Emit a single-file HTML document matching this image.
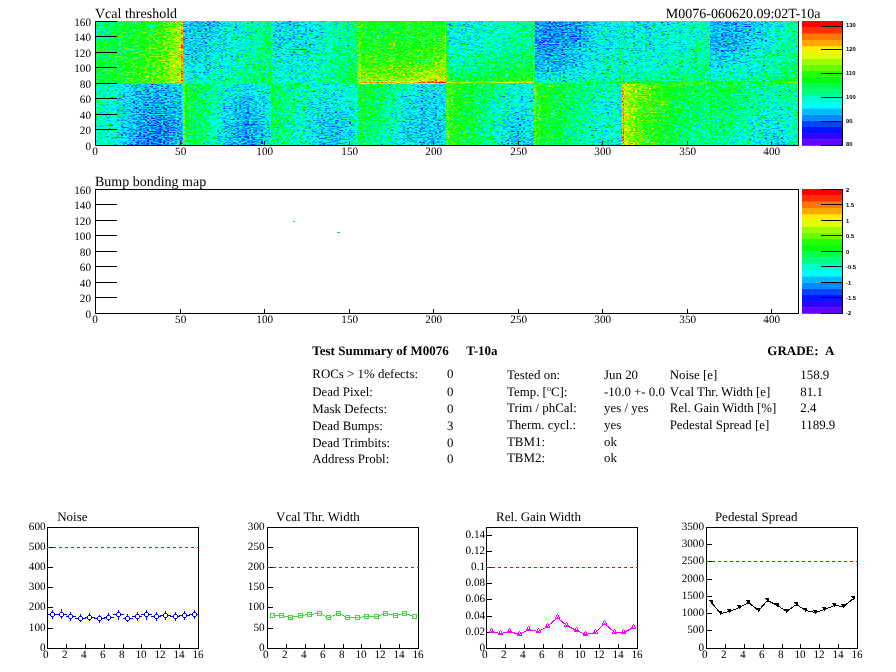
<!DOCTYPE html>
<html><head><meta charset="utf-8"><title>Test Summary of M0076 T-10a</title>
<style>html,body{margin:0;padding:0;background:#fff;}svg{display:block;}text{font-family:"Liberation Serif",serif;fill:#000;text-rendering:geometricPrecision;}.cb{font-family:"Liberation Sans",sans-serif;font-weight:bold;font-size:5.8px;}.ax{font-size:11.2px;}.tt{font-size:14px;}.st{font-size:13px;}.sm{font-size:12.9px;}.b{font-weight:bold;}</style></head><body>
<svg width="896" height="672" viewBox="0 0 896 672" style="opacity:0.9999">
<defs>
<filter id="pal" x="95" y="21" width="704" height="125" filterUnits="userSpaceOnUse" color-interpolation-filters="sRGB"><feTurbulence type="fractalNoise" baseFrequency="0.43 0.83" numOctaves="2" seed="7" result="t"/><feColorMatrix in="t" type="matrix" values="0.3333 0.3333 0.3334 0 0  0.3333 0.3333 0.3334 0 0  0.3333 0.3333 0.3334 0 0  0 0 0 0 1" result="n"/><feFlood flood-color="#fff" x="95" y="21" width="1" height="125" result="fl"/><feOffset in="fl" dx="0" dy="0" x="95" y="21" width="2" height="125" result="cell"/><feTile in="cell" result="mask"/><feComposite in="n" in2="mask" operator="in" result="ne"/><feOffset in="ne" dx="1" dy="0" result="no"/><feMerge result="nb"><feMergeNode in="ne"/><feMergeNode in="no"/></feMerge><feComposite in="SourceGraphic" in2="nb" operator="arithmetic" k1="0" k2="1" k3="1.000" k4="-0.500" result="s"/><feComponentTransfer in="s"><feFuncR type="discrete" tableValues="0.387 0.200 0.000 0.000 0.000 0.000 0.000 0.000 0.000 0.000 0.000 0.133 0.413 0.600 0.880 1.000 1.000 1.000 1.000 1.000"/><feFuncG type="discrete" tableValues="0.000 0.000 0.080 0.267 0.547 0.733 1.000 1.000 1.000 1.000 1.000 1.000 1.000 1.000 1.000 0.933 0.653 0.467 0.187 0.000"/><feFuncB type="discrete" tableValues="1.000 1.000 1.000 1.000 1.000 1.000 0.987 0.800 0.520 0.333 0.053 0.000 0.000 0.000 0.000 0.000 0.000 0.000 0.000 0.000"/></feComponentTransfer></filter>
</defs>
<g>
<rect x="95.0" y="129.7" width="22.3" height="15.8" fill="#00ffcc"/>
<rect x="95.0" y="114.2" width="22.3" height="15.8" fill="#00ffcc"/>
<rect x="95.0" y="98.7" width="22.3" height="15.8" fill="#00ffcc"/>
<rect x="95.0" y="83.2" width="22.3" height="15.8" fill="#00ffcc"/>
<rect x="117.0" y="129.7" width="22.3" height="15.8" fill="#00bbff"/>
<rect x="117.0" y="114.2" width="22.3" height="15.8" fill="#00bbff"/>
<rect x="117.0" y="98.7" width="22.3" height="15.8" fill="#00bbff"/>
<rect x="117.0" y="83.2" width="22.3" height="15.8" fill="#00fffc"/>
<rect x="138.9" y="129.7" width="22.3" height="15.8" fill="#008bff"/>
<rect x="138.9" y="114.2" width="22.3" height="15.8" fill="#008bff"/>
<rect x="138.9" y="98.7" width="22.3" height="15.8" fill="#008bff"/>
<rect x="138.9" y="83.2" width="22.3" height="15.8" fill="#00bbff"/>
<rect x="160.9" y="129.7" width="22.3" height="15.8" fill="#008bff"/>
<rect x="160.9" y="114.2" width="22.3" height="15.8" fill="#008bff"/>
<rect x="160.9" y="98.7" width="22.3" height="15.8" fill="#00bbff"/>
<rect x="160.9" y="83.2" width="22.3" height="15.8" fill="#00bbff"/>
<rect x="95.0" y="67.7" width="22.3" height="15.8" fill="#00ff55"/>
<rect x="95.0" y="52.2" width="22.3" height="15.8" fill="#00ff55"/>
<rect x="95.0" y="36.7" width="22.3" height="15.8" fill="#00ff55"/>
<rect x="95.0" y="21.2" width="22.3" height="15.8" fill="#00ff85"/>
<rect x="117.0" y="67.7" width="22.3" height="15.8" fill="#00ff0e"/>
<rect x="117.0" y="52.2" width="22.3" height="15.8" fill="#00ff0e"/>
<rect x="117.0" y="36.7" width="22.3" height="15.8" fill="#00ff0e"/>
<rect x="117.0" y="21.2" width="22.3" height="15.8" fill="#00ff55"/>
<rect x="138.9" y="67.7" width="22.3" height="15.8" fill="#22ff00"/>
<rect x="138.9" y="52.2" width="22.3" height="15.8" fill="#22ff00"/>
<rect x="138.9" y="36.7" width="22.3" height="15.8" fill="#22ff00"/>
<rect x="138.9" y="21.2" width="22.3" height="15.8" fill="#00ff0e"/>
<rect x="160.9" y="67.7" width="22.3" height="15.8" fill="#99ff00"/>
<rect x="160.9" y="52.2" width="22.3" height="15.8" fill="#99ff00"/>
<rect x="160.9" y="36.7" width="22.3" height="15.8" fill="#69ff00"/>
<rect x="160.9" y="21.2" width="22.3" height="15.8" fill="#69ff00"/>
<rect x="182.9" y="129.7" width="22.3" height="15.8" fill="#00ff55"/>
<rect x="182.9" y="114.2" width="22.3" height="15.8" fill="#00ff55"/>
<rect x="182.9" y="98.7" width="22.3" height="15.8" fill="#00ff55"/>
<rect x="182.9" y="83.2" width="22.3" height="15.8" fill="#00ff55"/>
<rect x="204.8" y="129.7" width="22.3" height="15.8" fill="#00ffcc"/>
<rect x="204.8" y="114.2" width="22.3" height="15.8" fill="#00ffcc"/>
<rect x="204.8" y="98.7" width="22.3" height="15.8" fill="#00ffcc"/>
<rect x="204.8" y="83.2" width="22.3" height="15.8" fill="#00ffcc"/>
<rect x="226.8" y="129.7" width="22.3" height="15.8" fill="#00bbff"/>
<rect x="226.8" y="114.2" width="22.3" height="15.8" fill="#00bbff"/>
<rect x="226.8" y="98.7" width="22.3" height="15.8" fill="#00bbff"/>
<rect x="226.8" y="83.2" width="22.3" height="15.8" fill="#00fffc"/>
<rect x="248.8" y="129.7" width="22.3" height="15.8" fill="#00bbff"/>
<rect x="248.8" y="114.2" width="22.3" height="15.8" fill="#00bbff"/>
<rect x="248.8" y="98.7" width="22.3" height="15.8" fill="#00bbff"/>
<rect x="248.8" y="83.2" width="22.3" height="15.8" fill="#00fffc"/>
<rect x="182.9" y="67.7" width="22.3" height="15.8" fill="#00fffc"/>
<rect x="182.9" y="52.2" width="22.3" height="15.8" fill="#00fffc"/>
<rect x="182.9" y="36.7" width="22.3" height="15.8" fill="#00bbff"/>
<rect x="182.9" y="21.2" width="22.3" height="15.8" fill="#00bbff"/>
<rect x="204.8" y="67.7" width="22.3" height="15.8" fill="#00ffcc"/>
<rect x="204.8" y="52.2" width="22.3" height="15.8" fill="#00fffc"/>
<rect x="204.8" y="36.7" width="22.3" height="15.8" fill="#00fffc"/>
<rect x="204.8" y="21.2" width="22.3" height="15.8" fill="#00bbff"/>
<rect x="226.8" y="67.7" width="22.3" height="15.8" fill="#00ff85"/>
<rect x="226.8" y="52.2" width="22.3" height="15.8" fill="#00ffcc"/>
<rect x="226.8" y="36.7" width="22.3" height="15.8" fill="#00ffcc"/>
<rect x="226.8" y="21.2" width="22.3" height="15.8" fill="#00fffc"/>
<rect x="248.8" y="67.7" width="22.3" height="15.8" fill="#00ff55"/>
<rect x="248.8" y="52.2" width="22.3" height="15.8" fill="#00ff85"/>
<rect x="248.8" y="36.7" width="22.3" height="15.8" fill="#00ff85"/>
<rect x="248.8" y="21.2" width="22.3" height="15.8" fill="#00ff85"/>
<rect x="270.8" y="129.7" width="22.3" height="15.8" fill="#00ff85"/>
<rect x="270.8" y="114.2" width="22.3" height="15.8" fill="#00ff85"/>
<rect x="270.8" y="98.7" width="22.3" height="15.8" fill="#00ff85"/>
<rect x="270.8" y="83.2" width="22.3" height="15.8" fill="#00ff85"/>
<rect x="292.7" y="129.7" width="22.3" height="15.8" fill="#00fffc"/>
<rect x="292.7" y="114.2" width="22.3" height="15.8" fill="#00fffc"/>
<rect x="292.7" y="98.7" width="22.3" height="15.8" fill="#00ffcc"/>
<rect x="292.7" y="83.2" width="22.3" height="15.8" fill="#00ffcc"/>
<rect x="314.7" y="129.7" width="22.3" height="15.8" fill="#00bbff"/>
<rect x="314.7" y="114.2" width="22.3" height="15.8" fill="#00bbff"/>
<rect x="314.7" y="98.7" width="22.3" height="15.8" fill="#00fffc"/>
<rect x="314.7" y="83.2" width="22.3" height="15.8" fill="#00fffc"/>
<rect x="336.7" y="129.7" width="22.3" height="15.8" fill="#00fffc"/>
<rect x="336.7" y="114.2" width="22.3" height="15.8" fill="#00fffc"/>
<rect x="336.7" y="98.7" width="22.3" height="15.8" fill="#00fffc"/>
<rect x="336.7" y="83.2" width="22.3" height="15.8" fill="#00ffcc"/>
<rect x="270.8" y="67.7" width="22.3" height="15.8" fill="#00fffc"/>
<rect x="270.8" y="52.2" width="22.3" height="15.8" fill="#00fffc"/>
<rect x="270.8" y="36.7" width="22.3" height="15.8" fill="#00fffc"/>
<rect x="270.8" y="21.2" width="22.3" height="15.8" fill="#00fffc"/>
<rect x="292.7" y="67.7" width="22.3" height="15.8" fill="#00ffcc"/>
<rect x="292.7" y="52.2" width="22.3" height="15.8" fill="#00fffc"/>
<rect x="292.7" y="36.7" width="22.3" height="15.8" fill="#00fffc"/>
<rect x="292.7" y="21.2" width="22.3" height="15.8" fill="#00fffc"/>
<rect x="314.7" y="67.7" width="22.3" height="15.8" fill="#00ff85"/>
<rect x="314.7" y="52.2" width="22.3" height="15.8" fill="#00ffcc"/>
<rect x="314.7" y="36.7" width="22.3" height="15.8" fill="#00ffcc"/>
<rect x="314.7" y="21.2" width="22.3" height="15.8" fill="#00ffcc"/>
<rect x="336.7" y="67.7" width="22.3" height="15.8" fill="#00ff55"/>
<rect x="336.7" y="52.2" width="22.3" height="15.8" fill="#00ff85"/>
<rect x="336.7" y="36.7" width="22.3" height="15.8" fill="#00ff85"/>
<rect x="336.7" y="21.2" width="22.3" height="15.8" fill="#00ff85"/>
<rect x="358.6" y="129.7" width="22.3" height="15.8" fill="#00ff55"/>
<rect x="358.6" y="114.2" width="22.3" height="15.8" fill="#00ff55"/>
<rect x="358.6" y="98.7" width="22.3" height="15.8" fill="#00ff55"/>
<rect x="358.6" y="83.2" width="22.3" height="15.8" fill="#00ff55"/>
<rect x="380.6" y="129.7" width="22.3" height="15.8" fill="#00ffcc"/>
<rect x="380.6" y="114.2" width="22.3" height="15.8" fill="#00ffcc"/>
<rect x="380.6" y="98.7" width="22.3" height="15.8" fill="#00ffcc"/>
<rect x="380.6" y="83.2" width="22.3" height="15.8" fill="#00ff85"/>
<rect x="402.6" y="129.7" width="22.3" height="15.8" fill="#00bbff"/>
<rect x="402.6" y="114.2" width="22.3" height="15.8" fill="#00bbff"/>
<rect x="402.6" y="98.7" width="22.3" height="15.8" fill="#00fffc"/>
<rect x="402.6" y="83.2" width="22.3" height="15.8" fill="#00fffc"/>
<rect x="424.5" y="129.7" width="22.3" height="15.8" fill="#00bbff"/>
<rect x="424.5" y="114.2" width="22.3" height="15.8" fill="#00bbff"/>
<rect x="424.5" y="98.7" width="22.3" height="15.8" fill="#00bbff"/>
<rect x="424.5" y="83.2" width="22.3" height="15.8" fill="#00fffc"/>
<rect x="358.6" y="67.7" width="22.3" height="15.8" fill="#69ff00"/>
<rect x="358.6" y="52.2" width="22.3" height="15.8" fill="#22ff00"/>
<rect x="358.6" y="36.7" width="22.3" height="15.8" fill="#00ff0e"/>
<rect x="358.6" y="21.2" width="22.3" height="15.8" fill="#00ff0e"/>
<rect x="380.6" y="67.7" width="22.3" height="15.8" fill="#69ff00"/>
<rect x="380.6" y="52.2" width="22.3" height="15.8" fill="#22ff00"/>
<rect x="380.6" y="36.7" width="22.3" height="15.8" fill="#00ff0e"/>
<rect x="380.6" y="21.2" width="22.3" height="15.8" fill="#00ff0e"/>
<rect x="402.6" y="67.7" width="22.3" height="15.8" fill="#69ff00"/>
<rect x="402.6" y="52.2" width="22.3" height="15.8" fill="#22ff00"/>
<rect x="402.6" y="36.7" width="22.3" height="15.8" fill="#00ff0e"/>
<rect x="402.6" y="21.2" width="22.3" height="15.8" fill="#00ff0e"/>
<rect x="424.5" y="67.7" width="22.3" height="15.8" fill="#99ff00"/>
<rect x="424.5" y="52.2" width="22.3" height="15.8" fill="#69ff00"/>
<rect x="424.5" y="36.7" width="22.3" height="15.8" fill="#22ff00"/>
<rect x="424.5" y="21.2" width="22.3" height="15.8" fill="#00ff0e"/>
<rect x="446.5" y="129.7" width="22.3" height="15.8" fill="#00ff0e"/>
<rect x="446.5" y="114.2" width="22.3" height="15.8" fill="#00ff0e"/>
<rect x="446.5" y="98.7" width="22.3" height="15.8" fill="#00ff0e"/>
<rect x="446.5" y="83.2" width="22.3" height="15.8" fill="#00ff0e"/>
<rect x="468.5" y="129.7" width="22.3" height="15.8" fill="#00ff85"/>
<rect x="468.5" y="114.2" width="22.3" height="15.8" fill="#00ff55"/>
<rect x="468.5" y="98.7" width="22.3" height="15.8" fill="#00ff55"/>
<rect x="468.5" y="83.2" width="22.3" height="15.8" fill="#00ff55"/>
<rect x="490.4" y="129.7" width="22.3" height="15.8" fill="#00fffc"/>
<rect x="490.4" y="114.2" width="22.3" height="15.8" fill="#00ffcc"/>
<rect x="490.4" y="98.7" width="22.3" height="15.8" fill="#00ffcc"/>
<rect x="490.4" y="83.2" width="22.3" height="15.8" fill="#00ffcc"/>
<rect x="512.4" y="129.7" width="22.3" height="15.8" fill="#00bbff"/>
<rect x="512.4" y="114.2" width="22.3" height="15.8" fill="#00fffc"/>
<rect x="512.4" y="98.7" width="22.3" height="15.8" fill="#00fffc"/>
<rect x="512.4" y="83.2" width="22.3" height="15.8" fill="#00ffcc"/>
<rect x="446.5" y="67.7" width="22.3" height="15.8" fill="#00ff55"/>
<rect x="446.5" y="52.2" width="22.3" height="15.8" fill="#00ffcc"/>
<rect x="446.5" y="36.7" width="22.3" height="15.8" fill="#00fffc"/>
<rect x="446.5" y="21.2" width="22.3" height="15.8" fill="#00fffc"/>
<rect x="468.5" y="67.7" width="22.3" height="15.8" fill="#00ff55"/>
<rect x="468.5" y="52.2" width="22.3" height="15.8" fill="#00ff85"/>
<rect x="468.5" y="36.7" width="22.3" height="15.8" fill="#00ffcc"/>
<rect x="468.5" y="21.2" width="22.3" height="15.8" fill="#00fffc"/>
<rect x="490.4" y="67.7" width="22.3" height="15.8" fill="#00ff55"/>
<rect x="490.4" y="52.2" width="22.3" height="15.8" fill="#00ff85"/>
<rect x="490.4" y="36.7" width="22.3" height="15.8" fill="#00ffcc"/>
<rect x="490.4" y="21.2" width="22.3" height="15.8" fill="#00ffcc"/>
<rect x="512.4" y="67.7" width="22.3" height="15.8" fill="#00ff0e"/>
<rect x="512.4" y="52.2" width="22.3" height="15.8" fill="#00ff55"/>
<rect x="512.4" y="36.7" width="22.3" height="15.8" fill="#00ff85"/>
<rect x="512.4" y="21.2" width="22.3" height="15.8" fill="#00ff85"/>
<rect x="534.4" y="129.7" width="22.3" height="15.8" fill="#00ff0e"/>
<rect x="534.4" y="114.2" width="22.3" height="15.8" fill="#00ff0e"/>
<rect x="534.4" y="98.7" width="22.3" height="15.8" fill="#00ff0e"/>
<rect x="534.4" y="83.2" width="22.3" height="15.8" fill="#00ff0e"/>
<rect x="556.3" y="129.7" width="22.3" height="15.8" fill="#00ff55"/>
<rect x="556.3" y="114.2" width="22.3" height="15.8" fill="#00ff55"/>
<rect x="556.3" y="98.7" width="22.3" height="15.8" fill="#00ff55"/>
<rect x="556.3" y="83.2" width="22.3" height="15.8" fill="#00ff55"/>
<rect x="578.3" y="129.7" width="22.3" height="15.8" fill="#00ffcc"/>
<rect x="578.3" y="114.2" width="22.3" height="15.8" fill="#00ffcc"/>
<rect x="578.3" y="98.7" width="22.3" height="15.8" fill="#00ffcc"/>
<rect x="578.3" y="83.2" width="22.3" height="15.8" fill="#00ff85"/>
<rect x="600.3" y="129.7" width="22.3" height="15.8" fill="#00ffcc"/>
<rect x="600.3" y="114.2" width="22.3" height="15.8" fill="#00fffc"/>
<rect x="600.3" y="98.7" width="22.3" height="15.8" fill="#00ffcc"/>
<rect x="600.3" y="83.2" width="22.3" height="15.8" fill="#00ffcc"/>
<rect x="534.4" y="67.7" width="22.3" height="15.8" fill="#00fffc"/>
<rect x="534.4" y="52.2" width="22.3" height="15.8" fill="#00bbff"/>
<rect x="534.4" y="36.7" width="22.3" height="15.8" fill="#008bff"/>
<rect x="534.4" y="21.2" width="22.3" height="15.8" fill="#008bff"/>
<rect x="556.3" y="67.7" width="22.3" height="15.8" fill="#00fffc"/>
<rect x="556.3" y="52.2" width="22.3" height="15.8" fill="#00bbff"/>
<rect x="556.3" y="36.7" width="22.3" height="15.8" fill="#008bff"/>
<rect x="556.3" y="21.2" width="22.3" height="15.8" fill="#008bff"/>
<rect x="578.3" y="67.7" width="22.3" height="15.8" fill="#00ffcc"/>
<rect x="578.3" y="52.2" width="22.3" height="15.8" fill="#00fffc"/>
<rect x="578.3" y="36.7" width="22.3" height="15.8" fill="#00bbff"/>
<rect x="578.3" y="21.2" width="22.3" height="15.8" fill="#00bbff"/>
<rect x="600.3" y="67.7" width="22.3" height="15.8" fill="#00ffcc"/>
<rect x="600.3" y="52.2" width="22.3" height="15.8" fill="#00ffcc"/>
<rect x="600.3" y="36.7" width="22.3" height="15.8" fill="#00fffc"/>
<rect x="600.3" y="21.2" width="22.3" height="15.8" fill="#00fffc"/>
<rect x="622.2" y="129.7" width="22.3" height="15.8" fill="#69ff00"/>
<rect x="622.2" y="114.2" width="22.3" height="15.8" fill="#69ff00"/>
<rect x="622.2" y="98.7" width="22.3" height="15.8" fill="#69ff00"/>
<rect x="622.2" y="83.2" width="22.3" height="15.8" fill="#99ff00"/>
<rect x="644.2" y="129.7" width="22.3" height="15.8" fill="#00ff0e"/>
<rect x="644.2" y="114.2" width="22.3" height="15.8" fill="#22ff00"/>
<rect x="644.2" y="98.7" width="22.3" height="15.8" fill="#22ff00"/>
<rect x="644.2" y="83.2" width="22.3" height="15.8" fill="#22ff00"/>
<rect x="666.2" y="129.7" width="22.3" height="15.8" fill="#00ff55"/>
<rect x="666.2" y="114.2" width="22.3" height="15.8" fill="#00ff55"/>
<rect x="666.2" y="98.7" width="22.3" height="15.8" fill="#00ff55"/>
<rect x="666.2" y="83.2" width="22.3" height="15.8" fill="#00ff0e"/>
<rect x="688.2" y="129.7" width="22.3" height="15.8" fill="#00ff85"/>
<rect x="688.2" y="114.2" width="22.3" height="15.8" fill="#00ff85"/>
<rect x="688.2" y="98.7" width="22.3" height="15.8" fill="#00ff85"/>
<rect x="688.2" y="83.2" width="22.3" height="15.8" fill="#00ff55"/>
<rect x="622.2" y="67.7" width="22.3" height="15.8" fill="#00ffcc"/>
<rect x="622.2" y="52.2" width="22.3" height="15.8" fill="#00ffcc"/>
<rect x="622.2" y="36.7" width="22.3" height="15.8" fill="#00fffc"/>
<rect x="622.2" y="21.2" width="22.3" height="15.8" fill="#00fffc"/>
<rect x="644.2" y="67.7" width="22.3" height="15.8" fill="#00ffcc"/>
<rect x="644.2" y="52.2" width="22.3" height="15.8" fill="#00ffcc"/>
<rect x="644.2" y="36.7" width="22.3" height="15.8" fill="#00fffc"/>
<rect x="644.2" y="21.2" width="22.3" height="15.8" fill="#00fffc"/>
<rect x="666.2" y="67.7" width="22.3" height="15.8" fill="#00ff85"/>
<rect x="666.2" y="52.2" width="22.3" height="15.8" fill="#00ffcc"/>
<rect x="666.2" y="36.7" width="22.3" height="15.8" fill="#00ffcc"/>
<rect x="666.2" y="21.2" width="22.3" height="15.8" fill="#00fffc"/>
<rect x="688.2" y="67.7" width="22.3" height="15.8" fill="#00ff85"/>
<rect x="688.2" y="52.2" width="22.3" height="15.8" fill="#00ffcc"/>
<rect x="688.2" y="36.7" width="22.3" height="15.8" fill="#00ffcc"/>
<rect x="688.2" y="21.2" width="22.3" height="15.8" fill="#00ffcc"/>
<rect x="710.1" y="129.7" width="22.3" height="15.8" fill="#00ff85"/>
<rect x="710.1" y="114.2" width="22.3" height="15.8" fill="#00ff85"/>
<rect x="710.1" y="98.7" width="22.3" height="15.8" fill="#00ff55"/>
<rect x="710.1" y="83.2" width="22.3" height="15.8" fill="#00ff55"/>
<rect x="732.1" y="129.7" width="22.3" height="15.8" fill="#00ffcc"/>
<rect x="732.1" y="114.2" width="22.3" height="15.8" fill="#00ffcc"/>
<rect x="732.1" y="98.7" width="22.3" height="15.8" fill="#00ff85"/>
<rect x="732.1" y="83.2" width="22.3" height="15.8" fill="#00ff85"/>
<rect x="754.1" y="129.7" width="22.3" height="15.8" fill="#00fffc"/>
<rect x="754.1" y="114.2" width="22.3" height="15.8" fill="#00fffc"/>
<rect x="754.1" y="98.7" width="22.3" height="15.8" fill="#00ffcc"/>
<rect x="754.1" y="83.2" width="22.3" height="15.8" fill="#00ff85"/>
<rect x="776.0" y="129.7" width="22.3" height="15.8" fill="#00ffcc"/>
<rect x="776.0" y="114.2" width="22.3" height="15.8" fill="#00ffcc"/>
<rect x="776.0" y="98.7" width="22.3" height="15.8" fill="#00ffcc"/>
<rect x="776.0" y="83.2" width="22.3" height="15.8" fill="#00ff85"/>
<rect x="710.1" y="67.7" width="22.3" height="15.8" fill="#00ffcc"/>
<rect x="710.1" y="52.2" width="22.3" height="15.8" fill="#00fffc"/>
<rect x="710.1" y="36.7" width="22.3" height="15.8" fill="#00bbff"/>
<rect x="710.1" y="21.2" width="22.3" height="15.8" fill="#00bbff"/>
<rect x="732.1" y="67.7" width="22.3" height="15.8" fill="#00ffcc"/>
<rect x="732.1" y="52.2" width="22.3" height="15.8" fill="#00fffc"/>
<rect x="732.1" y="36.7" width="22.3" height="15.8" fill="#00bbff"/>
<rect x="732.1" y="21.2" width="22.3" height="15.8" fill="#00bbff"/>
<rect x="754.1" y="67.7" width="22.3" height="15.8" fill="#00ff85"/>
<rect x="754.1" y="52.2" width="22.3" height="15.8" fill="#00ffcc"/>
<rect x="754.1" y="36.7" width="22.3" height="15.8" fill="#00fffc"/>
<rect x="754.1" y="21.2" width="22.3" height="15.8" fill="#00fffc"/>
<rect x="776.0" y="67.7" width="22.3" height="15.8" fill="#00ff55"/>
<rect x="776.0" y="52.2" width="22.3" height="15.8" fill="#00ff85"/>
<rect x="776.0" y="36.7" width="22.3" height="15.8" fill="#00ffcc"/>
<rect x="776.0" y="21.2" width="22.3" height="15.8" fill="#00ffcc"/>
</g>
<g filter="url(#pal)">
<rect x="95" y="21" width="704" height="125" fill="#808080"/>
<rect x="95.0" y="139.0" width="7.0" height="6.5" fill="#636363"/>
<rect x="95.0" y="132.8" width="7.0" height="6.5" fill="#636363"/>
<rect x="95.0" y="126.6" width="7.0" height="6.5" fill="#636363"/>
<rect x="95.0" y="120.4" width="7.0" height="6.5" fill="#636363"/>
<rect x="95.0" y="114.2" width="7.0" height="6.5" fill="#636363"/>
<rect x="95.0" y="108.0" width="7.0" height="6.5" fill="#636363"/>
<rect x="95.0" y="101.8" width="7.0" height="6.5" fill="#636363"/>
<rect x="95.0" y="95.6" width="7.0" height="6.5" fill="#636363"/>
<rect x="95.0" y="89.4" width="7.0" height="6.5" fill="#646464"/>
<rect x="95.0" y="83.2" width="7.0" height="6.5" fill="#656565"/>
<rect x="101.8" y="139.0" width="7.0" height="6.5" fill="#5e5e5e"/>
<rect x="101.8" y="132.8" width="7.0" height="6.5" fill="#5e5e5e"/>
<rect x="101.8" y="126.6" width="7.0" height="6.5" fill="#5e5e5e"/>
<rect x="101.8" y="120.4" width="7.0" height="6.5" fill="#5d5d5d"/>
<rect x="101.8" y="114.2" width="7.0" height="6.5" fill="#5d5d5d"/>
<rect x="101.8" y="108.0" width="7.0" height="6.5" fill="#5d5d5d"/>
<rect x="101.8" y="101.8" width="7.0" height="6.5" fill="#5d5d5d"/>
<rect x="101.8" y="95.6" width="7.0" height="6.5" fill="#5e5e5e"/>
<rect x="101.8" y="89.4" width="7.0" height="6.5" fill="#5f5f5f"/>
<rect x="101.8" y="83.2" width="7.0" height="6.5" fill="#606060"/>
<rect x="108.5" y="139.0" width="7.0" height="6.5" fill="#595959"/>
<rect x="108.5" y="132.8" width="7.0" height="6.5" fill="#595959"/>
<rect x="108.5" y="126.6" width="7.0" height="6.5" fill="#585858"/>
<rect x="108.5" y="120.4" width="7.0" height="6.5" fill="#585858"/>
<rect x="108.5" y="114.2" width="7.0" height="6.5" fill="#585858"/>
<rect x="108.5" y="108.0" width="7.0" height="6.5" fill="#585858"/>
<rect x="108.5" y="101.8" width="7.0" height="6.5" fill="#585858"/>
<rect x="108.5" y="95.6" width="7.0" height="6.5" fill="#595959"/>
<rect x="108.5" y="89.4" width="7.0" height="6.5" fill="#5a5a5a"/>
<rect x="108.5" y="83.2" width="7.0" height="6.5" fill="#5c5c5c"/>
<rect x="115.3" y="139.0" width="7.0" height="6.5" fill="#545454"/>
<rect x="115.3" y="132.8" width="7.0" height="6.5" fill="#535353"/>
<rect x="115.3" y="126.6" width="7.0" height="6.5" fill="#535353"/>
<rect x="115.3" y="120.4" width="7.0" height="6.5" fill="#525252"/>
<rect x="115.3" y="114.2" width="7.0" height="6.5" fill="#525252"/>
<rect x="115.3" y="108.0" width="7.0" height="6.5" fill="#525252"/>
<rect x="115.3" y="101.8" width="7.0" height="6.5" fill="#525252"/>
<rect x="115.3" y="95.6" width="7.0" height="6.5" fill="#545454"/>
<rect x="115.3" y="89.4" width="7.0" height="6.5" fill="#555555"/>
<rect x="115.3" y="83.2" width="7.0" height="6.5" fill="#575757"/>
<rect x="122.0" y="139.0" width="7.0" height="6.5" fill="#4c4c4c"/>
<rect x="122.0" y="132.8" width="7.0" height="6.5" fill="#4c4c4c"/>
<rect x="122.0" y="126.6" width="7.0" height="6.5" fill="#4b4b4b"/>
<rect x="122.0" y="120.4" width="7.0" height="6.5" fill="#4b4b4b"/>
<rect x="122.0" y="114.2" width="7.0" height="6.5" fill="#4c4c4c"/>
<rect x="122.0" y="108.0" width="7.0" height="6.5" fill="#4c4c4c"/>
<rect x="122.0" y="101.8" width="7.0" height="6.5" fill="#4d4d4d"/>
<rect x="122.0" y="95.6" width="7.0" height="6.5" fill="#4f4f4f"/>
<rect x="122.0" y="89.4" width="7.0" height="6.5" fill="#505050"/>
<rect x="122.0" y="83.2" width="7.0" height="6.5" fill="#525252"/>
<rect x="128.8" y="139.0" width="7.0" height="6.5" fill="#444444"/>
<rect x="128.8" y="132.8" width="7.0" height="6.5" fill="#444444"/>
<rect x="128.8" y="126.6" width="7.0" height="6.5" fill="#444444"/>
<rect x="128.8" y="120.4" width="7.0" height="6.5" fill="#454545"/>
<rect x="128.8" y="114.2" width="7.0" height="6.5" fill="#464646"/>
<rect x="128.8" y="108.0" width="7.0" height="6.5" fill="#474747"/>
<rect x="128.8" y="101.8" width="7.0" height="6.5" fill="#484848"/>
<rect x="128.8" y="95.6" width="7.0" height="6.5" fill="#494949"/>
<rect x="128.8" y="89.4" width="7.0" height="6.5" fill="#4b4b4b"/>
<rect x="128.8" y="83.2" width="7.0" height="6.5" fill="#4d4d4d"/>
<rect x="135.6" y="139.0" width="7.0" height="6.5" fill="#3b3b3b"/>
<rect x="135.6" y="132.8" width="7.0" height="6.5" fill="#3c3c3c"/>
<rect x="135.6" y="126.6" width="7.0" height="6.5" fill="#3d3d3d"/>
<rect x="135.6" y="120.4" width="7.0" height="6.5" fill="#3e3e3e"/>
<rect x="135.6" y="114.2" width="7.0" height="6.5" fill="#3f3f3f"/>
<rect x="135.6" y="108.0" width="7.0" height="6.5" fill="#414141"/>
<rect x="135.6" y="101.8" width="7.0" height="6.5" fill="#424242"/>
<rect x="135.6" y="95.6" width="7.0" height="6.5" fill="#444444"/>
<rect x="135.6" y="89.4" width="7.0" height="6.5" fill="#464646"/>
<rect x="135.6" y="83.2" width="7.0" height="6.5" fill="#494949"/>
<rect x="142.3" y="139.0" width="7.0" height="6.5" fill="#393939"/>
<rect x="142.3" y="132.8" width="7.0" height="6.5" fill="#3a3a3a"/>
<rect x="142.3" y="126.6" width="7.0" height="6.5" fill="#3a3a3a"/>
<rect x="142.3" y="120.4" width="7.0" height="6.5" fill="#3b3b3b"/>
<rect x="142.3" y="114.2" width="7.0" height="6.5" fill="#3d3d3d"/>
<rect x="142.3" y="108.0" width="7.0" height="6.5" fill="#3f3f3f"/>
<rect x="142.3" y="101.8" width="7.0" height="6.5" fill="#404040"/>
<rect x="142.3" y="95.6" width="7.0" height="6.5" fill="#434343"/>
<rect x="142.3" y="89.4" width="7.0" height="6.5" fill="#454545"/>
<rect x="142.3" y="83.2" width="7.0" height="6.5" fill="#484848"/>
<rect x="149.1" y="139.0" width="7.0" height="6.5" fill="#373737"/>
<rect x="149.1" y="132.8" width="7.0" height="6.5" fill="#373737"/>
<rect x="149.1" y="126.6" width="7.0" height="6.5" fill="#383838"/>
<rect x="149.1" y="120.4" width="7.0" height="6.5" fill="#393939"/>
<rect x="149.1" y="114.2" width="7.0" height="6.5" fill="#3b3b3b"/>
<rect x="149.1" y="108.0" width="7.0" height="6.5" fill="#3d3d3d"/>
<rect x="149.1" y="101.8" width="7.0" height="6.5" fill="#3f3f3f"/>
<rect x="149.1" y="95.6" width="7.0" height="6.5" fill="#414141"/>
<rect x="149.1" y="89.4" width="7.0" height="6.5" fill="#444444"/>
<rect x="149.1" y="83.2" width="7.0" height="6.5" fill="#474747"/>
<rect x="155.8" y="139.0" width="7.0" height="6.5" fill="#343434"/>
<rect x="155.8" y="132.8" width="7.0" height="6.5" fill="#353535"/>
<rect x="155.8" y="126.6" width="7.0" height="6.5" fill="#363636"/>
<rect x="155.8" y="120.4" width="7.0" height="6.5" fill="#373737"/>
<rect x="155.8" y="114.2" width="7.0" height="6.5" fill="#393939"/>
<rect x="155.8" y="108.0" width="7.0" height="6.5" fill="#3b3b3b"/>
<rect x="155.8" y="101.8" width="7.0" height="6.5" fill="#3d3d3d"/>
<rect x="155.8" y="95.6" width="7.0" height="6.5" fill="#404040"/>
<rect x="155.8" y="89.4" width="7.0" height="6.5" fill="#434343"/>
<rect x="155.8" y="83.2" width="7.0" height="6.5" fill="#464646"/>
<rect x="162.6" y="139.0" width="7.0" height="6.5" fill="#383838"/>
<rect x="162.6" y="132.8" width="7.0" height="6.5" fill="#393939"/>
<rect x="162.6" y="126.6" width="7.0" height="6.5" fill="#393939"/>
<rect x="162.6" y="120.4" width="7.0" height="6.5" fill="#3a3a3a"/>
<rect x="162.6" y="114.2" width="7.0" height="6.5" fill="#3c3c3c"/>
<rect x="162.6" y="108.0" width="7.0" height="6.5" fill="#3e3e3e"/>
<rect x="162.6" y="101.8" width="7.0" height="6.5" fill="#404040"/>
<rect x="162.6" y="95.6" width="7.0" height="6.5" fill="#424242"/>
<rect x="162.6" y="89.4" width="7.0" height="6.5" fill="#454545"/>
<rect x="162.6" y="83.2" width="7.0" height="6.5" fill="#474747"/>
<rect x="169.4" y="139.0" width="7.0" height="6.5" fill="#3d3d3d"/>
<rect x="169.4" y="132.8" width="7.0" height="6.5" fill="#3d3d3d"/>
<rect x="169.4" y="126.6" width="7.0" height="6.5" fill="#3d3d3d"/>
<rect x="169.4" y="120.4" width="7.0" height="6.5" fill="#3d3d3d"/>
<rect x="169.4" y="114.2" width="7.0" height="6.5" fill="#3f3f3f"/>
<rect x="169.4" y="108.0" width="7.0" height="6.5" fill="#414141"/>
<rect x="169.4" y="101.8" width="7.0" height="6.5" fill="#434343"/>
<rect x="169.4" y="95.6" width="7.0" height="6.5" fill="#454545"/>
<rect x="169.4" y="89.4" width="7.0" height="6.5" fill="#474747"/>
<rect x="169.4" y="83.2" width="7.0" height="6.5" fill="#494949"/>
<rect x="176.1" y="139.0" width="7.0" height="6.5" fill="#434343"/>
<rect x="176.1" y="132.8" width="7.0" height="6.5" fill="#424242"/>
<rect x="176.1" y="126.6" width="7.0" height="6.5" fill="#414141"/>
<rect x="176.1" y="120.4" width="7.0" height="6.5" fill="#414141"/>
<rect x="176.1" y="114.2" width="7.0" height="6.5" fill="#434343"/>
<rect x="176.1" y="108.0" width="7.0" height="6.5" fill="#444444"/>
<rect x="176.1" y="101.8" width="7.0" height="6.5" fill="#464646"/>
<rect x="176.1" y="95.6" width="7.0" height="6.5" fill="#474747"/>
<rect x="176.1" y="89.4" width="7.0" height="6.5" fill="#494949"/>
<rect x="176.1" y="83.2" width="7.0" height="6.5" fill="#4b4b4b"/>
<rect x="95.0" y="77.0" width="7.0" height="6.5" fill="#7c7c7c"/>
<rect x="95.0" y="70.8" width="7.0" height="6.5" fill="#7c7c7c"/>
<rect x="95.0" y="64.6" width="7.0" height="6.5" fill="#7c7c7c"/>
<rect x="95.0" y="58.4" width="7.0" height="6.5" fill="#7c7c7c"/>
<rect x="95.0" y="52.2" width="7.0" height="6.5" fill="#7b7b7b"/>
<rect x="95.0" y="46.0" width="7.0" height="6.5" fill="#7a7a7a"/>
<rect x="95.0" y="39.8" width="7.0" height="6.5" fill="#797979"/>
<rect x="95.0" y="33.6" width="7.0" height="6.5" fill="#757575"/>
<rect x="95.0" y="27.4" width="7.0" height="6.5" fill="#6f6f6f"/>
<rect x="95.0" y="21.2" width="7.0" height="6.5" fill="#696969"/>
<rect x="101.8" y="77.0" width="7.0" height="6.5" fill="#7f7f7f"/>
<rect x="101.8" y="70.8" width="7.0" height="6.5" fill="#7f7f7f"/>
<rect x="101.8" y="64.6" width="7.0" height="6.5" fill="#7e7e7e"/>
<rect x="101.8" y="58.4" width="7.0" height="6.5" fill="#7e7e7e"/>
<rect x="101.8" y="52.2" width="7.0" height="6.5" fill="#7d7d7d"/>
<rect x="101.8" y="46.0" width="7.0" height="6.5" fill="#7c7c7c"/>
<rect x="101.8" y="39.8" width="7.0" height="6.5" fill="#7c7c7c"/>
<rect x="101.8" y="33.6" width="7.0" height="6.5" fill="#777777"/>
<rect x="101.8" y="27.4" width="7.0" height="6.5" fill="#727272"/>
<rect x="101.8" y="21.2" width="7.0" height="6.5" fill="#6d6d6d"/>
<rect x="108.5" y="77.0" width="7.0" height="6.5" fill="#828282"/>
<rect x="108.5" y="70.8" width="7.0" height="6.5" fill="#818181"/>
<rect x="108.5" y="64.6" width="7.0" height="6.5" fill="#818181"/>
<rect x="108.5" y="58.4" width="7.0" height="6.5" fill="#808080"/>
<rect x="108.5" y="52.2" width="7.0" height="6.5" fill="#7f7f7f"/>
<rect x="108.5" y="46.0" width="7.0" height="6.5" fill="#7f7f7f"/>
<rect x="108.5" y="39.8" width="7.0" height="6.5" fill="#7e7e7e"/>
<rect x="108.5" y="33.6" width="7.0" height="6.5" fill="#7a7a7a"/>
<rect x="108.5" y="27.4" width="7.0" height="6.5" fill="#767676"/>
<rect x="108.5" y="21.2" width="7.0" height="6.5" fill="#727272"/>
<rect x="115.3" y="77.0" width="7.0" height="6.5" fill="#858585"/>
<rect x="115.3" y="70.8" width="7.0" height="6.5" fill="#848484"/>
<rect x="115.3" y="64.6" width="7.0" height="6.5" fill="#838383"/>
<rect x="115.3" y="58.4" width="7.0" height="6.5" fill="#838383"/>
<rect x="115.3" y="52.2" width="7.0" height="6.5" fill="#828282"/>
<rect x="115.3" y="46.0" width="7.0" height="6.5" fill="#818181"/>
<rect x="115.3" y="39.8" width="7.0" height="6.5" fill="#808080"/>
<rect x="115.3" y="33.6" width="7.0" height="6.5" fill="#7d7d7d"/>
<rect x="115.3" y="27.4" width="7.0" height="6.5" fill="#7a7a7a"/>
<rect x="115.3" y="21.2" width="7.0" height="6.5" fill="#767676"/>
<rect x="122.0" y="77.0" width="7.0" height="6.5" fill="#898989"/>
<rect x="122.0" y="70.8" width="7.0" height="6.5" fill="#888888"/>
<rect x="122.0" y="64.6" width="7.0" height="6.5" fill="#878787"/>
<rect x="122.0" y="58.4" width="7.0" height="6.5" fill="#868686"/>
<rect x="122.0" y="52.2" width="7.0" height="6.5" fill="#858585"/>
<rect x="122.0" y="46.0" width="7.0" height="6.5" fill="#848484"/>
<rect x="122.0" y="39.8" width="7.0" height="6.5" fill="#848484"/>
<rect x="122.0" y="33.6" width="7.0" height="6.5" fill="#818181"/>
<rect x="122.0" y="27.4" width="7.0" height="6.5" fill="#7e7e7e"/>
<rect x="122.0" y="21.2" width="7.0" height="6.5" fill="#7a7a7a"/>
<rect x="128.8" y="77.0" width="7.0" height="6.5" fill="#8d8d8d"/>
<rect x="128.8" y="70.8" width="7.0" height="6.5" fill="#8b8b8b"/>
<rect x="128.8" y="64.6" width="7.0" height="6.5" fill="#8a8a8a"/>
<rect x="128.8" y="58.4" width="7.0" height="6.5" fill="#898989"/>
<rect x="128.8" y="52.2" width="7.0" height="6.5" fill="#888888"/>
<rect x="128.8" y="46.0" width="7.0" height="6.5" fill="#878787"/>
<rect x="128.8" y="39.8" width="7.0" height="6.5" fill="#878787"/>
<rect x="128.8" y="33.6" width="7.0" height="6.5" fill="#848484"/>
<rect x="128.8" y="27.4" width="7.0" height="6.5" fill="#828282"/>
<rect x="128.8" y="21.2" width="7.0" height="6.5" fill="#7f7f7f"/>
<rect x="135.6" y="77.0" width="7.0" height="6.5" fill="#909090"/>
<rect x="135.6" y="70.8" width="7.0" height="6.5" fill="#8f8f8f"/>
<rect x="135.6" y="64.6" width="7.0" height="6.5" fill="#8d8d8d"/>
<rect x="135.6" y="58.4" width="7.0" height="6.5" fill="#8c8c8c"/>
<rect x="135.6" y="52.2" width="7.0" height="6.5" fill="#8b8b8b"/>
<rect x="135.6" y="46.0" width="7.0" height="6.5" fill="#8a8a8a"/>
<rect x="135.6" y="39.8" width="7.0" height="6.5" fill="#8a8a8a"/>
<rect x="135.6" y="33.6" width="7.0" height="6.5" fill="#888888"/>
<rect x="135.6" y="27.4" width="7.0" height="6.5" fill="#858585"/>
<rect x="135.6" y="21.2" width="7.0" height="6.5" fill="#838383"/>
<rect x="142.3" y="77.0" width="7.0" height="6.5" fill="#949494"/>
<rect x="142.3" y="70.8" width="7.0" height="6.5" fill="#929292"/>
<rect x="142.3" y="64.6" width="7.0" height="6.5" fill="#919191"/>
<rect x="142.3" y="58.4" width="7.0" height="6.5" fill="#8f8f8f"/>
<rect x="142.3" y="52.2" width="7.0" height="6.5" fill="#8f8f8f"/>
<rect x="142.3" y="46.0" width="7.0" height="6.5" fill="#8e8e8e"/>
<rect x="142.3" y="39.8" width="7.0" height="6.5" fill="#8d8d8d"/>
<rect x="142.3" y="33.6" width="7.0" height="6.5" fill="#8b8b8b"/>
<rect x="142.3" y="27.4" width="7.0" height="6.5" fill="#898989"/>
<rect x="142.3" y="21.2" width="7.0" height="6.5" fill="#878787"/>
<rect x="149.1" y="77.0" width="7.0" height="6.5" fill="#979797"/>
<rect x="149.1" y="70.8" width="7.0" height="6.5" fill="#969696"/>
<rect x="149.1" y="64.6" width="7.0" height="6.5" fill="#949494"/>
<rect x="149.1" y="58.4" width="7.0" height="6.5" fill="#939393"/>
<rect x="149.1" y="52.2" width="7.0" height="6.5" fill="#929292"/>
<rect x="149.1" y="46.0" width="7.0" height="6.5" fill="#919191"/>
<rect x="149.1" y="39.8" width="7.0" height="6.5" fill="#919191"/>
<rect x="149.1" y="33.6" width="7.0" height="6.5" fill="#8f8f8f"/>
<rect x="149.1" y="27.4" width="7.0" height="6.5" fill="#8c8c8c"/>
<rect x="149.1" y="21.2" width="7.0" height="6.5" fill="#8a8a8a"/>
<rect x="155.8" y="77.0" width="7.0" height="6.5" fill="#9b9b9b"/>
<rect x="155.8" y="70.8" width="7.0" height="6.5" fill="#999999"/>
<rect x="155.8" y="64.6" width="7.0" height="6.5" fill="#989898"/>
<rect x="155.8" y="58.4" width="7.0" height="6.5" fill="#969696"/>
<rect x="155.8" y="52.2" width="7.0" height="6.5" fill="#959595"/>
<rect x="155.8" y="46.0" width="7.0" height="6.5" fill="#959595"/>
<rect x="155.8" y="39.8" width="7.0" height="6.5" fill="#949494"/>
<rect x="155.8" y="33.6" width="7.0" height="6.5" fill="#929292"/>
<rect x="155.8" y="27.4" width="7.0" height="6.5" fill="#909090"/>
<rect x="155.8" y="21.2" width="7.0" height="6.5" fill="#8e8e8e"/>
<rect x="162.6" y="77.0" width="7.0" height="6.5" fill="#a1a1a1"/>
<rect x="162.6" y="70.8" width="7.0" height="6.5" fill="#a0a0a0"/>
<rect x="162.6" y="64.6" width="7.0" height="6.5" fill="#9f9f9f"/>
<rect x="162.6" y="58.4" width="7.0" height="6.5" fill="#9d9d9d"/>
<rect x="162.6" y="52.2" width="7.0" height="6.5" fill="#9d9d9d"/>
<rect x="162.6" y="46.0" width="7.0" height="6.5" fill="#9c9c9c"/>
<rect x="162.6" y="39.8" width="7.0" height="6.5" fill="#9b9b9b"/>
<rect x="162.6" y="33.6" width="7.0" height="6.5" fill="#999999"/>
<rect x="162.6" y="27.4" width="7.0" height="6.5" fill="#979797"/>
<rect x="162.6" y="21.2" width="7.0" height="6.5" fill="#959595"/>
<rect x="169.4" y="77.0" width="7.0" height="6.5" fill="#adadad"/>
<rect x="169.4" y="70.8" width="7.0" height="6.5" fill="#acacac"/>
<rect x="169.4" y="64.6" width="7.0" height="6.5" fill="#ababab"/>
<rect x="169.4" y="58.4" width="7.0" height="6.5" fill="#aaaaaa"/>
<rect x="169.4" y="52.2" width="7.0" height="6.5" fill="#a8a8a8"/>
<rect x="169.4" y="46.0" width="7.0" height="6.5" fill="#a7a7a7"/>
<rect x="169.4" y="39.8" width="7.0" height="6.5" fill="#a6a6a6"/>
<rect x="169.4" y="33.6" width="7.0" height="6.5" fill="#a4a4a4"/>
<rect x="169.4" y="27.4" width="7.0" height="6.5" fill="#a3a3a3"/>
<rect x="169.4" y="21.2" width="7.0" height="6.5" fill="#a1a1a1"/>
<rect x="176.1" y="77.0" width="7.0" height="6.5" fill="#b5b5b5"/>
<rect x="176.1" y="70.8" width="7.0" height="6.5" fill="#b4b4b4"/>
<rect x="176.1" y="64.6" width="7.0" height="6.5" fill="#b4b4b4"/>
<rect x="176.1" y="58.4" width="7.0" height="6.5" fill="#b3b3b3"/>
<rect x="176.1" y="52.2" width="7.0" height="6.5" fill="#b1b1b1"/>
<rect x="176.1" y="46.0" width="7.0" height="6.5" fill="#b0b0b0"/>
<rect x="176.1" y="39.8" width="7.0" height="6.5" fill="#aeaeae"/>
<rect x="176.1" y="33.6" width="7.0" height="6.5" fill="#adadad"/>
<rect x="176.1" y="27.4" width="7.0" height="6.5" fill="#ababab"/>
<rect x="176.1" y="21.2" width="7.0" height="6.5" fill="#aaaaaa"/>
<rect x="181.2" y="77.0" width="1.9" height="6.5" fill="#eeeeee"/>
<rect x="181.2" y="70.8" width="1.9" height="6.5" fill="#ededed"/>
<rect x="181.2" y="64.6" width="1.9" height="6.5" fill="#ececec"/>
<rect x="181.2" y="58.4" width="1.9" height="6.5" fill="#ebebeb"/>
<rect x="181.2" y="52.2" width="1.9" height="6.5" fill="#eaeaea"/>
<rect x="181.2" y="46.0" width="1.9" height="6.5" fill="#e9e9e9"/>
<rect x="181.2" y="39.8" width="1.9" height="6.5" fill="#e7e7e7"/>
<rect x="181.2" y="33.6" width="1.9" height="6.5" fill="#e6e6e6"/>
<rect x="181.2" y="27.4" width="1.9" height="6.5" fill="#e4e4e4"/>
<rect x="181.2" y="21.2" width="1.9" height="6.5" fill="#e3e3e3"/>
<rect x="95.0" y="81.6" width="7.0" height="1.8" fill="#818181"/>
<rect x="101.8" y="81.6" width="7.0" height="1.8" fill="#848484"/>
<rect x="108.5" y="81.6" width="7.0" height="1.8" fill="#878787"/>
<rect x="115.3" y="81.6" width="7.0" height="1.8" fill="#8a8a8a"/>
<rect x="122.0" y="81.6" width="7.0" height="1.8" fill="#8d8d8d"/>
<rect x="128.8" y="81.6" width="7.0" height="1.8" fill="#919191"/>
<rect x="135.6" y="81.6" width="7.0" height="1.8" fill="#949494"/>
<rect x="142.3" y="81.6" width="7.0" height="1.8" fill="#989898"/>
<rect x="149.1" y="81.6" width="7.0" height="1.8" fill="#9c9c9c"/>
<rect x="155.8" y="81.6" width="7.0" height="1.8" fill="#a0a0a0"/>
<rect x="162.6" y="81.6" width="7.0" height="1.8" fill="#a8a8a8"/>
<rect x="169.4" y="81.6" width="7.0" height="1.8" fill="#b3b3b3"/>
<rect x="176.1" y="81.6" width="7.0" height="1.8" fill="#bbbbbb"/>
<rect x="182.9" y="139.0" width="7.0" height="6.5" fill="#808080"/>
<rect x="182.9" y="132.8" width="7.0" height="6.5" fill="#808080"/>
<rect x="182.9" y="126.6" width="7.0" height="6.5" fill="#808080"/>
<rect x="182.9" y="120.4" width="7.0" height="6.5" fill="#808080"/>
<rect x="182.9" y="114.2" width="7.0" height="6.5" fill="#818181"/>
<rect x="182.9" y="108.0" width="7.0" height="6.5" fill="#818181"/>
<rect x="182.9" y="101.8" width="7.0" height="6.5" fill="#828282"/>
<rect x="182.9" y="95.6" width="7.0" height="6.5" fill="#838383"/>
<rect x="182.9" y="89.4" width="7.0" height="6.5" fill="#848484"/>
<rect x="182.9" y="83.2" width="7.0" height="6.5" fill="#858585"/>
<rect x="189.6" y="139.0" width="7.0" height="6.5" fill="#7a7a7a"/>
<rect x="189.6" y="132.8" width="7.0" height="6.5" fill="#7a7a7a"/>
<rect x="189.6" y="126.6" width="7.0" height="6.5" fill="#7a7a7a"/>
<rect x="189.6" y="120.4" width="7.0" height="6.5" fill="#7a7a7a"/>
<rect x="189.6" y="114.2" width="7.0" height="6.5" fill="#7b7b7b"/>
<rect x="189.6" y="108.0" width="7.0" height="6.5" fill="#7b7b7b"/>
<rect x="189.6" y="101.8" width="7.0" height="6.5" fill="#7c7c7c"/>
<rect x="189.6" y="95.6" width="7.0" height="6.5" fill="#7d7d7d"/>
<rect x="189.6" y="89.4" width="7.0" height="6.5" fill="#7e7e7e"/>
<rect x="189.6" y="83.2" width="7.0" height="6.5" fill="#7f7f7f"/>
<rect x="196.4" y="139.0" width="7.0" height="6.5" fill="#747474"/>
<rect x="196.4" y="132.8" width="7.0" height="6.5" fill="#747474"/>
<rect x="196.4" y="126.6" width="7.0" height="6.5" fill="#747474"/>
<rect x="196.4" y="120.4" width="7.0" height="6.5" fill="#747474"/>
<rect x="196.4" y="114.2" width="7.0" height="6.5" fill="#747474"/>
<rect x="196.4" y="108.0" width="7.0" height="6.5" fill="#757575"/>
<rect x="196.4" y="101.8" width="7.0" height="6.5" fill="#767676"/>
<rect x="196.4" y="95.6" width="7.0" height="6.5" fill="#777777"/>
<rect x="196.4" y="89.4" width="7.0" height="6.5" fill="#787878"/>
<rect x="196.4" y="83.2" width="7.0" height="6.5" fill="#7a7a7a"/>
<rect x="203.2" y="139.0" width="7.0" height="6.5" fill="#6c6c6c"/>
<rect x="203.2" y="132.8" width="7.0" height="6.5" fill="#6c6c6c"/>
<rect x="203.2" y="126.6" width="7.0" height="6.5" fill="#6c6c6c"/>
<rect x="203.2" y="120.4" width="7.0" height="6.5" fill="#6d6d6d"/>
<rect x="203.2" y="114.2" width="7.0" height="6.5" fill="#6d6d6d"/>
<rect x="203.2" y="108.0" width="7.0" height="6.5" fill="#6e6e6e"/>
<rect x="203.2" y="101.8" width="7.0" height="6.5" fill="#6f6f6f"/>
<rect x="203.2" y="95.6" width="7.0" height="6.5" fill="#707070"/>
<rect x="203.2" y="89.4" width="7.0" height="6.5" fill="#727272"/>
<rect x="203.2" y="83.2" width="7.0" height="6.5" fill="#747474"/>
<rect x="209.9" y="139.0" width="7.0" height="6.5" fill="#616161"/>
<rect x="209.9" y="132.8" width="7.0" height="6.5" fill="#616161"/>
<rect x="209.9" y="126.6" width="7.0" height="6.5" fill="#616161"/>
<rect x="209.9" y="120.4" width="7.0" height="6.5" fill="#616161"/>
<rect x="209.9" y="114.2" width="7.0" height="6.5" fill="#626262"/>
<rect x="209.9" y="108.0" width="7.0" height="6.5" fill="#636363"/>
<rect x="209.9" y="101.8" width="7.0" height="6.5" fill="#646464"/>
<rect x="209.9" y="95.6" width="7.0" height="6.5" fill="#666666"/>
<rect x="209.9" y="89.4" width="7.0" height="6.5" fill="#686868"/>
<rect x="209.9" y="83.2" width="7.0" height="6.5" fill="#6b6b6b"/>
<rect x="216.7" y="139.0" width="7.0" height="6.5" fill="#555555"/>
<rect x="216.7" y="132.8" width="7.0" height="6.5" fill="#555555"/>
<rect x="216.7" y="126.6" width="7.0" height="6.5" fill="#555555"/>
<rect x="216.7" y="120.4" width="7.0" height="6.5" fill="#555555"/>
<rect x="216.7" y="114.2" width="7.0" height="6.5" fill="#575757"/>
<rect x="216.7" y="108.0" width="7.0" height="6.5" fill="#585858"/>
<rect x="216.7" y="101.8" width="7.0" height="6.5" fill="#595959"/>
<rect x="216.7" y="95.6" width="7.0" height="6.5" fill="#5c5c5c"/>
<rect x="216.7" y="89.4" width="7.0" height="6.5" fill="#5f5f5f"/>
<rect x="216.7" y="83.2" width="7.0" height="6.5" fill="#626262"/>
<rect x="223.4" y="139.0" width="7.0" height="6.5" fill="#4a4a4a"/>
<rect x="223.4" y="132.8" width="7.0" height="6.5" fill="#4a4a4a"/>
<rect x="223.4" y="126.6" width="7.0" height="6.5" fill="#4a4a4a"/>
<rect x="223.4" y="120.4" width="7.0" height="6.5" fill="#4a4a4a"/>
<rect x="223.4" y="114.2" width="7.0" height="6.5" fill="#4b4b4b"/>
<rect x="223.4" y="108.0" width="7.0" height="6.5" fill="#4d4d4d"/>
<rect x="223.4" y="101.8" width="7.0" height="6.5" fill="#4e4e4e"/>
<rect x="223.4" y="95.6" width="7.0" height="6.5" fill="#525252"/>
<rect x="223.4" y="89.4" width="7.0" height="6.5" fill="#555555"/>
<rect x="223.4" y="83.2" width="7.0" height="6.5" fill="#595959"/>
<rect x="230.2" y="139.0" width="7.0" height="6.5" fill="#454545"/>
<rect x="230.2" y="132.8" width="7.0" height="6.5" fill="#454545"/>
<rect x="230.2" y="126.6" width="7.0" height="6.5" fill="#454545"/>
<rect x="230.2" y="120.4" width="7.0" height="6.5" fill="#454545"/>
<rect x="230.2" y="114.2" width="7.0" height="6.5" fill="#474747"/>
<rect x="230.2" y="108.0" width="7.0" height="6.5" fill="#494949"/>
<rect x="230.2" y="101.8" width="7.0" height="6.5" fill="#4a4a4a"/>
<rect x="230.2" y="95.6" width="7.0" height="6.5" fill="#4e4e4e"/>
<rect x="230.2" y="89.4" width="7.0" height="6.5" fill="#525252"/>
<rect x="230.2" y="83.2" width="7.0" height="6.5" fill="#565656"/>
<rect x="237.0" y="139.0" width="7.0" height="6.5" fill="#404040"/>
<rect x="237.0" y="132.8" width="7.0" height="6.5" fill="#404040"/>
<rect x="237.0" y="126.6" width="7.0" height="6.5" fill="#404040"/>
<rect x="237.0" y="120.4" width="7.0" height="6.5" fill="#414141"/>
<rect x="237.0" y="114.2" width="7.0" height="6.5" fill="#434343"/>
<rect x="237.0" y="108.0" width="7.0" height="6.5" fill="#454545"/>
<rect x="237.0" y="101.8" width="7.0" height="6.5" fill="#474747"/>
<rect x="237.0" y="95.6" width="7.0" height="6.5" fill="#4a4a4a"/>
<rect x="237.0" y="89.4" width="7.0" height="6.5" fill="#4f4f4f"/>
<rect x="237.0" y="83.2" width="7.0" height="6.5" fill="#535353"/>
<rect x="243.7" y="139.0" width="7.0" height="6.5" fill="#3c3c3c"/>
<rect x="243.7" y="132.8" width="7.0" height="6.5" fill="#3c3c3c"/>
<rect x="243.7" y="126.6" width="7.0" height="6.5" fill="#3c3c3c"/>
<rect x="243.7" y="120.4" width="7.0" height="6.5" fill="#3c3c3c"/>
<rect x="243.7" y="114.2" width="7.0" height="6.5" fill="#3e3e3e"/>
<rect x="243.7" y="108.0" width="7.0" height="6.5" fill="#414141"/>
<rect x="243.7" y="101.8" width="7.0" height="6.5" fill="#434343"/>
<rect x="243.7" y="95.6" width="7.0" height="6.5" fill="#474747"/>
<rect x="243.7" y="89.4" width="7.0" height="6.5" fill="#4b4b4b"/>
<rect x="243.7" y="83.2" width="7.0" height="6.5" fill="#505050"/>
<rect x="250.5" y="139.0" width="7.0" height="6.5" fill="#414141"/>
<rect x="250.5" y="132.8" width="7.0" height="6.5" fill="#404040"/>
<rect x="250.5" y="126.6" width="7.0" height="6.5" fill="#404040"/>
<rect x="250.5" y="120.4" width="7.0" height="6.5" fill="#404040"/>
<rect x="250.5" y="114.2" width="7.0" height="6.5" fill="#424242"/>
<rect x="250.5" y="108.0" width="7.0" height="6.5" fill="#444444"/>
<rect x="250.5" y="101.8" width="7.0" height="6.5" fill="#464646"/>
<rect x="250.5" y="95.6" width="7.0" height="6.5" fill="#4a4a4a"/>
<rect x="250.5" y="89.4" width="7.0" height="6.5" fill="#4e4e4e"/>
<rect x="250.5" y="83.2" width="7.0" height="6.5" fill="#515151"/>
<rect x="257.2" y="139.0" width="7.0" height="6.5" fill="#474747"/>
<rect x="257.2" y="132.8" width="7.0" height="6.5" fill="#474747"/>
<rect x="257.2" y="126.6" width="7.0" height="6.5" fill="#464646"/>
<rect x="257.2" y="120.4" width="7.0" height="6.5" fill="#464646"/>
<rect x="257.2" y="114.2" width="7.0" height="6.5" fill="#484848"/>
<rect x="257.2" y="108.0" width="7.0" height="6.5" fill="#4a4a4a"/>
<rect x="257.2" y="101.8" width="7.0" height="6.5" fill="#4c4c4c"/>
<rect x="257.2" y="95.6" width="7.0" height="6.5" fill="#4e4e4e"/>
<rect x="257.2" y="89.4" width="7.0" height="6.5" fill="#515151"/>
<rect x="257.2" y="83.2" width="7.0" height="6.5" fill="#545454"/>
<rect x="264.0" y="139.0" width="7.0" height="6.5" fill="#4e4e4e"/>
<rect x="264.0" y="132.8" width="7.0" height="6.5" fill="#4e4e4e"/>
<rect x="264.0" y="126.6" width="7.0" height="6.5" fill="#4d4d4d"/>
<rect x="264.0" y="120.4" width="7.0" height="6.5" fill="#4d4d4d"/>
<rect x="264.0" y="114.2" width="7.0" height="6.5" fill="#4e4e4e"/>
<rect x="264.0" y="108.0" width="7.0" height="6.5" fill="#505050"/>
<rect x="264.0" y="101.8" width="7.0" height="6.5" fill="#515151"/>
<rect x="264.0" y="95.6" width="7.0" height="6.5" fill="#535353"/>
<rect x="264.0" y="89.4" width="7.0" height="6.5" fill="#555555"/>
<rect x="264.0" y="83.2" width="7.0" height="6.5" fill="#575757"/>
<rect x="182.9" y="139.0" width="1.9" height="6.5" fill="#a0a0a0"/>
<rect x="182.9" y="132.8" width="1.9" height="6.5" fill="#a0a0a0"/>
<rect x="182.9" y="126.6" width="1.9" height="6.5" fill="#a0a0a0"/>
<rect x="182.9" y="120.4" width="1.9" height="6.5" fill="#a0a0a0"/>
<rect x="182.9" y="114.2" width="1.9" height="6.5" fill="#a1a1a1"/>
<rect x="182.9" y="108.0" width="1.9" height="6.5" fill="#a1a1a1"/>
<rect x="182.9" y="101.8" width="1.9" height="6.5" fill="#a2a2a2"/>
<rect x="182.9" y="95.6" width="1.9" height="6.5" fill="#a3a3a3"/>
<rect x="182.9" y="89.4" width="1.9" height="6.5" fill="#a4a4a4"/>
<rect x="182.9" y="83.2" width="1.9" height="6.5" fill="#a4a4a4"/>
<rect x="182.9" y="77.0" width="7.0" height="6.5" fill="#585858"/>
<rect x="182.9" y="70.8" width="7.0" height="6.5" fill="#555555"/>
<rect x="182.9" y="64.6" width="7.0" height="6.5" fill="#515151"/>
<rect x="182.9" y="58.4" width="7.0" height="6.5" fill="#4f4f4f"/>
<rect x="182.9" y="52.2" width="7.0" height="6.5" fill="#4d4d4d"/>
<rect x="182.9" y="46.0" width="7.0" height="6.5" fill="#4c4c4c"/>
<rect x="182.9" y="39.8" width="7.0" height="6.5" fill="#4a4a4a"/>
<rect x="182.9" y="33.6" width="7.0" height="6.5" fill="#494949"/>
<rect x="182.9" y="27.4" width="7.0" height="6.5" fill="#484848"/>
<rect x="182.9" y="21.2" width="7.0" height="6.5" fill="#484848"/>
<rect x="189.6" y="77.0" width="7.0" height="6.5" fill="#595959"/>
<rect x="189.6" y="70.8" width="7.0" height="6.5" fill="#565656"/>
<rect x="189.6" y="64.6" width="7.0" height="6.5" fill="#525252"/>
<rect x="189.6" y="58.4" width="7.0" height="6.5" fill="#4f4f4f"/>
<rect x="189.6" y="52.2" width="7.0" height="6.5" fill="#4e4e4e"/>
<rect x="189.6" y="46.0" width="7.0" height="6.5" fill="#4c4c4c"/>
<rect x="189.6" y="39.8" width="7.0" height="6.5" fill="#4a4a4a"/>
<rect x="189.6" y="33.6" width="7.0" height="6.5" fill="#494949"/>
<rect x="189.6" y="27.4" width="7.0" height="6.5" fill="#484848"/>
<rect x="189.6" y="21.2" width="7.0" height="6.5" fill="#484848"/>
<rect x="196.4" y="77.0" width="7.0" height="6.5" fill="#5b5b5b"/>
<rect x="196.4" y="70.8" width="7.0" height="6.5" fill="#575757"/>
<rect x="196.4" y="64.6" width="7.0" height="6.5" fill="#535353"/>
<rect x="196.4" y="58.4" width="7.0" height="6.5" fill="#505050"/>
<rect x="196.4" y="52.2" width="7.0" height="6.5" fill="#4e4e4e"/>
<rect x="196.4" y="46.0" width="7.0" height="6.5" fill="#4c4c4c"/>
<rect x="196.4" y="39.8" width="7.0" height="6.5" fill="#4a4a4a"/>
<rect x="196.4" y="33.6" width="7.0" height="6.5" fill="#494949"/>
<rect x="196.4" y="27.4" width="7.0" height="6.5" fill="#484848"/>
<rect x="196.4" y="21.2" width="7.0" height="6.5" fill="#484848"/>
<rect x="203.2" y="77.0" width="7.0" height="6.5" fill="#5c5c5c"/>
<rect x="203.2" y="70.8" width="7.0" height="6.5" fill="#585858"/>
<rect x="203.2" y="64.6" width="7.0" height="6.5" fill="#555555"/>
<rect x="203.2" y="58.4" width="7.0" height="6.5" fill="#515151"/>
<rect x="203.2" y="52.2" width="7.0" height="6.5" fill="#4f4f4f"/>
<rect x="203.2" y="46.0" width="7.0" height="6.5" fill="#4d4d4d"/>
<rect x="203.2" y="39.8" width="7.0" height="6.5" fill="#4b4b4b"/>
<rect x="203.2" y="33.6" width="7.0" height="6.5" fill="#4a4a4a"/>
<rect x="203.2" y="27.4" width="7.0" height="6.5" fill="#494949"/>
<rect x="203.2" y="21.2" width="7.0" height="6.5" fill="#484848"/>
<rect x="209.9" y="77.0" width="7.0" height="6.5" fill="#5e5e5e"/>
<rect x="209.9" y="70.8" width="7.0" height="6.5" fill="#5b5b5b"/>
<rect x="209.9" y="64.6" width="7.0" height="6.5" fill="#575757"/>
<rect x="209.9" y="58.4" width="7.0" height="6.5" fill="#535353"/>
<rect x="209.9" y="52.2" width="7.0" height="6.5" fill="#515151"/>
<rect x="209.9" y="46.0" width="7.0" height="6.5" fill="#4f4f4f"/>
<rect x="209.9" y="39.8" width="7.0" height="6.5" fill="#4d4d4d"/>
<rect x="209.9" y="33.6" width="7.0" height="6.5" fill="#4c4c4c"/>
<rect x="209.9" y="27.4" width="7.0" height="6.5" fill="#4b4b4b"/>
<rect x="209.9" y="21.2" width="7.0" height="6.5" fill="#4a4a4a"/>
<rect x="216.7" y="77.0" width="7.0" height="6.5" fill="#616161"/>
<rect x="216.7" y="70.8" width="7.0" height="6.5" fill="#5d5d5d"/>
<rect x="216.7" y="64.6" width="7.0" height="6.5" fill="#595959"/>
<rect x="216.7" y="58.4" width="7.0" height="6.5" fill="#565656"/>
<rect x="216.7" y="52.2" width="7.0" height="6.5" fill="#545454"/>
<rect x="216.7" y="46.0" width="7.0" height="6.5" fill="#515151"/>
<rect x="216.7" y="39.8" width="7.0" height="6.5" fill="#4f4f4f"/>
<rect x="216.7" y="33.6" width="7.0" height="6.5" fill="#4e4e4e"/>
<rect x="216.7" y="27.4" width="7.0" height="6.5" fill="#4d4d4d"/>
<rect x="216.7" y="21.2" width="7.0" height="6.5" fill="#4d4d4d"/>
<rect x="223.4" y="77.0" width="7.0" height="6.5" fill="#636363"/>
<rect x="223.4" y="70.8" width="7.0" height="6.5" fill="#5f5f5f"/>
<rect x="223.4" y="64.6" width="7.0" height="6.5" fill="#5c5c5c"/>
<rect x="223.4" y="58.4" width="7.0" height="6.5" fill="#585858"/>
<rect x="223.4" y="52.2" width="7.0" height="6.5" fill="#565656"/>
<rect x="223.4" y="46.0" width="7.0" height="6.5" fill="#545454"/>
<rect x="223.4" y="39.8" width="7.0" height="6.5" fill="#515151"/>
<rect x="223.4" y="33.6" width="7.0" height="6.5" fill="#505050"/>
<rect x="223.4" y="27.4" width="7.0" height="6.5" fill="#505050"/>
<rect x="223.4" y="21.2" width="7.0" height="6.5" fill="#4f4f4f"/>
<rect x="230.2" y="77.0" width="7.0" height="6.5" fill="#666666"/>
<rect x="230.2" y="70.8" width="7.0" height="6.5" fill="#636363"/>
<rect x="230.2" y="64.6" width="7.0" height="6.5" fill="#606060"/>
<rect x="230.2" y="58.4" width="7.0" height="6.5" fill="#5d5d5d"/>
<rect x="230.2" y="52.2" width="7.0" height="6.5" fill="#5b5b5b"/>
<rect x="230.2" y="46.0" width="7.0" height="6.5" fill="#595959"/>
<rect x="230.2" y="39.8" width="7.0" height="6.5" fill="#575757"/>
<rect x="230.2" y="33.6" width="7.0" height="6.5" fill="#565656"/>
<rect x="230.2" y="27.4" width="7.0" height="6.5" fill="#555555"/>
<rect x="230.2" y="21.2" width="7.0" height="6.5" fill="#545454"/>
<rect x="237.0" y="77.0" width="7.0" height="6.5" fill="#6a6a6a"/>
<rect x="237.0" y="70.8" width="7.0" height="6.5" fill="#676767"/>
<rect x="237.0" y="64.6" width="7.0" height="6.5" fill="#646464"/>
<rect x="237.0" y="58.4" width="7.0" height="6.5" fill="#616161"/>
<rect x="237.0" y="52.2" width="7.0" height="6.5" fill="#606060"/>
<rect x="237.0" y="46.0" width="7.0" height="6.5" fill="#5e5e5e"/>
<rect x="237.0" y="39.8" width="7.0" height="6.5" fill="#5c5c5c"/>
<rect x="237.0" y="33.6" width="7.0" height="6.5" fill="#5b5b5b"/>
<rect x="237.0" y="27.4" width="7.0" height="6.5" fill="#5a5a5a"/>
<rect x="237.0" y="21.2" width="7.0" height="6.5" fill="#5a5a5a"/>
<rect x="243.7" y="77.0" width="7.0" height="6.5" fill="#6d6d6d"/>
<rect x="243.7" y="70.8" width="7.0" height="6.5" fill="#6b6b6b"/>
<rect x="243.7" y="64.6" width="7.0" height="6.5" fill="#686868"/>
<rect x="243.7" y="58.4" width="7.0" height="6.5" fill="#666666"/>
<rect x="243.7" y="52.2" width="7.0" height="6.5" fill="#656565"/>
<rect x="243.7" y="46.0" width="7.0" height="6.5" fill="#636363"/>
<rect x="243.7" y="39.8" width="7.0" height="6.5" fill="#626262"/>
<rect x="243.7" y="33.6" width="7.0" height="6.5" fill="#616161"/>
<rect x="243.7" y="27.4" width="7.0" height="6.5" fill="#606060"/>
<rect x="243.7" y="21.2" width="7.0" height="6.5" fill="#5f5f5f"/>
<rect x="250.5" y="77.0" width="7.0" height="6.5" fill="#717171"/>
<rect x="250.5" y="70.8" width="7.0" height="6.5" fill="#6f6f6f"/>
<rect x="250.5" y="64.6" width="7.0" height="6.5" fill="#6d6d6d"/>
<rect x="250.5" y="58.4" width="7.0" height="6.5" fill="#6b6b6b"/>
<rect x="250.5" y="52.2" width="7.0" height="6.5" fill="#696969"/>
<rect x="250.5" y="46.0" width="7.0" height="6.5" fill="#686868"/>
<rect x="250.5" y="39.8" width="7.0" height="6.5" fill="#676767"/>
<rect x="250.5" y="33.6" width="7.0" height="6.5" fill="#666666"/>
<rect x="250.5" y="27.4" width="7.0" height="6.5" fill="#656565"/>
<rect x="250.5" y="21.2" width="7.0" height="6.5" fill="#656565"/>
<rect x="257.2" y="77.0" width="7.0" height="6.5" fill="#757575"/>
<rect x="257.2" y="70.8" width="7.0" height="6.5" fill="#737373"/>
<rect x="257.2" y="64.6" width="7.0" height="6.5" fill="#717171"/>
<rect x="257.2" y="58.4" width="7.0" height="6.5" fill="#6f6f6f"/>
<rect x="257.2" y="52.2" width="7.0" height="6.5" fill="#6e6e6e"/>
<rect x="257.2" y="46.0" width="7.0" height="6.5" fill="#6d6d6d"/>
<rect x="257.2" y="39.8" width="7.0" height="6.5" fill="#6c6c6c"/>
<rect x="257.2" y="33.6" width="7.0" height="6.5" fill="#6b6b6b"/>
<rect x="257.2" y="27.4" width="7.0" height="6.5" fill="#6b6b6b"/>
<rect x="257.2" y="21.2" width="7.0" height="6.5" fill="#6a6a6a"/>
<rect x="264.0" y="77.0" width="7.0" height="6.5" fill="#797979"/>
<rect x="264.0" y="70.8" width="7.0" height="6.5" fill="#777777"/>
<rect x="264.0" y="64.6" width="7.0" height="6.5" fill="#757575"/>
<rect x="264.0" y="58.4" width="7.0" height="6.5" fill="#747474"/>
<rect x="264.0" y="52.2" width="7.0" height="6.5" fill="#737373"/>
<rect x="264.0" y="46.0" width="7.0" height="6.5" fill="#727272"/>
<rect x="264.0" y="39.8" width="7.0" height="6.5" fill="#727272"/>
<rect x="264.0" y="33.6" width="7.0" height="6.5" fill="#717171"/>
<rect x="264.0" y="27.4" width="7.0" height="6.5" fill="#707070"/>
<rect x="264.0" y="21.2" width="7.0" height="6.5" fill="#6f6f6f"/>
<rect x="269.1" y="77.0" width="1.9" height="6.5" fill="#898989"/>
<rect x="269.1" y="70.8" width="1.9" height="6.5" fill="#878787"/>
<rect x="269.1" y="64.6" width="1.9" height="6.5" fill="#868686"/>
<rect x="269.1" y="58.4" width="1.9" height="6.5" fill="#848484"/>
<rect x="269.1" y="52.2" width="1.9" height="6.5" fill="#848484"/>
<rect x="269.1" y="46.0" width="1.9" height="6.5" fill="#838383"/>
<rect x="269.1" y="39.8" width="1.9" height="6.5" fill="#828282"/>
<rect x="269.1" y="33.6" width="1.9" height="6.5" fill="#828282"/>
<rect x="269.1" y="27.4" width="1.9" height="6.5" fill="#818181"/>
<rect x="269.1" y="21.2" width="1.9" height="6.5" fill="#808080"/>
<rect x="182.9" y="81.6" width="7.0" height="1.8" fill="#5e5e5e"/>
<rect x="189.6" y="81.6" width="7.0" height="1.8" fill="#5f5f5f"/>
<rect x="196.4" y="81.6" width="7.0" height="1.8" fill="#616161"/>
<rect x="203.2" y="81.6" width="7.0" height="1.8" fill="#626262"/>
<rect x="209.9" y="81.6" width="7.0" height="1.8" fill="#646464"/>
<rect x="216.7" y="81.6" width="7.0" height="1.8" fill="#666666"/>
<rect x="223.4" y="81.6" width="7.0" height="1.8" fill="#686868"/>
<rect x="230.2" y="81.6" width="7.0" height="1.8" fill="#6b6b6b"/>
<rect x="237.0" y="81.6" width="7.0" height="1.8" fill="#6f6f6f"/>
<rect x="243.7" y="81.6" width="7.0" height="1.8" fill="#727272"/>
<rect x="250.5" y="81.6" width="7.0" height="1.8" fill="#767676"/>
<rect x="257.2" y="81.6" width="7.0" height="1.8" fill="#7b7b7b"/>
<rect x="264.0" y="81.6" width="7.0" height="1.8" fill="#7f7f7f"/>
<rect x="270.8" y="139.0" width="7.0" height="6.5" fill="#747474"/>
<rect x="270.8" y="132.8" width="7.0" height="6.5" fill="#757575"/>
<rect x="270.8" y="126.6" width="7.0" height="6.5" fill="#757575"/>
<rect x="270.8" y="120.4" width="7.0" height="6.5" fill="#767676"/>
<rect x="270.8" y="114.2" width="7.0" height="6.5" fill="#767676"/>
<rect x="270.8" y="108.0" width="7.0" height="6.5" fill="#767676"/>
<rect x="270.8" y="101.8" width="7.0" height="6.5" fill="#767676"/>
<rect x="270.8" y="95.6" width="7.0" height="6.5" fill="#777777"/>
<rect x="270.8" y="89.4" width="7.0" height="6.5" fill="#777777"/>
<rect x="270.8" y="83.2" width="7.0" height="6.5" fill="#787878"/>
<rect x="277.5" y="139.0" width="7.0" height="6.5" fill="#6e6e6e"/>
<rect x="277.5" y="132.8" width="7.0" height="6.5" fill="#6e6e6e"/>
<rect x="277.5" y="126.6" width="7.0" height="6.5" fill="#6e6e6e"/>
<rect x="277.5" y="120.4" width="7.0" height="6.5" fill="#6f6f6f"/>
<rect x="277.5" y="114.2" width="7.0" height="6.5" fill="#6f6f6f"/>
<rect x="277.5" y="108.0" width="7.0" height="6.5" fill="#707070"/>
<rect x="277.5" y="101.8" width="7.0" height="6.5" fill="#707070"/>
<rect x="277.5" y="95.6" width="7.0" height="6.5" fill="#717171"/>
<rect x="277.5" y="89.4" width="7.0" height="6.5" fill="#717171"/>
<rect x="277.5" y="83.2" width="7.0" height="6.5" fill="#727272"/>
<rect x="284.3" y="139.0" width="7.0" height="6.5" fill="#676767"/>
<rect x="284.3" y="132.8" width="7.0" height="6.5" fill="#686868"/>
<rect x="284.3" y="126.6" width="7.0" height="6.5" fill="#686868"/>
<rect x="284.3" y="120.4" width="7.0" height="6.5" fill="#686868"/>
<rect x="284.3" y="114.2" width="7.0" height="6.5" fill="#696969"/>
<rect x="284.3" y="108.0" width="7.0" height="6.5" fill="#696969"/>
<rect x="284.3" y="101.8" width="7.0" height="6.5" fill="#6a6a6a"/>
<rect x="284.3" y="95.6" width="7.0" height="6.5" fill="#6a6a6a"/>
<rect x="284.3" y="89.4" width="7.0" height="6.5" fill="#6b6b6b"/>
<rect x="284.3" y="83.2" width="7.0" height="6.5" fill="#6c6c6c"/>
<rect x="291.0" y="139.0" width="7.0" height="6.5" fill="#616161"/>
<rect x="291.0" y="132.8" width="7.0" height="6.5" fill="#616161"/>
<rect x="291.0" y="126.6" width="7.0" height="6.5" fill="#616161"/>
<rect x="291.0" y="120.4" width="7.0" height="6.5" fill="#616161"/>
<rect x="291.0" y="114.2" width="7.0" height="6.5" fill="#626262"/>
<rect x="291.0" y="108.0" width="7.0" height="6.5" fill="#636363"/>
<rect x="291.0" y="101.8" width="7.0" height="6.5" fill="#646464"/>
<rect x="291.0" y="95.6" width="7.0" height="6.5" fill="#646464"/>
<rect x="291.0" y="89.4" width="7.0" height="6.5" fill="#656565"/>
<rect x="291.0" y="83.2" width="7.0" height="6.5" fill="#666666"/>
<rect x="297.8" y="139.0" width="7.0" height="6.5" fill="#5b5b5b"/>
<rect x="297.8" y="132.8" width="7.0" height="6.5" fill="#5b5b5b"/>
<rect x="297.8" y="126.6" width="7.0" height="6.5" fill="#5b5b5b"/>
<rect x="297.8" y="120.4" width="7.0" height="6.5" fill="#5b5b5b"/>
<rect x="297.8" y="114.2" width="7.0" height="6.5" fill="#5c5c5c"/>
<rect x="297.8" y="108.0" width="7.0" height="6.5" fill="#5d5d5d"/>
<rect x="297.8" y="101.8" width="7.0" height="6.5" fill="#5e5e5e"/>
<rect x="297.8" y="95.6" width="7.0" height="6.5" fill="#606060"/>
<rect x="297.8" y="89.4" width="7.0" height="6.5" fill="#616161"/>
<rect x="297.8" y="83.2" width="7.0" height="6.5" fill="#636363"/>
<rect x="304.5" y="139.0" width="7.0" height="6.5" fill="#555555"/>
<rect x="304.5" y="132.8" width="7.0" height="6.5" fill="#555555"/>
<rect x="304.5" y="126.6" width="7.0" height="6.5" fill="#555555"/>
<rect x="304.5" y="120.4" width="7.0" height="6.5" fill="#555555"/>
<rect x="304.5" y="114.2" width="7.0" height="6.5" fill="#565656"/>
<rect x="304.5" y="108.0" width="7.0" height="6.5" fill="#575757"/>
<rect x="304.5" y="101.8" width="7.0" height="6.5" fill="#595959"/>
<rect x="304.5" y="95.6" width="7.0" height="6.5" fill="#5b5b5b"/>
<rect x="304.5" y="89.4" width="7.0" height="6.5" fill="#5d5d5d"/>
<rect x="304.5" y="83.2" width="7.0" height="6.5" fill="#5f5f5f"/>
<rect x="311.3" y="139.0" width="7.0" height="6.5" fill="#4f4f4f"/>
<rect x="311.3" y="132.8" width="7.0" height="6.5" fill="#4f4f4f"/>
<rect x="311.3" y="126.6" width="7.0" height="6.5" fill="#4f4f4f"/>
<rect x="311.3" y="120.4" width="7.0" height="6.5" fill="#4f4f4f"/>
<rect x="311.3" y="114.2" width="7.0" height="6.5" fill="#505050"/>
<rect x="311.3" y="108.0" width="7.0" height="6.5" fill="#525252"/>
<rect x="311.3" y="101.8" width="7.0" height="6.5" fill="#535353"/>
<rect x="311.3" y="95.6" width="7.0" height="6.5" fill="#565656"/>
<rect x="311.3" y="89.4" width="7.0" height="6.5" fill="#595959"/>
<rect x="311.3" y="83.2" width="7.0" height="6.5" fill="#5c5c5c"/>
<rect x="318.1" y="139.0" width="7.0" height="6.5" fill="#4c4c4c"/>
<rect x="318.1" y="132.8" width="7.0" height="6.5" fill="#4c4c4c"/>
<rect x="318.1" y="126.6" width="7.0" height="6.5" fill="#4c4c4c"/>
<rect x="318.1" y="120.4" width="7.0" height="6.5" fill="#4c4c4c"/>
<rect x="318.1" y="114.2" width="7.0" height="6.5" fill="#4e4e4e"/>
<rect x="318.1" y="108.0" width="7.0" height="6.5" fill="#505050"/>
<rect x="318.1" y="101.8" width="7.0" height="6.5" fill="#525252"/>
<rect x="318.1" y="95.6" width="7.0" height="6.5" fill="#555555"/>
<rect x="318.1" y="89.4" width="7.0" height="6.5" fill="#585858"/>
<rect x="318.1" y="83.2" width="7.0" height="6.5" fill="#5b5b5b"/>
<rect x="324.8" y="139.0" width="7.0" height="6.5" fill="#4a4a4a"/>
<rect x="324.8" y="132.8" width="7.0" height="6.5" fill="#494949"/>
<rect x="324.8" y="126.6" width="7.0" height="6.5" fill="#494949"/>
<rect x="324.8" y="120.4" width="7.0" height="6.5" fill="#494949"/>
<rect x="324.8" y="114.2" width="7.0" height="6.5" fill="#4b4b4b"/>
<rect x="324.8" y="108.0" width="7.0" height="6.5" fill="#4e4e4e"/>
<rect x="324.8" y="101.8" width="7.0" height="6.5" fill="#505050"/>
<rect x="324.8" y="95.6" width="7.0" height="6.5" fill="#535353"/>
<rect x="324.8" y="89.4" width="7.0" height="6.5" fill="#575757"/>
<rect x="324.8" y="83.2" width="7.0" height="6.5" fill="#5a5a5a"/>
<rect x="331.6" y="139.0" width="7.0" height="6.5" fill="#474747"/>
<rect x="331.6" y="132.8" width="7.0" height="6.5" fill="#474747"/>
<rect x="331.6" y="126.6" width="7.0" height="6.5" fill="#464646"/>
<rect x="331.6" y="120.4" width="7.0" height="6.5" fill="#464646"/>
<rect x="331.6" y="114.2" width="7.0" height="6.5" fill="#494949"/>
<rect x="331.6" y="108.0" width="7.0" height="6.5" fill="#4c4c4c"/>
<rect x="331.6" y="101.8" width="7.0" height="6.5" fill="#4e4e4e"/>
<rect x="331.6" y="95.6" width="7.0" height="6.5" fill="#525252"/>
<rect x="331.6" y="89.4" width="7.0" height="6.5" fill="#565656"/>
<rect x="331.6" y="83.2" width="7.0" height="6.5" fill="#595959"/>
<rect x="338.3" y="139.0" width="7.0" height="6.5" fill="#4d4d4d"/>
<rect x="338.3" y="132.8" width="7.0" height="6.5" fill="#4c4c4c"/>
<rect x="338.3" y="126.6" width="7.0" height="6.5" fill="#4b4b4b"/>
<rect x="338.3" y="120.4" width="7.0" height="6.5" fill="#4b4b4b"/>
<rect x="338.3" y="114.2" width="7.0" height="6.5" fill="#4d4d4d"/>
<rect x="338.3" y="108.0" width="7.0" height="6.5" fill="#505050"/>
<rect x="338.3" y="101.8" width="7.0" height="6.5" fill="#525252"/>
<rect x="338.3" y="95.6" width="7.0" height="6.5" fill="#555555"/>
<rect x="338.3" y="89.4" width="7.0" height="6.5" fill="#585858"/>
<rect x="338.3" y="83.2" width="7.0" height="6.5" fill="#5b5b5b"/>
<rect x="345.1" y="139.0" width="7.0" height="6.5" fill="#535353"/>
<rect x="345.1" y="132.8" width="7.0" height="6.5" fill="#535353"/>
<rect x="345.1" y="126.6" width="7.0" height="6.5" fill="#525252"/>
<rect x="345.1" y="120.4" width="7.0" height="6.5" fill="#525252"/>
<rect x="345.1" y="114.2" width="7.0" height="6.5" fill="#535353"/>
<rect x="345.1" y="108.0" width="7.0" height="6.5" fill="#555555"/>
<rect x="345.1" y="101.8" width="7.0" height="6.5" fill="#575757"/>
<rect x="345.1" y="95.6" width="7.0" height="6.5" fill="#595959"/>
<rect x="345.1" y="89.4" width="7.0" height="6.5" fill="#5c5c5c"/>
<rect x="345.1" y="83.2" width="7.0" height="6.5" fill="#5e5e5e"/>
<rect x="351.9" y="139.0" width="7.0" height="6.5" fill="#5a5a5a"/>
<rect x="351.9" y="132.8" width="7.0" height="6.5" fill="#5a5a5a"/>
<rect x="351.9" y="126.6" width="7.0" height="6.5" fill="#595959"/>
<rect x="351.9" y="120.4" width="7.0" height="6.5" fill="#585858"/>
<rect x="351.9" y="114.2" width="7.0" height="6.5" fill="#595959"/>
<rect x="351.9" y="108.0" width="7.0" height="6.5" fill="#5a5a5a"/>
<rect x="351.9" y="101.8" width="7.0" height="6.5" fill="#5b5b5b"/>
<rect x="351.9" y="95.6" width="7.0" height="6.5" fill="#5d5d5d"/>
<rect x="351.9" y="89.4" width="7.0" height="6.5" fill="#5f5f5f"/>
<rect x="351.9" y="83.2" width="7.0" height="6.5" fill="#616161"/>
<rect x="270.8" y="139.0" width="1.9" height="6.5" fill="#858585"/>
<rect x="270.8" y="132.8" width="1.9" height="6.5" fill="#868686"/>
<rect x="270.8" y="126.6" width="1.9" height="6.5" fill="#878787"/>
<rect x="270.8" y="120.4" width="1.9" height="6.5" fill="#878787"/>
<rect x="270.8" y="114.2" width="1.9" height="6.5" fill="#878787"/>
<rect x="270.8" y="108.0" width="1.9" height="6.5" fill="#878787"/>
<rect x="270.8" y="101.8" width="1.9" height="6.5" fill="#878787"/>
<rect x="270.8" y="95.6" width="1.9" height="6.5" fill="#888888"/>
<rect x="270.8" y="89.4" width="1.9" height="6.5" fill="#898989"/>
<rect x="270.8" y="83.2" width="1.9" height="6.5" fill="#898989"/>
<rect x="270.8" y="77.0" width="7.0" height="6.5" fill="#5a5a5a"/>
<rect x="270.8" y="70.8" width="7.0" height="6.5" fill="#595959"/>
<rect x="270.8" y="64.6" width="7.0" height="6.5" fill="#575757"/>
<rect x="270.8" y="58.4" width="7.0" height="6.5" fill="#565656"/>
<rect x="270.8" y="52.2" width="7.0" height="6.5" fill="#535353"/>
<rect x="270.8" y="46.0" width="7.0" height="6.5" fill="#515151"/>
<rect x="270.8" y="39.8" width="7.0" height="6.5" fill="#4f4f4f"/>
<rect x="270.8" y="33.6" width="7.0" height="6.5" fill="#4f4f4f"/>
<rect x="270.8" y="27.4" width="7.0" height="6.5" fill="#4e4e4e"/>
<rect x="270.8" y="21.2" width="7.0" height="6.5" fill="#4e4e4e"/>
<rect x="277.5" y="77.0" width="7.0" height="6.5" fill="#5a5a5a"/>
<rect x="277.5" y="70.8" width="7.0" height="6.5" fill="#595959"/>
<rect x="277.5" y="64.6" width="7.0" height="6.5" fill="#575757"/>
<rect x="277.5" y="58.4" width="7.0" height="6.5" fill="#565656"/>
<rect x="277.5" y="52.2" width="7.0" height="6.5" fill="#535353"/>
<rect x="277.5" y="46.0" width="7.0" height="6.5" fill="#515151"/>
<rect x="277.5" y="39.8" width="7.0" height="6.5" fill="#4f4f4f"/>
<rect x="277.5" y="33.6" width="7.0" height="6.5" fill="#4e4e4e"/>
<rect x="277.5" y="27.4" width="7.0" height="6.5" fill="#4e4e4e"/>
<rect x="277.5" y="21.2" width="7.0" height="6.5" fill="#4e4e4e"/>
<rect x="284.3" y="77.0" width="7.0" height="6.5" fill="#5a5a5a"/>
<rect x="284.3" y="70.8" width="7.0" height="6.5" fill="#595959"/>
<rect x="284.3" y="64.6" width="7.0" height="6.5" fill="#575757"/>
<rect x="284.3" y="58.4" width="7.0" height="6.5" fill="#565656"/>
<rect x="284.3" y="52.2" width="7.0" height="6.5" fill="#535353"/>
<rect x="284.3" y="46.0" width="7.0" height="6.5" fill="#515151"/>
<rect x="284.3" y="39.8" width="7.0" height="6.5" fill="#4f4f4f"/>
<rect x="284.3" y="33.6" width="7.0" height="6.5" fill="#4e4e4e"/>
<rect x="284.3" y="27.4" width="7.0" height="6.5" fill="#4e4e4e"/>
<rect x="284.3" y="21.2" width="7.0" height="6.5" fill="#4d4d4d"/>
<rect x="291.0" y="77.0" width="7.0" height="6.5" fill="#5b5b5b"/>
<rect x="291.0" y="70.8" width="7.0" height="6.5" fill="#595959"/>
<rect x="291.0" y="64.6" width="7.0" height="6.5" fill="#585858"/>
<rect x="291.0" y="58.4" width="7.0" height="6.5" fill="#565656"/>
<rect x="291.0" y="52.2" width="7.0" height="6.5" fill="#545454"/>
<rect x="291.0" y="46.0" width="7.0" height="6.5" fill="#525252"/>
<rect x="291.0" y="39.8" width="7.0" height="6.5" fill="#4f4f4f"/>
<rect x="291.0" y="33.6" width="7.0" height="6.5" fill="#4e4e4e"/>
<rect x="291.0" y="27.4" width="7.0" height="6.5" fill="#4e4e4e"/>
<rect x="291.0" y="21.2" width="7.0" height="6.5" fill="#4d4d4d"/>
<rect x="297.8" y="77.0" width="7.0" height="6.5" fill="#5c5c5c"/>
<rect x="297.8" y="70.8" width="7.0" height="6.5" fill="#5b5b5b"/>
<rect x="297.8" y="64.6" width="7.0" height="6.5" fill="#595959"/>
<rect x="297.8" y="58.4" width="7.0" height="6.5" fill="#575757"/>
<rect x="297.8" y="52.2" width="7.0" height="6.5" fill="#565656"/>
<rect x="297.8" y="46.0" width="7.0" height="6.5" fill="#545454"/>
<rect x="297.8" y="39.8" width="7.0" height="6.5" fill="#525252"/>
<rect x="297.8" y="33.6" width="7.0" height="6.5" fill="#515151"/>
<rect x="297.8" y="27.4" width="7.0" height="6.5" fill="#4f4f4f"/>
<rect x="297.8" y="21.2" width="7.0" height="6.5" fill="#4e4e4e"/>
<rect x="304.5" y="77.0" width="7.0" height="6.5" fill="#5e5e5e"/>
<rect x="304.5" y="70.8" width="7.0" height="6.5" fill="#5c5c5c"/>
<rect x="304.5" y="64.6" width="7.0" height="6.5" fill="#5b5b5b"/>
<rect x="304.5" y="58.4" width="7.0" height="6.5" fill="#595959"/>
<rect x="304.5" y="52.2" width="7.0" height="6.5" fill="#575757"/>
<rect x="304.5" y="46.0" width="7.0" height="6.5" fill="#565656"/>
<rect x="304.5" y="39.8" width="7.0" height="6.5" fill="#545454"/>
<rect x="304.5" y="33.6" width="7.0" height="6.5" fill="#535353"/>
<rect x="304.5" y="27.4" width="7.0" height="6.5" fill="#515151"/>
<rect x="304.5" y="21.2" width="7.0" height="6.5" fill="#505050"/>
<rect x="311.3" y="77.0" width="7.0" height="6.5" fill="#5f5f5f"/>
<rect x="311.3" y="70.8" width="7.0" height="6.5" fill="#5e5e5e"/>
<rect x="311.3" y="64.6" width="7.0" height="6.5" fill="#5c5c5c"/>
<rect x="311.3" y="58.4" width="7.0" height="6.5" fill="#5b5b5b"/>
<rect x="311.3" y="52.2" width="7.0" height="6.5" fill="#595959"/>
<rect x="311.3" y="46.0" width="7.0" height="6.5" fill="#585858"/>
<rect x="311.3" y="39.8" width="7.0" height="6.5" fill="#565656"/>
<rect x="311.3" y="33.6" width="7.0" height="6.5" fill="#555555"/>
<rect x="311.3" y="27.4" width="7.0" height="6.5" fill="#535353"/>
<rect x="311.3" y="21.2" width="7.0" height="6.5" fill="#525252"/>
<rect x="318.1" y="77.0" width="7.0" height="6.5" fill="#646464"/>
<rect x="318.1" y="70.8" width="7.0" height="6.5" fill="#636363"/>
<rect x="318.1" y="64.6" width="7.0" height="6.5" fill="#616161"/>
<rect x="318.1" y="58.4" width="7.0" height="6.5" fill="#5f5f5f"/>
<rect x="318.1" y="52.2" width="7.0" height="6.5" fill="#5e5e5e"/>
<rect x="318.1" y="46.0" width="7.0" height="6.5" fill="#5c5c5c"/>
<rect x="318.1" y="39.8" width="7.0" height="6.5" fill="#5b5b5b"/>
<rect x="318.1" y="33.6" width="7.0" height="6.5" fill="#595959"/>
<rect x="318.1" y="27.4" width="7.0" height="6.5" fill="#585858"/>
<rect x="318.1" y="21.2" width="7.0" height="6.5" fill="#565656"/>
<rect x="324.8" y="77.0" width="7.0" height="6.5" fill="#6a6a6a"/>
<rect x="324.8" y="70.8" width="7.0" height="6.5" fill="#686868"/>
<rect x="324.8" y="64.6" width="7.0" height="6.5" fill="#666666"/>
<rect x="324.8" y="58.4" width="7.0" height="6.5" fill="#646464"/>
<rect x="324.8" y="52.2" width="7.0" height="6.5" fill="#626262"/>
<rect x="324.8" y="46.0" width="7.0" height="6.5" fill="#616161"/>
<rect x="324.8" y="39.8" width="7.0" height="6.5" fill="#5f5f5f"/>
<rect x="324.8" y="33.6" width="7.0" height="6.5" fill="#5e5e5e"/>
<rect x="324.8" y="27.4" width="7.0" height="6.5" fill="#5c5c5c"/>
<rect x="324.8" y="21.2" width="7.0" height="6.5" fill="#5b5b5b"/>
<rect x="331.6" y="77.0" width="7.0" height="6.5" fill="#6f6f6f"/>
<rect x="331.6" y="70.8" width="7.0" height="6.5" fill="#6d6d6d"/>
<rect x="331.6" y="64.6" width="7.0" height="6.5" fill="#6b6b6b"/>
<rect x="331.6" y="58.4" width="7.0" height="6.5" fill="#696969"/>
<rect x="331.6" y="52.2" width="7.0" height="6.5" fill="#676767"/>
<rect x="331.6" y="46.0" width="7.0" height="6.5" fill="#666666"/>
<rect x="331.6" y="39.8" width="7.0" height="6.5" fill="#646464"/>
<rect x="331.6" y="33.6" width="7.0" height="6.5" fill="#636363"/>
<rect x="331.6" y="27.4" width="7.0" height="6.5" fill="#616161"/>
<rect x="331.6" y="21.2" width="7.0" height="6.5" fill="#606060"/>
<rect x="338.3" y="77.0" width="7.0" height="6.5" fill="#747474"/>
<rect x="338.3" y="70.8" width="7.0" height="6.5" fill="#727272"/>
<rect x="338.3" y="64.6" width="7.0" height="6.5" fill="#6f6f6f"/>
<rect x="338.3" y="58.4" width="7.0" height="6.5" fill="#6d6d6d"/>
<rect x="338.3" y="52.2" width="7.0" height="6.5" fill="#6c6c6c"/>
<rect x="338.3" y="46.0" width="7.0" height="6.5" fill="#6a6a6a"/>
<rect x="338.3" y="39.8" width="7.0" height="6.5" fill="#696969"/>
<rect x="338.3" y="33.6" width="7.0" height="6.5" fill="#676767"/>
<rect x="338.3" y="27.4" width="7.0" height="6.5" fill="#666666"/>
<rect x="338.3" y="21.2" width="7.0" height="6.5" fill="#656565"/>
<rect x="345.1" y="77.0" width="7.0" height="6.5" fill="#787878"/>
<rect x="345.1" y="70.8" width="7.0" height="6.5" fill="#767676"/>
<rect x="345.1" y="64.6" width="7.0" height="6.5" fill="#747474"/>
<rect x="345.1" y="58.4" width="7.0" height="6.5" fill="#727272"/>
<rect x="345.1" y="52.2" width="7.0" height="6.5" fill="#707070"/>
<rect x="345.1" y="46.0" width="7.0" height="6.5" fill="#6f6f6f"/>
<rect x="345.1" y="39.8" width="7.0" height="6.5" fill="#6d6d6d"/>
<rect x="345.1" y="33.6" width="7.0" height="6.5" fill="#6c6c6c"/>
<rect x="345.1" y="27.4" width="7.0" height="6.5" fill="#6b6b6b"/>
<rect x="345.1" y="21.2" width="7.0" height="6.5" fill="#6a6a6a"/>
<rect x="351.9" y="77.0" width="7.0" height="6.5" fill="#7d7d7d"/>
<rect x="351.9" y="70.8" width="7.0" height="6.5" fill="#7b7b7b"/>
<rect x="351.9" y="64.6" width="7.0" height="6.5" fill="#787878"/>
<rect x="351.9" y="58.4" width="7.0" height="6.5" fill="#767676"/>
<rect x="351.9" y="52.2" width="7.0" height="6.5" fill="#757575"/>
<rect x="351.9" y="46.0" width="7.0" height="6.5" fill="#737373"/>
<rect x="351.9" y="39.8" width="7.0" height="6.5" fill="#727272"/>
<rect x="351.9" y="33.6" width="7.0" height="6.5" fill="#717171"/>
<rect x="351.9" y="27.4" width="7.0" height="6.5" fill="#707070"/>
<rect x="351.9" y="21.2" width="7.0" height="6.5" fill="#6f6f6f"/>
<rect x="270.8" y="77.0" width="1.9" height="6.5" fill="#6e6e6e"/>
<rect x="270.8" y="70.8" width="1.9" height="6.5" fill="#6c6c6c"/>
<rect x="270.8" y="64.6" width="1.9" height="6.5" fill="#6b6b6b"/>
<rect x="270.8" y="58.4" width="1.9" height="6.5" fill="#696969"/>
<rect x="270.8" y="52.2" width="1.9" height="6.5" fill="#676767"/>
<rect x="270.8" y="46.0" width="1.9" height="6.5" fill="#656565"/>
<rect x="270.8" y="39.8" width="1.9" height="6.5" fill="#636363"/>
<rect x="270.8" y="33.6" width="1.9" height="6.5" fill="#626262"/>
<rect x="270.8" y="27.4" width="1.9" height="6.5" fill="#626262"/>
<rect x="270.8" y="21.2" width="1.9" height="6.5" fill="#626262"/>
<rect x="356.9" y="77.0" width="1.9" height="6.5" fill="#a6a6a6"/>
<rect x="356.9" y="70.8" width="1.9" height="6.5" fill="#a4a4a4"/>
<rect x="356.9" y="64.6" width="1.9" height="6.5" fill="#a1a1a1"/>
<rect x="356.9" y="58.4" width="1.9" height="6.5" fill="#9f9f9f"/>
<rect x="356.9" y="52.2" width="1.9" height="6.5" fill="#9e9e9e"/>
<rect x="356.9" y="46.0" width="1.9" height="6.5" fill="#9c9c9c"/>
<rect x="356.9" y="39.8" width="1.9" height="6.5" fill="#9b9b9b"/>
<rect x="356.9" y="33.6" width="1.9" height="6.5" fill="#9a9a9a"/>
<rect x="356.9" y="27.4" width="1.9" height="6.5" fill="#999999"/>
<rect x="356.9" y="21.2" width="1.9" height="6.5" fill="#999999"/>
<rect x="270.8" y="81.6" width="7.0" height="1.8" fill="#606060"/>
<rect x="277.5" y="81.6" width="7.0" height="1.8" fill="#606060"/>
<rect x="284.3" y="81.6" width="7.0" height="1.8" fill="#5f5f5f"/>
<rect x="291.0" y="81.6" width="7.0" height="1.8" fill="#5f5f5f"/>
<rect x="297.8" y="81.6" width="7.0" height="1.8" fill="#606060"/>
<rect x="304.5" y="81.6" width="7.0" height="1.8" fill="#626262"/>
<rect x="311.3" y="81.6" width="7.0" height="1.8" fill="#636363"/>
<rect x="318.1" y="81.6" width="7.0" height="1.8" fill="#696969"/>
<rect x="324.8" y="81.6" width="7.0" height="1.8" fill="#6f6f6f"/>
<rect x="331.6" y="81.6" width="7.0" height="1.8" fill="#747474"/>
<rect x="338.3" y="81.6" width="7.0" height="1.8" fill="#7a7a7a"/>
<rect x="345.1" y="81.6" width="7.0" height="1.8" fill="#7f7f7f"/>
<rect x="351.9" y="81.6" width="7.0" height="1.8" fill="#838383"/>
<rect x="358.6" y="139.0" width="7.0" height="6.5" fill="#7b7b7b"/>
<rect x="358.6" y="132.8" width="7.0" height="6.5" fill="#7b7b7b"/>
<rect x="358.6" y="126.6" width="7.0" height="6.5" fill="#7b7b7b"/>
<rect x="358.6" y="120.4" width="7.0" height="6.5" fill="#7b7b7b"/>
<rect x="358.6" y="114.2" width="7.0" height="6.5" fill="#7b7b7b"/>
<rect x="358.6" y="108.0" width="7.0" height="6.5" fill="#7c7c7c"/>
<rect x="358.6" y="101.8" width="7.0" height="6.5" fill="#7c7c7c"/>
<rect x="358.6" y="95.6" width="7.0" height="6.5" fill="#7d7d7d"/>
<rect x="358.6" y="89.4" width="7.0" height="6.5" fill="#7e7e7e"/>
<rect x="358.6" y="83.2" width="7.0" height="6.5" fill="#7e7e7e"/>
<rect x="365.4" y="139.0" width="7.0" height="6.5" fill="#757575"/>
<rect x="365.4" y="132.8" width="7.0" height="6.5" fill="#757575"/>
<rect x="365.4" y="126.6" width="7.0" height="6.5" fill="#767676"/>
<rect x="365.4" y="120.4" width="7.0" height="6.5" fill="#767676"/>
<rect x="365.4" y="114.2" width="7.0" height="6.5" fill="#777777"/>
<rect x="365.4" y="108.0" width="7.0" height="6.5" fill="#777777"/>
<rect x="365.4" y="101.8" width="7.0" height="6.5" fill="#787878"/>
<rect x="365.4" y="95.6" width="7.0" height="6.5" fill="#797979"/>
<rect x="365.4" y="89.4" width="7.0" height="6.5" fill="#7b7b7b"/>
<rect x="365.4" y="83.2" width="7.0" height="6.5" fill="#7c7c7c"/>
<rect x="372.1" y="139.0" width="7.0" height="6.5" fill="#6f6f6f"/>
<rect x="372.1" y="132.8" width="7.0" height="6.5" fill="#6f6f6f"/>
<rect x="372.1" y="126.6" width="7.0" height="6.5" fill="#707070"/>
<rect x="372.1" y="120.4" width="7.0" height="6.5" fill="#717171"/>
<rect x="372.1" y="114.2" width="7.0" height="6.5" fill="#727272"/>
<rect x="372.1" y="108.0" width="7.0" height="6.5" fill="#737373"/>
<rect x="372.1" y="101.8" width="7.0" height="6.5" fill="#747474"/>
<rect x="372.1" y="95.6" width="7.0" height="6.5" fill="#767676"/>
<rect x="372.1" y="89.4" width="7.0" height="6.5" fill="#787878"/>
<rect x="372.1" y="83.2" width="7.0" height="6.5" fill="#797979"/>
<rect x="378.9" y="139.0" width="7.0" height="6.5" fill="#686868"/>
<rect x="378.9" y="132.8" width="7.0" height="6.5" fill="#696969"/>
<rect x="378.9" y="126.6" width="7.0" height="6.5" fill="#6a6a6a"/>
<rect x="378.9" y="120.4" width="7.0" height="6.5" fill="#6b6b6b"/>
<rect x="378.9" y="114.2" width="7.0" height="6.5" fill="#6c6c6c"/>
<rect x="378.9" y="108.0" width="7.0" height="6.5" fill="#6e6e6e"/>
<rect x="378.9" y="101.8" width="7.0" height="6.5" fill="#6f6f6f"/>
<rect x="378.9" y="95.6" width="7.0" height="6.5" fill="#717171"/>
<rect x="378.9" y="89.4" width="7.0" height="6.5" fill="#747474"/>
<rect x="378.9" y="83.2" width="7.0" height="6.5" fill="#767676"/>
<rect x="385.7" y="139.0" width="7.0" height="6.5" fill="#616161"/>
<rect x="385.7" y="132.8" width="7.0" height="6.5" fill="#616161"/>
<rect x="385.7" y="126.6" width="7.0" height="6.5" fill="#616161"/>
<rect x="385.7" y="120.4" width="7.0" height="6.5" fill="#616161"/>
<rect x="385.7" y="114.2" width="7.0" height="6.5" fill="#636363"/>
<rect x="385.7" y="108.0" width="7.0" height="6.5" fill="#656565"/>
<rect x="385.7" y="101.8" width="7.0" height="6.5" fill="#676767"/>
<rect x="385.7" y="95.6" width="7.0" height="6.5" fill="#6a6a6a"/>
<rect x="385.7" y="89.4" width="7.0" height="6.5" fill="#6d6d6d"/>
<rect x="385.7" y="83.2" width="7.0" height="6.5" fill="#707070"/>
<rect x="392.4" y="139.0" width="7.0" height="6.5" fill="#595959"/>
<rect x="392.4" y="132.8" width="7.0" height="6.5" fill="#585858"/>
<rect x="392.4" y="126.6" width="7.0" height="6.5" fill="#585858"/>
<rect x="392.4" y="120.4" width="7.0" height="6.5" fill="#585858"/>
<rect x="392.4" y="114.2" width="7.0" height="6.5" fill="#5a5a5a"/>
<rect x="392.4" y="108.0" width="7.0" height="6.5" fill="#5c5c5c"/>
<rect x="392.4" y="101.8" width="7.0" height="6.5" fill="#5e5e5e"/>
<rect x="392.4" y="95.6" width="7.0" height="6.5" fill="#626262"/>
<rect x="392.4" y="89.4" width="7.0" height="6.5" fill="#666666"/>
<rect x="392.4" y="83.2" width="7.0" height="6.5" fill="#6b6b6b"/>
<rect x="399.2" y="139.0" width="7.0" height="6.5" fill="#515151"/>
<rect x="399.2" y="132.8" width="7.0" height="6.5" fill="#505050"/>
<rect x="399.2" y="126.6" width="7.0" height="6.5" fill="#4f4f4f"/>
<rect x="399.2" y="120.4" width="7.0" height="6.5" fill="#4f4f4f"/>
<rect x="399.2" y="114.2" width="7.0" height="6.5" fill="#515151"/>
<rect x="399.2" y="108.0" width="7.0" height="6.5" fill="#535353"/>
<rect x="399.2" y="101.8" width="7.0" height="6.5" fill="#565656"/>
<rect x="399.2" y="95.6" width="7.0" height="6.5" fill="#5a5a5a"/>
<rect x="399.2" y="89.4" width="7.0" height="6.5" fill="#606060"/>
<rect x="399.2" y="83.2" width="7.0" height="6.5" fill="#656565"/>
<rect x="405.9" y="139.0" width="7.0" height="6.5" fill="#4e4e4e"/>
<rect x="405.9" y="132.8" width="7.0" height="6.5" fill="#4e4e4e"/>
<rect x="405.9" y="126.6" width="7.0" height="6.5" fill="#4d4d4d"/>
<rect x="405.9" y="120.4" width="7.0" height="6.5" fill="#4d4d4d"/>
<rect x="405.9" y="114.2" width="7.0" height="6.5" fill="#4e4e4e"/>
<rect x="405.9" y="108.0" width="7.0" height="6.5" fill="#505050"/>
<rect x="405.9" y="101.8" width="7.0" height="6.5" fill="#525252"/>
<rect x="405.9" y="95.6" width="7.0" height="6.5" fill="#565656"/>
<rect x="405.9" y="89.4" width="7.0" height="6.5" fill="#5a5a5a"/>
<rect x="405.9" y="83.2" width="7.0" height="6.5" fill="#5f5f5f"/>
<rect x="412.7" y="139.0" width="7.0" height="6.5" fill="#4c4c4c"/>
<rect x="412.7" y="132.8" width="7.0" height="6.5" fill="#4b4b4b"/>
<rect x="412.7" y="126.6" width="7.0" height="6.5" fill="#4b4b4b"/>
<rect x="412.7" y="120.4" width="7.0" height="6.5" fill="#4a4a4a"/>
<rect x="412.7" y="114.2" width="7.0" height="6.5" fill="#4b4b4b"/>
<rect x="412.7" y="108.0" width="7.0" height="6.5" fill="#4d4d4d"/>
<rect x="412.7" y="101.8" width="7.0" height="6.5" fill="#4e4e4e"/>
<rect x="412.7" y="95.6" width="7.0" height="6.5" fill="#515151"/>
<rect x="412.7" y="89.4" width="7.0" height="6.5" fill="#555555"/>
<rect x="412.7" y="83.2" width="7.0" height="6.5" fill="#595959"/>
<rect x="419.5" y="139.0" width="7.0" height="6.5" fill="#4a4a4a"/>
<rect x="419.5" y="132.8" width="7.0" height="6.5" fill="#494949"/>
<rect x="419.5" y="126.6" width="7.0" height="6.5" fill="#484848"/>
<rect x="419.5" y="120.4" width="7.0" height="6.5" fill="#484848"/>
<rect x="419.5" y="114.2" width="7.0" height="6.5" fill="#494949"/>
<rect x="419.5" y="108.0" width="7.0" height="6.5" fill="#494949"/>
<rect x="419.5" y="101.8" width="7.0" height="6.5" fill="#4a4a4a"/>
<rect x="419.5" y="95.6" width="7.0" height="6.5" fill="#4d4d4d"/>
<rect x="419.5" y="89.4" width="7.0" height="6.5" fill="#505050"/>
<rect x="419.5" y="83.2" width="7.0" height="6.5" fill="#535353"/>
<rect x="426.2" y="139.0" width="7.0" height="6.5" fill="#4b4b4b"/>
<rect x="426.2" y="132.8" width="7.0" height="6.5" fill="#4a4a4a"/>
<rect x="426.2" y="126.6" width="7.0" height="6.5" fill="#494949"/>
<rect x="426.2" y="120.4" width="7.0" height="6.5" fill="#494949"/>
<rect x="426.2" y="114.2" width="7.0" height="6.5" fill="#494949"/>
<rect x="426.2" y="108.0" width="7.0" height="6.5" fill="#4a4a4a"/>
<rect x="426.2" y="101.8" width="7.0" height="6.5" fill="#4b4b4b"/>
<rect x="426.2" y="95.6" width="7.0" height="6.5" fill="#4d4d4d"/>
<rect x="426.2" y="89.4" width="7.0" height="6.5" fill="#505050"/>
<rect x="426.2" y="83.2" width="7.0" height="6.5" fill="#525252"/>
<rect x="433.0" y="139.0" width="7.0" height="6.5" fill="#4c4c4c"/>
<rect x="433.0" y="132.8" width="7.0" height="6.5" fill="#4b4b4b"/>
<rect x="433.0" y="126.6" width="7.0" height="6.5" fill="#4b4b4b"/>
<rect x="433.0" y="120.4" width="7.0" height="6.5" fill="#4a4a4a"/>
<rect x="433.0" y="114.2" width="7.0" height="6.5" fill="#4b4b4b"/>
<rect x="433.0" y="108.0" width="7.0" height="6.5" fill="#4c4c4c"/>
<rect x="433.0" y="101.8" width="7.0" height="6.5" fill="#4c4c4c"/>
<rect x="433.0" y="95.6" width="7.0" height="6.5" fill="#4e4e4e"/>
<rect x="433.0" y="89.4" width="7.0" height="6.5" fill="#505050"/>
<rect x="433.0" y="83.2" width="7.0" height="6.5" fill="#535353"/>
<rect x="439.7" y="139.0" width="7.0" height="6.5" fill="#4e4e4e"/>
<rect x="439.7" y="132.8" width="7.0" height="6.5" fill="#4d4d4d"/>
<rect x="439.7" y="126.6" width="7.0" height="6.5" fill="#4c4c4c"/>
<rect x="439.7" y="120.4" width="7.0" height="6.5" fill="#4c4c4c"/>
<rect x="439.7" y="114.2" width="7.0" height="6.5" fill="#4c4c4c"/>
<rect x="439.7" y="108.0" width="7.0" height="6.5" fill="#4d4d4d"/>
<rect x="439.7" y="101.8" width="7.0" height="6.5" fill="#4e4e4e"/>
<rect x="439.7" y="95.6" width="7.0" height="6.5" fill="#4f4f4f"/>
<rect x="439.7" y="89.4" width="7.0" height="6.5" fill="#515151"/>
<rect x="439.7" y="83.2" width="7.0" height="6.5" fill="#535353"/>
<rect x="358.6" y="139.0" width="1.9" height="6.5" fill="#919191"/>
<rect x="358.6" y="132.8" width="1.9" height="6.5" fill="#919191"/>
<rect x="358.6" y="126.6" width="1.9" height="6.5" fill="#919191"/>
<rect x="358.6" y="120.4" width="1.9" height="6.5" fill="#919191"/>
<rect x="358.6" y="114.2" width="1.9" height="6.5" fill="#919191"/>
<rect x="358.6" y="108.0" width="1.9" height="6.5" fill="#919191"/>
<rect x="358.6" y="101.8" width="1.9" height="6.5" fill="#919191"/>
<rect x="358.6" y="95.6" width="1.9" height="6.5" fill="#929292"/>
<rect x="358.6" y="89.4" width="1.9" height="6.5" fill="#929292"/>
<rect x="358.6" y="83.2" width="1.9" height="6.5" fill="#939393"/>
<rect x="444.8" y="139.0" width="1.9" height="6.5" fill="#5d5d5d"/>
<rect x="444.8" y="132.8" width="1.9" height="6.5" fill="#5c5c5c"/>
<rect x="444.8" y="126.6" width="1.9" height="6.5" fill="#5b5b5b"/>
<rect x="444.8" y="120.4" width="1.9" height="6.5" fill="#5b5b5b"/>
<rect x="444.8" y="114.2" width="1.9" height="6.5" fill="#5c5c5c"/>
<rect x="444.8" y="108.0" width="1.9" height="6.5" fill="#5d5d5d"/>
<rect x="444.8" y="101.8" width="1.9" height="6.5" fill="#5d5d5d"/>
<rect x="444.8" y="95.6" width="1.9" height="6.5" fill="#5f5f5f"/>
<rect x="444.8" y="89.4" width="1.9" height="6.5" fill="#606060"/>
<rect x="444.8" y="83.2" width="1.9" height="6.5" fill="#626262"/>
<rect x="358.6" y="77.0" width="7.0" height="6.5" fill="#a9a9a9"/>
<rect x="358.6" y="70.8" width="7.0" height="6.5" fill="#9f9f9f"/>
<rect x="358.6" y="64.6" width="7.0" height="6.5" fill="#989898"/>
<rect x="358.6" y="58.4" width="7.0" height="6.5" fill="#939393"/>
<rect x="358.6" y="52.2" width="7.0" height="6.5" fill="#8f8f8f"/>
<rect x="358.6" y="46.0" width="7.0" height="6.5" fill="#8b8b8b"/>
<rect x="358.6" y="39.8" width="7.0" height="6.5" fill="#888888"/>
<rect x="358.6" y="33.6" width="7.0" height="6.5" fill="#868686"/>
<rect x="358.6" y="27.4" width="7.0" height="6.5" fill="#848484"/>
<rect x="358.6" y="21.2" width="7.0" height="6.5" fill="#838383"/>
<rect x="365.4" y="77.0" width="7.0" height="6.5" fill="#a8a8a8"/>
<rect x="365.4" y="70.8" width="7.0" height="6.5" fill="#9e9e9e"/>
<rect x="365.4" y="64.6" width="7.0" height="6.5" fill="#989898"/>
<rect x="365.4" y="58.4" width="7.0" height="6.5" fill="#939393"/>
<rect x="365.4" y="52.2" width="7.0" height="6.5" fill="#8f8f8f"/>
<rect x="365.4" y="46.0" width="7.0" height="6.5" fill="#8b8b8b"/>
<rect x="365.4" y="39.8" width="7.0" height="6.5" fill="#888888"/>
<rect x="365.4" y="33.6" width="7.0" height="6.5" fill="#868686"/>
<rect x="365.4" y="27.4" width="7.0" height="6.5" fill="#848484"/>
<rect x="365.4" y="21.2" width="7.0" height="6.5" fill="#838383"/>
<rect x="372.1" y="77.0" width="7.0" height="6.5" fill="#a8a8a8"/>
<rect x="372.1" y="70.8" width="7.0" height="6.5" fill="#9e9e9e"/>
<rect x="372.1" y="64.6" width="7.0" height="6.5" fill="#989898"/>
<rect x="372.1" y="58.4" width="7.0" height="6.5" fill="#939393"/>
<rect x="372.1" y="52.2" width="7.0" height="6.5" fill="#8f8f8f"/>
<rect x="372.1" y="46.0" width="7.0" height="6.5" fill="#8b8b8b"/>
<rect x="372.1" y="39.8" width="7.0" height="6.5" fill="#888888"/>
<rect x="372.1" y="33.6" width="7.0" height="6.5" fill="#868686"/>
<rect x="372.1" y="27.4" width="7.0" height="6.5" fill="#848484"/>
<rect x="372.1" y="21.2" width="7.0" height="6.5" fill="#838383"/>
<rect x="378.9" y="77.0" width="7.0" height="6.5" fill="#a8a8a8"/>
<rect x="378.9" y="70.8" width="7.0" height="6.5" fill="#9e9e9e"/>
<rect x="378.9" y="64.6" width="7.0" height="6.5" fill="#989898"/>
<rect x="378.9" y="58.4" width="7.0" height="6.5" fill="#939393"/>
<rect x="378.9" y="52.2" width="7.0" height="6.5" fill="#8f8f8f"/>
<rect x="378.9" y="46.0" width="7.0" height="6.5" fill="#8b8b8b"/>
<rect x="378.9" y="39.8" width="7.0" height="6.5" fill="#888888"/>
<rect x="378.9" y="33.6" width="7.0" height="6.5" fill="#868686"/>
<rect x="378.9" y="27.4" width="7.0" height="6.5" fill="#848484"/>
<rect x="378.9" y="21.2" width="7.0" height="6.5" fill="#838383"/>
<rect x="385.7" y="77.0" width="7.0" height="6.5" fill="#a8a8a8"/>
<rect x="385.7" y="70.8" width="7.0" height="6.5" fill="#9e9e9e"/>
<rect x="385.7" y="64.6" width="7.0" height="6.5" fill="#989898"/>
<rect x="385.7" y="58.4" width="7.0" height="6.5" fill="#939393"/>
<rect x="385.7" y="52.2" width="7.0" height="6.5" fill="#8f8f8f"/>
<rect x="385.7" y="46.0" width="7.0" height="6.5" fill="#8b8b8b"/>
<rect x="385.7" y="39.8" width="7.0" height="6.5" fill="#888888"/>
<rect x="385.7" y="33.6" width="7.0" height="6.5" fill="#868686"/>
<rect x="385.7" y="27.4" width="7.0" height="6.5" fill="#848484"/>
<rect x="385.7" y="21.2" width="7.0" height="6.5" fill="#838383"/>
<rect x="392.4" y="77.0" width="7.0" height="6.5" fill="#a9a9a9"/>
<rect x="392.4" y="70.8" width="7.0" height="6.5" fill="#9e9e9e"/>
<rect x="392.4" y="64.6" width="7.0" height="6.5" fill="#989898"/>
<rect x="392.4" y="58.4" width="7.0" height="6.5" fill="#939393"/>
<rect x="392.4" y="52.2" width="7.0" height="6.5" fill="#8f8f8f"/>
<rect x="392.4" y="46.0" width="7.0" height="6.5" fill="#8b8b8b"/>
<rect x="392.4" y="39.8" width="7.0" height="6.5" fill="#888888"/>
<rect x="392.4" y="33.6" width="7.0" height="6.5" fill="#868686"/>
<rect x="392.4" y="27.4" width="7.0" height="6.5" fill="#848484"/>
<rect x="392.4" y="21.2" width="7.0" height="6.5" fill="#838383"/>
<rect x="399.2" y="77.0" width="7.0" height="6.5" fill="#a9a9a9"/>
<rect x="399.2" y="70.8" width="7.0" height="6.5" fill="#9e9e9e"/>
<rect x="399.2" y="64.6" width="7.0" height="6.5" fill="#989898"/>
<rect x="399.2" y="58.4" width="7.0" height="6.5" fill="#939393"/>
<rect x="399.2" y="52.2" width="7.0" height="6.5" fill="#8f8f8f"/>
<rect x="399.2" y="46.0" width="7.0" height="6.5" fill="#8b8b8b"/>
<rect x="399.2" y="39.8" width="7.0" height="6.5" fill="#888888"/>
<rect x="399.2" y="33.6" width="7.0" height="6.5" fill="#868686"/>
<rect x="399.2" y="27.4" width="7.0" height="6.5" fill="#848484"/>
<rect x="399.2" y="21.2" width="7.0" height="6.5" fill="#838383"/>
<rect x="405.9" y="77.0" width="7.0" height="6.5" fill="#adadad"/>
<rect x="405.9" y="70.8" width="7.0" height="6.5" fill="#a1a1a1"/>
<rect x="405.9" y="64.6" width="7.0" height="6.5" fill="#9a9a9a"/>
<rect x="405.9" y="58.4" width="7.0" height="6.5" fill="#959595"/>
<rect x="405.9" y="52.2" width="7.0" height="6.5" fill="#919191"/>
<rect x="405.9" y="46.0" width="7.0" height="6.5" fill="#8d8d8d"/>
<rect x="405.9" y="39.8" width="7.0" height="6.5" fill="#898989"/>
<rect x="405.9" y="33.6" width="7.0" height="6.5" fill="#878787"/>
<rect x="405.9" y="27.4" width="7.0" height="6.5" fill="#858585"/>
<rect x="405.9" y="21.2" width="7.0" height="6.5" fill="#848484"/>
<rect x="412.7" y="77.0" width="7.0" height="6.5" fill="#b0b0b0"/>
<rect x="412.7" y="70.8" width="7.0" height="6.5" fill="#a4a4a4"/>
<rect x="412.7" y="64.6" width="7.0" height="6.5" fill="#9c9c9c"/>
<rect x="412.7" y="58.4" width="7.0" height="6.5" fill="#969696"/>
<rect x="412.7" y="52.2" width="7.0" height="6.5" fill="#929292"/>
<rect x="412.7" y="46.0" width="7.0" height="6.5" fill="#8e8e8e"/>
<rect x="412.7" y="39.8" width="7.0" height="6.5" fill="#898989"/>
<rect x="412.7" y="33.6" width="7.0" height="6.5" fill="#878787"/>
<rect x="412.7" y="27.4" width="7.0" height="6.5" fill="#868686"/>
<rect x="412.7" y="21.2" width="7.0" height="6.5" fill="#848484"/>
<rect x="419.5" y="77.0" width="7.0" height="6.5" fill="#b3b3b3"/>
<rect x="419.5" y="70.8" width="7.0" height="6.5" fill="#a6a6a6"/>
<rect x="419.5" y="64.6" width="7.0" height="6.5" fill="#9e9e9e"/>
<rect x="419.5" y="58.4" width="7.0" height="6.5" fill="#989898"/>
<rect x="419.5" y="52.2" width="7.0" height="6.5" fill="#939393"/>
<rect x="419.5" y="46.0" width="7.0" height="6.5" fill="#8f8f8f"/>
<rect x="419.5" y="39.8" width="7.0" height="6.5" fill="#8a8a8a"/>
<rect x="419.5" y="33.6" width="7.0" height="6.5" fill="#888888"/>
<rect x="419.5" y="27.4" width="7.0" height="6.5" fill="#878787"/>
<rect x="419.5" y="21.2" width="7.0" height="6.5" fill="#858585"/>
<rect x="426.2" y="77.0" width="7.0" height="6.5" fill="#b7b7b7"/>
<rect x="426.2" y="70.8" width="7.0" height="6.5" fill="#aaaaaa"/>
<rect x="426.2" y="64.6" width="7.0" height="6.5" fill="#a1a1a1"/>
<rect x="426.2" y="58.4" width="7.0" height="6.5" fill="#9b9b9b"/>
<rect x="426.2" y="52.2" width="7.0" height="6.5" fill="#969696"/>
<rect x="426.2" y="46.0" width="7.0" height="6.5" fill="#919191"/>
<rect x="426.2" y="39.8" width="7.0" height="6.5" fill="#8c8c8c"/>
<rect x="426.2" y="33.6" width="7.0" height="6.5" fill="#8a8a8a"/>
<rect x="426.2" y="27.4" width="7.0" height="6.5" fill="#888888"/>
<rect x="426.2" y="21.2" width="7.0" height="6.5" fill="#878787"/>
<rect x="433.0" y="77.0" width="7.0" height="6.5" fill="#bcbcbc"/>
<rect x="433.0" y="70.8" width="7.0" height="6.5" fill="#adadad"/>
<rect x="433.0" y="64.6" width="7.0" height="6.5" fill="#a4a4a4"/>
<rect x="433.0" y="58.4" width="7.0" height="6.5" fill="#9e9e9e"/>
<rect x="433.0" y="52.2" width="7.0" height="6.5" fill="#989898"/>
<rect x="433.0" y="46.0" width="7.0" height="6.5" fill="#949494"/>
<rect x="433.0" y="39.8" width="7.0" height="6.5" fill="#8f8f8f"/>
<rect x="433.0" y="33.6" width="7.0" height="6.5" fill="#8c8c8c"/>
<rect x="433.0" y="27.4" width="7.0" height="6.5" fill="#8a8a8a"/>
<rect x="433.0" y="21.2" width="7.0" height="6.5" fill="#888888"/>
<rect x="439.7" y="77.0" width="7.0" height="6.5" fill="#c0c0c0"/>
<rect x="439.7" y="70.8" width="7.0" height="6.5" fill="#b1b1b1"/>
<rect x="439.7" y="64.6" width="7.0" height="6.5" fill="#a8a8a8"/>
<rect x="439.7" y="58.4" width="7.0" height="6.5" fill="#a1a1a1"/>
<rect x="439.7" y="52.2" width="7.0" height="6.5" fill="#9b9b9b"/>
<rect x="439.7" y="46.0" width="7.0" height="6.5" fill="#969696"/>
<rect x="439.7" y="39.8" width="7.0" height="6.5" fill="#919191"/>
<rect x="439.7" y="33.6" width="7.0" height="6.5" fill="#8e8e8e"/>
<rect x="439.7" y="27.4" width="7.0" height="6.5" fill="#8c8c8c"/>
<rect x="439.7" y="21.2" width="7.0" height="6.5" fill="#8a8a8a"/>
<rect x="358.6" y="77.0" width="1.9" height="6.5" fill="#c0c0c0"/>
<rect x="358.6" y="70.8" width="1.9" height="6.5" fill="#b7b7b7"/>
<rect x="358.6" y="64.6" width="1.9" height="6.5" fill="#b0b0b0"/>
<rect x="358.6" y="58.4" width="1.9" height="6.5" fill="#ababab"/>
<rect x="358.6" y="52.2" width="1.9" height="6.5" fill="#a8a8a8"/>
<rect x="358.6" y="46.0" width="1.9" height="6.5" fill="#a4a4a4"/>
<rect x="358.6" y="39.8" width="1.9" height="6.5" fill="#a0a0a0"/>
<rect x="358.6" y="33.6" width="1.9" height="6.5" fill="#9e9e9e"/>
<rect x="358.6" y="27.4" width="1.9" height="6.5" fill="#9d9d9d"/>
<rect x="358.6" y="21.2" width="1.9" height="6.5" fill="#9b9b9b"/>
<rect x="444.8" y="77.0" width="1.9" height="6.5" fill="#d9d9d9"/>
<rect x="444.8" y="70.8" width="1.9" height="6.5" fill="#cacaca"/>
<rect x="444.8" y="64.6" width="1.9" height="6.5" fill="#c1c1c1"/>
<rect x="444.8" y="58.4" width="1.9" height="6.5" fill="#bababa"/>
<rect x="444.8" y="52.2" width="1.9" height="6.5" fill="#b5b5b5"/>
<rect x="444.8" y="46.0" width="1.9" height="6.5" fill="#afafaf"/>
<rect x="444.8" y="39.8" width="1.9" height="6.5" fill="#aaaaaa"/>
<rect x="444.8" y="33.6" width="1.9" height="6.5" fill="#a8a8a8"/>
<rect x="444.8" y="27.4" width="1.9" height="6.5" fill="#a5a5a5"/>
<rect x="444.8" y="21.2" width="1.9" height="6.5" fill="#a3a3a3"/>
<rect x="358.6" y="81.6" width="7.0" height="1.8" fill="#e0e0e0"/>
<rect x="365.4" y="81.6" width="7.0" height="1.8" fill="#dedede"/>
<rect x="372.1" y="81.6" width="7.0" height="1.8" fill="#dadada"/>
<rect x="378.9" y="81.6" width="7.0" height="1.8" fill="#d6d6d6"/>
<rect x="385.7" y="81.6" width="7.0" height="1.8" fill="#d2d2d2"/>
<rect x="392.4" y="81.6" width="7.0" height="1.8" fill="#cfcfcf"/>
<rect x="399.2" y="81.6" width="7.0" height="1.8" fill="#cfcfcf"/>
<rect x="405.9" y="81.6" width="7.0" height="1.8" fill="#d4d4d4"/>
<rect x="412.7" y="81.6" width="7.0" height="1.8" fill="#dbdbdb"/>
<rect x="419.5" y="81.6" width="7.0" height="1.8" fill="#e3e3e3"/>
<rect x="426.2" y="81.6" width="7.0" height="1.8" fill="#ececec"/>
<rect x="433.0" y="81.6" width="7.0" height="1.8" fill="#f5f5f5"/>
<rect x="439.7" y="81.6" width="7.0" height="1.8" fill="#fcfcfc"/>
<rect x="446.5" y="139.0" width="7.0" height="6.5" fill="#8c8c8c"/>
<rect x="446.5" y="132.8" width="7.0" height="6.5" fill="#8c8c8c"/>
<rect x="446.5" y="126.6" width="7.0" height="6.5" fill="#8c8c8c"/>
<rect x="446.5" y="120.4" width="7.0" height="6.5" fill="#8c8c8c"/>
<rect x="446.5" y="114.2" width="7.0" height="6.5" fill="#8d8d8d"/>
<rect x="446.5" y="108.0" width="7.0" height="6.5" fill="#8d8d8d"/>
<rect x="446.5" y="101.8" width="7.0" height="6.5" fill="#8d8d8d"/>
<rect x="446.5" y="95.6" width="7.0" height="6.5" fill="#8d8d8d"/>
<rect x="446.5" y="89.4" width="7.0" height="6.5" fill="#8d8d8d"/>
<rect x="446.5" y="83.2" width="7.0" height="6.5" fill="#8d8d8d"/>
<rect x="453.3" y="139.0" width="7.0" height="6.5" fill="#878787"/>
<rect x="453.3" y="132.8" width="7.0" height="6.5" fill="#878787"/>
<rect x="453.3" y="126.6" width="7.0" height="6.5" fill="#878787"/>
<rect x="453.3" y="120.4" width="7.0" height="6.5" fill="#878787"/>
<rect x="453.3" y="114.2" width="7.0" height="6.5" fill="#878787"/>
<rect x="453.3" y="108.0" width="7.0" height="6.5" fill="#888888"/>
<rect x="453.3" y="101.8" width="7.0" height="6.5" fill="#888888"/>
<rect x="453.3" y="95.6" width="7.0" height="6.5" fill="#888888"/>
<rect x="453.3" y="89.4" width="7.0" height="6.5" fill="#888888"/>
<rect x="453.3" y="83.2" width="7.0" height="6.5" fill="#888888"/>
<rect x="460.0" y="139.0" width="7.0" height="6.5" fill="#828282"/>
<rect x="460.0" y="132.8" width="7.0" height="6.5" fill="#828282"/>
<rect x="460.0" y="126.6" width="7.0" height="6.5" fill="#828282"/>
<rect x="460.0" y="120.4" width="7.0" height="6.5" fill="#828282"/>
<rect x="460.0" y="114.2" width="7.0" height="6.5" fill="#828282"/>
<rect x="460.0" y="108.0" width="7.0" height="6.5" fill="#838383"/>
<rect x="460.0" y="101.8" width="7.0" height="6.5" fill="#838383"/>
<rect x="460.0" y="95.6" width="7.0" height="6.5" fill="#848484"/>
<rect x="460.0" y="89.4" width="7.0" height="6.5" fill="#848484"/>
<rect x="460.0" y="83.2" width="7.0" height="6.5" fill="#848484"/>
<rect x="466.8" y="139.0" width="7.0" height="6.5" fill="#7c7c7c"/>
<rect x="466.8" y="132.8" width="7.0" height="6.5" fill="#7c7c7c"/>
<rect x="466.8" y="126.6" width="7.0" height="6.5" fill="#7c7c7c"/>
<rect x="466.8" y="120.4" width="7.0" height="6.5" fill="#7c7c7c"/>
<rect x="466.8" y="114.2" width="7.0" height="6.5" fill="#7d7d7d"/>
<rect x="466.8" y="108.0" width="7.0" height="6.5" fill="#7e7e7e"/>
<rect x="466.8" y="101.8" width="7.0" height="6.5" fill="#7e7e7e"/>
<rect x="466.8" y="95.6" width="7.0" height="6.5" fill="#7f7f7f"/>
<rect x="466.8" y="89.4" width="7.0" height="6.5" fill="#7f7f7f"/>
<rect x="466.8" y="83.2" width="7.0" height="6.5" fill="#7f7f7f"/>
<rect x="473.5" y="139.0" width="7.0" height="6.5" fill="#747474"/>
<rect x="473.5" y="132.8" width="7.0" height="6.5" fill="#757575"/>
<rect x="473.5" y="126.6" width="7.0" height="6.5" fill="#757575"/>
<rect x="473.5" y="120.4" width="7.0" height="6.5" fill="#757575"/>
<rect x="473.5" y="114.2" width="7.0" height="6.5" fill="#767676"/>
<rect x="473.5" y="108.0" width="7.0" height="6.5" fill="#777777"/>
<rect x="473.5" y="101.8" width="7.0" height="6.5" fill="#787878"/>
<rect x="473.5" y="95.6" width="7.0" height="6.5" fill="#797979"/>
<rect x="473.5" y="89.4" width="7.0" height="6.5" fill="#797979"/>
<rect x="473.5" y="83.2" width="7.0" height="6.5" fill="#7a7a7a"/>
<rect x="480.3" y="139.0" width="7.0" height="6.5" fill="#6d6d6d"/>
<rect x="480.3" y="132.8" width="7.0" height="6.5" fill="#6d6d6d"/>
<rect x="480.3" y="126.6" width="7.0" height="6.5" fill="#6e6e6e"/>
<rect x="480.3" y="120.4" width="7.0" height="6.5" fill="#6e6e6e"/>
<rect x="480.3" y="114.2" width="7.0" height="6.5" fill="#707070"/>
<rect x="480.3" y="108.0" width="7.0" height="6.5" fill="#717171"/>
<rect x="480.3" y="101.8" width="7.0" height="6.5" fill="#727272"/>
<rect x="480.3" y="95.6" width="7.0" height="6.5" fill="#737373"/>
<rect x="480.3" y="89.4" width="7.0" height="6.5" fill="#747474"/>
<rect x="480.3" y="83.2" width="7.0" height="6.5" fill="#757575"/>
<rect x="487.1" y="139.0" width="7.0" height="6.5" fill="#656565"/>
<rect x="487.1" y="132.8" width="7.0" height="6.5" fill="#666666"/>
<rect x="487.1" y="126.6" width="7.0" height="6.5" fill="#676767"/>
<rect x="487.1" y="120.4" width="7.0" height="6.5" fill="#676767"/>
<rect x="487.1" y="114.2" width="7.0" height="6.5" fill="#696969"/>
<rect x="487.1" y="108.0" width="7.0" height="6.5" fill="#6a6a6a"/>
<rect x="487.1" y="101.8" width="7.0" height="6.5" fill="#6c6c6c"/>
<rect x="487.1" y="95.6" width="7.0" height="6.5" fill="#6d6d6d"/>
<rect x="487.1" y="89.4" width="7.0" height="6.5" fill="#6f6f6f"/>
<rect x="487.1" y="83.2" width="7.0" height="6.5" fill="#707070"/>
<rect x="493.8" y="139.0" width="7.0" height="6.5" fill="#5b5b5b"/>
<rect x="493.8" y="132.8" width="7.0" height="6.5" fill="#5c5c5c"/>
<rect x="493.8" y="126.6" width="7.0" height="6.5" fill="#5d5d5d"/>
<rect x="493.8" y="120.4" width="7.0" height="6.5" fill="#5e5e5e"/>
<rect x="493.8" y="114.2" width="7.0" height="6.5" fill="#606060"/>
<rect x="493.8" y="108.0" width="7.0" height="6.5" fill="#636363"/>
<rect x="493.8" y="101.8" width="7.0" height="6.5" fill="#656565"/>
<rect x="493.8" y="95.6" width="7.0" height="6.5" fill="#676767"/>
<rect x="493.8" y="89.4" width="7.0" height="6.5" fill="#696969"/>
<rect x="493.8" y="83.2" width="7.0" height="6.5" fill="#6b6b6b"/>
<rect x="500.6" y="139.0" width="7.0" height="6.5" fill="#515151"/>
<rect x="500.6" y="132.8" width="7.0" height="6.5" fill="#525252"/>
<rect x="500.6" y="126.6" width="7.0" height="6.5" fill="#545454"/>
<rect x="500.6" y="120.4" width="7.0" height="6.5" fill="#555555"/>
<rect x="500.6" y="114.2" width="7.0" height="6.5" fill="#585858"/>
<rect x="500.6" y="108.0" width="7.0" height="6.5" fill="#5b5b5b"/>
<rect x="500.6" y="101.8" width="7.0" height="6.5" fill="#5e5e5e"/>
<rect x="500.6" y="95.6" width="7.0" height="6.5" fill="#606060"/>
<rect x="500.6" y="89.4" width="7.0" height="6.5" fill="#636363"/>
<rect x="500.6" y="83.2" width="7.0" height="6.5" fill="#656565"/>
<rect x="507.3" y="139.0" width="7.0" height="6.5" fill="#474747"/>
<rect x="507.3" y="132.8" width="7.0" height="6.5" fill="#494949"/>
<rect x="507.3" y="126.6" width="7.0" height="6.5" fill="#4a4a4a"/>
<rect x="507.3" y="120.4" width="7.0" height="6.5" fill="#4c4c4c"/>
<rect x="507.3" y="114.2" width="7.0" height="6.5" fill="#505050"/>
<rect x="507.3" y="108.0" width="7.0" height="6.5" fill="#535353"/>
<rect x="507.3" y="101.8" width="7.0" height="6.5" fill="#575757"/>
<rect x="507.3" y="95.6" width="7.0" height="6.5" fill="#5a5a5a"/>
<rect x="507.3" y="89.4" width="7.0" height="6.5" fill="#5d5d5d"/>
<rect x="507.3" y="83.2" width="7.0" height="6.5" fill="#606060"/>
<rect x="514.1" y="139.0" width="7.0" height="6.5" fill="#484848"/>
<rect x="514.1" y="132.8" width="7.0" height="6.5" fill="#494949"/>
<rect x="514.1" y="126.6" width="7.0" height="6.5" fill="#4a4a4a"/>
<rect x="514.1" y="120.4" width="7.0" height="6.5" fill="#4c4c4c"/>
<rect x="514.1" y="114.2" width="7.0" height="6.5" fill="#4f4f4f"/>
<rect x="514.1" y="108.0" width="7.0" height="6.5" fill="#525252"/>
<rect x="514.1" y="101.8" width="7.0" height="6.5" fill="#555555"/>
<rect x="514.1" y="95.6" width="7.0" height="6.5" fill="#585858"/>
<rect x="514.1" y="89.4" width="7.0" height="6.5" fill="#5b5b5b"/>
<rect x="514.1" y="83.2" width="7.0" height="6.5" fill="#5d5d5d"/>
<rect x="520.9" y="139.0" width="7.0" height="6.5" fill="#4b4b4b"/>
<rect x="520.9" y="132.8" width="7.0" height="6.5" fill="#4c4c4c"/>
<rect x="520.9" y="126.6" width="7.0" height="6.5" fill="#4d4d4d"/>
<rect x="520.9" y="120.4" width="7.0" height="6.5" fill="#4e4e4e"/>
<rect x="520.9" y="114.2" width="7.0" height="6.5" fill="#515151"/>
<rect x="520.9" y="108.0" width="7.0" height="6.5" fill="#535353"/>
<rect x="520.9" y="101.8" width="7.0" height="6.5" fill="#565656"/>
<rect x="520.9" y="95.6" width="7.0" height="6.5" fill="#585858"/>
<rect x="520.9" y="89.4" width="7.0" height="6.5" fill="#5a5a5a"/>
<rect x="520.9" y="83.2" width="7.0" height="6.5" fill="#5c5c5c"/>
<rect x="527.6" y="139.0" width="7.0" height="6.5" fill="#4e4e4e"/>
<rect x="527.6" y="132.8" width="7.0" height="6.5" fill="#4f4f4f"/>
<rect x="527.6" y="126.6" width="7.0" height="6.5" fill="#505050"/>
<rect x="527.6" y="120.4" width="7.0" height="6.5" fill="#515151"/>
<rect x="527.6" y="114.2" width="7.0" height="6.5" fill="#525252"/>
<rect x="527.6" y="108.0" width="7.0" height="6.5" fill="#545454"/>
<rect x="527.6" y="101.8" width="7.0" height="6.5" fill="#565656"/>
<rect x="527.6" y="95.6" width="7.0" height="6.5" fill="#575757"/>
<rect x="527.6" y="89.4" width="7.0" height="6.5" fill="#595959"/>
<rect x="527.6" y="83.2" width="7.0" height="6.5" fill="#5b5b5b"/>
<rect x="446.5" y="139.0" width="1.9" height="6.5" fill="#acacac"/>
<rect x="446.5" y="132.8" width="1.9" height="6.5" fill="#acacac"/>
<rect x="446.5" y="126.6" width="1.9" height="6.5" fill="#acacac"/>
<rect x="446.5" y="120.4" width="1.9" height="6.5" fill="#acacac"/>
<rect x="446.5" y="114.2" width="1.9" height="6.5" fill="#acacac"/>
<rect x="446.5" y="108.0" width="1.9" height="6.5" fill="#acacac"/>
<rect x="446.5" y="101.8" width="1.9" height="6.5" fill="#acacac"/>
<rect x="446.5" y="95.6" width="1.9" height="6.5" fill="#acacac"/>
<rect x="446.5" y="89.4" width="1.9" height="6.5" fill="#acacac"/>
<rect x="446.5" y="83.2" width="1.9" height="6.5" fill="#acacac"/>
<rect x="446.5" y="77.0" width="7.0" height="6.5" fill="#7b7b7b"/>
<rect x="446.5" y="70.8" width="7.0" height="6.5" fill="#717171"/>
<rect x="446.5" y="64.6" width="7.0" height="6.5" fill="#6a6a6a"/>
<rect x="446.5" y="58.4" width="7.0" height="6.5" fill="#646464"/>
<rect x="446.5" y="52.2" width="7.0" height="6.5" fill="#606060"/>
<rect x="446.5" y="46.0" width="7.0" height="6.5" fill="#5b5b5b"/>
<rect x="446.5" y="39.8" width="7.0" height="6.5" fill="#575757"/>
<rect x="446.5" y="33.6" width="7.0" height="6.5" fill="#555555"/>
<rect x="446.5" y="27.4" width="7.0" height="6.5" fill="#555555"/>
<rect x="446.5" y="21.2" width="7.0" height="6.5" fill="#545454"/>
<rect x="453.3" y="77.0" width="7.0" height="6.5" fill="#7c7c7c"/>
<rect x="453.3" y="70.8" width="7.0" height="6.5" fill="#727272"/>
<rect x="453.3" y="64.6" width="7.0" height="6.5" fill="#6b6b6b"/>
<rect x="453.3" y="58.4" width="7.0" height="6.5" fill="#656565"/>
<rect x="453.3" y="52.2" width="7.0" height="6.5" fill="#606060"/>
<rect x="453.3" y="46.0" width="7.0" height="6.5" fill="#5c5c5c"/>
<rect x="453.3" y="39.8" width="7.0" height="6.5" fill="#575757"/>
<rect x="453.3" y="33.6" width="7.0" height="6.5" fill="#555555"/>
<rect x="453.3" y="27.4" width="7.0" height="6.5" fill="#555555"/>
<rect x="453.3" y="21.2" width="7.0" height="6.5" fill="#545454"/>
<rect x="460.0" y="77.0" width="7.0" height="6.5" fill="#7d7d7d"/>
<rect x="460.0" y="70.8" width="7.0" height="6.5" fill="#737373"/>
<rect x="460.0" y="64.6" width="7.0" height="6.5" fill="#6c6c6c"/>
<rect x="460.0" y="58.4" width="7.0" height="6.5" fill="#666666"/>
<rect x="460.0" y="52.2" width="7.0" height="6.5" fill="#616161"/>
<rect x="460.0" y="46.0" width="7.0" height="6.5" fill="#5c5c5c"/>
<rect x="460.0" y="39.8" width="7.0" height="6.5" fill="#575757"/>
<rect x="460.0" y="33.6" width="7.0" height="6.5" fill="#555555"/>
<rect x="460.0" y="27.4" width="7.0" height="6.5" fill="#555555"/>
<rect x="460.0" y="21.2" width="7.0" height="6.5" fill="#545454"/>
<rect x="466.8" y="77.0" width="7.0" height="6.5" fill="#7e7e7e"/>
<rect x="466.8" y="70.8" width="7.0" height="6.5" fill="#747474"/>
<rect x="466.8" y="64.6" width="7.0" height="6.5" fill="#6d6d6d"/>
<rect x="466.8" y="58.4" width="7.0" height="6.5" fill="#676767"/>
<rect x="466.8" y="52.2" width="7.0" height="6.5" fill="#626262"/>
<rect x="466.8" y="46.0" width="7.0" height="6.5" fill="#5d5d5d"/>
<rect x="466.8" y="39.8" width="7.0" height="6.5" fill="#575757"/>
<rect x="466.8" y="33.6" width="7.0" height="6.5" fill="#565656"/>
<rect x="466.8" y="27.4" width="7.0" height="6.5" fill="#555555"/>
<rect x="466.8" y="21.2" width="7.0" height="6.5" fill="#545454"/>
<rect x="473.5" y="77.0" width="7.0" height="6.5" fill="#7f7f7f"/>
<rect x="473.5" y="70.8" width="7.0" height="6.5" fill="#757575"/>
<rect x="473.5" y="64.6" width="7.0" height="6.5" fill="#6e6e6e"/>
<rect x="473.5" y="58.4" width="7.0" height="6.5" fill="#686868"/>
<rect x="473.5" y="52.2" width="7.0" height="6.5" fill="#646464"/>
<rect x="473.5" y="46.0" width="7.0" height="6.5" fill="#5f5f5f"/>
<rect x="473.5" y="39.8" width="7.0" height="6.5" fill="#5a5a5a"/>
<rect x="473.5" y="33.6" width="7.0" height="6.5" fill="#595959"/>
<rect x="473.5" y="27.4" width="7.0" height="6.5" fill="#585858"/>
<rect x="473.5" y="21.2" width="7.0" height="6.5" fill="#575757"/>
<rect x="480.3" y="77.0" width="7.0" height="6.5" fill="#818181"/>
<rect x="480.3" y="70.8" width="7.0" height="6.5" fill="#767676"/>
<rect x="480.3" y="64.6" width="7.0" height="6.5" fill="#707070"/>
<rect x="480.3" y="58.4" width="7.0" height="6.5" fill="#6a6a6a"/>
<rect x="480.3" y="52.2" width="7.0" height="6.5" fill="#666666"/>
<rect x="480.3" y="46.0" width="7.0" height="6.5" fill="#626262"/>
<rect x="480.3" y="39.8" width="7.0" height="6.5" fill="#5d5d5d"/>
<rect x="480.3" y="33.6" width="7.0" height="6.5" fill="#5c5c5c"/>
<rect x="480.3" y="27.4" width="7.0" height="6.5" fill="#5a5a5a"/>
<rect x="480.3" y="21.2" width="7.0" height="6.5" fill="#595959"/>
<rect x="487.1" y="77.0" width="7.0" height="6.5" fill="#828282"/>
<rect x="487.1" y="70.8" width="7.0" height="6.5" fill="#787878"/>
<rect x="487.1" y="64.6" width="7.0" height="6.5" fill="#717171"/>
<rect x="487.1" y="58.4" width="7.0" height="6.5" fill="#6c6c6c"/>
<rect x="487.1" y="52.2" width="7.0" height="6.5" fill="#686868"/>
<rect x="487.1" y="46.0" width="7.0" height="6.5" fill="#646464"/>
<rect x="487.1" y="39.8" width="7.0" height="6.5" fill="#606060"/>
<rect x="487.1" y="33.6" width="7.0" height="6.5" fill="#5f5f5f"/>
<rect x="487.1" y="27.4" width="7.0" height="6.5" fill="#5d5d5d"/>
<rect x="487.1" y="21.2" width="7.0" height="6.5" fill="#5c5c5c"/>
<rect x="493.8" y="77.0" width="7.0" height="6.5" fill="#848484"/>
<rect x="493.8" y="70.8" width="7.0" height="6.5" fill="#7a7a7a"/>
<rect x="493.8" y="64.6" width="7.0" height="6.5" fill="#737373"/>
<rect x="493.8" y="58.4" width="7.0" height="6.5" fill="#6e6e6e"/>
<rect x="493.8" y="52.2" width="7.0" height="6.5" fill="#6a6a6a"/>
<rect x="493.8" y="46.0" width="7.0" height="6.5" fill="#666666"/>
<rect x="493.8" y="39.8" width="7.0" height="6.5" fill="#636363"/>
<rect x="493.8" y="33.6" width="7.0" height="6.5" fill="#616161"/>
<rect x="493.8" y="27.4" width="7.0" height="6.5" fill="#606060"/>
<rect x="493.8" y="21.2" width="7.0" height="6.5" fill="#5f5f5f"/>
<rect x="500.6" y="77.0" width="7.0" height="6.5" fill="#868686"/>
<rect x="500.6" y="70.8" width="7.0" height="6.5" fill="#7c7c7c"/>
<rect x="500.6" y="64.6" width="7.0" height="6.5" fill="#757575"/>
<rect x="500.6" y="58.4" width="7.0" height="6.5" fill="#707070"/>
<rect x="500.6" y="52.2" width="7.0" height="6.5" fill="#6c6c6c"/>
<rect x="500.6" y="46.0" width="7.0" height="6.5" fill="#696969"/>
<rect x="500.6" y="39.8" width="7.0" height="6.5" fill="#656565"/>
<rect x="500.6" y="33.6" width="7.0" height="6.5" fill="#646464"/>
<rect x="500.6" y="27.4" width="7.0" height="6.5" fill="#636363"/>
<rect x="500.6" y="21.2" width="7.0" height="6.5" fill="#626262"/>
<rect x="507.3" y="77.0" width="7.0" height="6.5" fill="#878787"/>
<rect x="507.3" y="70.8" width="7.0" height="6.5" fill="#7d7d7d"/>
<rect x="507.3" y="64.6" width="7.0" height="6.5" fill="#777777"/>
<rect x="507.3" y="58.4" width="7.0" height="6.5" fill="#737373"/>
<rect x="507.3" y="52.2" width="7.0" height="6.5" fill="#6f6f6f"/>
<rect x="507.3" y="46.0" width="7.0" height="6.5" fill="#6b6b6b"/>
<rect x="507.3" y="39.8" width="7.0" height="6.5" fill="#676767"/>
<rect x="507.3" y="33.6" width="7.0" height="6.5" fill="#666666"/>
<rect x="507.3" y="27.4" width="7.0" height="6.5" fill="#656565"/>
<rect x="507.3" y="21.2" width="7.0" height="6.5" fill="#646464"/>
<rect x="514.1" y="77.0" width="7.0" height="6.5" fill="#8a8a8a"/>
<rect x="514.1" y="70.8" width="7.0" height="6.5" fill="#808080"/>
<rect x="514.1" y="64.6" width="7.0" height="6.5" fill="#7a7a7a"/>
<rect x="514.1" y="58.4" width="7.0" height="6.5" fill="#757575"/>
<rect x="514.1" y="52.2" width="7.0" height="6.5" fill="#717171"/>
<rect x="514.1" y="46.0" width="7.0" height="6.5" fill="#6d6d6d"/>
<rect x="514.1" y="39.8" width="7.0" height="6.5" fill="#696969"/>
<rect x="514.1" y="33.6" width="7.0" height="6.5" fill="#686868"/>
<rect x="514.1" y="27.4" width="7.0" height="6.5" fill="#676767"/>
<rect x="514.1" y="21.2" width="7.0" height="6.5" fill="#666666"/>
<rect x="520.9" y="77.0" width="7.0" height="6.5" fill="#8d8d8d"/>
<rect x="520.9" y="70.8" width="7.0" height="6.5" fill="#828282"/>
<rect x="520.9" y="64.6" width="7.0" height="6.5" fill="#7c7c7c"/>
<rect x="520.9" y="58.4" width="7.0" height="6.5" fill="#777777"/>
<rect x="520.9" y="52.2" width="7.0" height="6.5" fill="#737373"/>
<rect x="520.9" y="46.0" width="7.0" height="6.5" fill="#6f6f6f"/>
<rect x="520.9" y="39.8" width="7.0" height="6.5" fill="#6b6b6b"/>
<rect x="520.9" y="33.6" width="7.0" height="6.5" fill="#696969"/>
<rect x="520.9" y="27.4" width="7.0" height="6.5" fill="#696969"/>
<rect x="520.9" y="21.2" width="7.0" height="6.5" fill="#686868"/>
<rect x="527.6" y="77.0" width="7.0" height="6.5" fill="#8f8f8f"/>
<rect x="527.6" y="70.8" width="7.0" height="6.5" fill="#858585"/>
<rect x="527.6" y="64.6" width="7.0" height="6.5" fill="#7e7e7e"/>
<rect x="527.6" y="58.4" width="7.0" height="6.5" fill="#797979"/>
<rect x="527.6" y="52.2" width="7.0" height="6.5" fill="#757575"/>
<rect x="527.6" y="46.0" width="7.0" height="6.5" fill="#717171"/>
<rect x="527.6" y="39.8" width="7.0" height="6.5" fill="#6c6c6c"/>
<rect x="527.6" y="33.6" width="7.0" height="6.5" fill="#6b6b6b"/>
<rect x="527.6" y="27.4" width="7.0" height="6.5" fill="#6a6a6a"/>
<rect x="527.6" y="21.2" width="7.0" height="6.5" fill="#696969"/>
<rect x="532.7" y="77.0" width="1.9" height="6.5" fill="#b2b2b2"/>
<rect x="532.7" y="70.8" width="1.9" height="6.5" fill="#a7a7a7"/>
<rect x="532.7" y="64.6" width="1.9" height="6.5" fill="#a1a1a1"/>
<rect x="532.7" y="58.4" width="1.9" height="6.5" fill="#9c9c9c"/>
<rect x="532.7" y="52.2" width="1.9" height="6.5" fill="#989898"/>
<rect x="532.7" y="46.0" width="1.9" height="6.5" fill="#939393"/>
<rect x="532.7" y="39.8" width="1.9" height="6.5" fill="#8f8f8f"/>
<rect x="532.7" y="33.6" width="1.9" height="6.5" fill="#8e8e8e"/>
<rect x="532.7" y="27.4" width="1.9" height="6.5" fill="#8d8d8d"/>
<rect x="532.7" y="21.2" width="1.9" height="6.5" fill="#8c8c8c"/>
<rect x="446.5" y="81.6" width="7.0" height="1.8" fill="#aeaeae"/>
<rect x="453.3" y="81.6" width="7.0" height="1.8" fill="#adadad"/>
<rect x="460.0" y="81.6" width="7.0" height="1.8" fill="#ababab"/>
<rect x="466.8" y="81.6" width="7.0" height="1.8" fill="#a8a8a8"/>
<rect x="473.5" y="81.6" width="7.0" height="1.8" fill="#a5a5a5"/>
<rect x="480.3" y="81.6" width="7.0" height="1.8" fill="#a4a4a4"/>
<rect x="487.1" y="81.6" width="7.0" height="1.8" fill="#a4a4a4"/>
<rect x="493.8" y="81.6" width="7.0" height="1.8" fill="#a7a7a7"/>
<rect x="500.6" y="81.6" width="7.0" height="1.8" fill="#acacac"/>
<rect x="507.3" y="81.6" width="7.0" height="1.8" fill="#b2b2b2"/>
<rect x="514.1" y="81.6" width="7.0" height="1.8" fill="#b8b8b8"/>
<rect x="520.9" y="81.6" width="7.0" height="1.8" fill="#bfbfbf"/>
<rect x="527.6" y="81.6" width="7.0" height="1.8" fill="#c4c4c4"/>
<rect x="534.4" y="139.0" width="7.0" height="6.5" fill="#848484"/>
<rect x="534.4" y="132.8" width="7.0" height="6.5" fill="#848484"/>
<rect x="534.4" y="126.6" width="7.0" height="6.5" fill="#848484"/>
<rect x="534.4" y="120.4" width="7.0" height="6.5" fill="#848484"/>
<rect x="534.4" y="114.2" width="7.0" height="6.5" fill="#858585"/>
<rect x="534.4" y="108.0" width="7.0" height="6.5" fill="#858585"/>
<rect x="534.4" y="101.8" width="7.0" height="6.5" fill="#868686"/>
<rect x="534.4" y="95.6" width="7.0" height="6.5" fill="#878787"/>
<rect x="534.4" y="89.4" width="7.0" height="6.5" fill="#888888"/>
<rect x="534.4" y="83.2" width="7.0" height="6.5" fill="#888888"/>
<rect x="541.1" y="139.0" width="7.0" height="6.5" fill="#818181"/>
<rect x="541.1" y="132.8" width="7.0" height="6.5" fill="#818181"/>
<rect x="541.1" y="126.6" width="7.0" height="6.5" fill="#818181"/>
<rect x="541.1" y="120.4" width="7.0" height="6.5" fill="#828282"/>
<rect x="541.1" y="114.2" width="7.0" height="6.5" fill="#828282"/>
<rect x="541.1" y="108.0" width="7.0" height="6.5" fill="#838383"/>
<rect x="541.1" y="101.8" width="7.0" height="6.5" fill="#848484"/>
<rect x="541.1" y="95.6" width="7.0" height="6.5" fill="#858585"/>
<rect x="541.1" y="89.4" width="7.0" height="6.5" fill="#858585"/>
<rect x="541.1" y="83.2" width="7.0" height="6.5" fill="#868686"/>
<rect x="547.9" y="139.0" width="7.0" height="6.5" fill="#7e7e7e"/>
<rect x="547.9" y="132.8" width="7.0" height="6.5" fill="#7e7e7e"/>
<rect x="547.9" y="126.6" width="7.0" height="6.5" fill="#7f7f7f"/>
<rect x="547.9" y="120.4" width="7.0" height="6.5" fill="#7f7f7f"/>
<rect x="547.9" y="114.2" width="7.0" height="6.5" fill="#808080"/>
<rect x="547.9" y="108.0" width="7.0" height="6.5" fill="#818181"/>
<rect x="547.9" y="101.8" width="7.0" height="6.5" fill="#818181"/>
<rect x="547.9" y="95.6" width="7.0" height="6.5" fill="#828282"/>
<rect x="547.9" y="89.4" width="7.0" height="6.5" fill="#838383"/>
<rect x="547.9" y="83.2" width="7.0" height="6.5" fill="#848484"/>
<rect x="554.7" y="139.0" width="7.0" height="6.5" fill="#7a7a7a"/>
<rect x="554.7" y="132.8" width="7.0" height="6.5" fill="#7b7b7b"/>
<rect x="554.7" y="126.6" width="7.0" height="6.5" fill="#7c7c7c"/>
<rect x="554.7" y="120.4" width="7.0" height="6.5" fill="#7c7c7c"/>
<rect x="554.7" y="114.2" width="7.0" height="6.5" fill="#7d7d7d"/>
<rect x="554.7" y="108.0" width="7.0" height="6.5" fill="#7e7e7e"/>
<rect x="554.7" y="101.8" width="7.0" height="6.5" fill="#7f7f7f"/>
<rect x="554.7" y="95.6" width="7.0" height="6.5" fill="#7f7f7f"/>
<rect x="554.7" y="89.4" width="7.0" height="6.5" fill="#808080"/>
<rect x="554.7" y="83.2" width="7.0" height="6.5" fill="#818181"/>
<rect x="561.4" y="139.0" width="7.0" height="6.5" fill="#757575"/>
<rect x="561.4" y="132.8" width="7.0" height="6.5" fill="#757575"/>
<rect x="561.4" y="126.6" width="7.0" height="6.5" fill="#767676"/>
<rect x="561.4" y="120.4" width="7.0" height="6.5" fill="#767676"/>
<rect x="561.4" y="114.2" width="7.0" height="6.5" fill="#777777"/>
<rect x="561.4" y="108.0" width="7.0" height="6.5" fill="#787878"/>
<rect x="561.4" y="101.8" width="7.0" height="6.5" fill="#797979"/>
<rect x="561.4" y="95.6" width="7.0" height="6.5" fill="#7a7a7a"/>
<rect x="561.4" y="89.4" width="7.0" height="6.5" fill="#7b7b7b"/>
<rect x="561.4" y="83.2" width="7.0" height="6.5" fill="#7c7c7c"/>
<rect x="568.2" y="139.0" width="7.0" height="6.5" fill="#6f6f6f"/>
<rect x="568.2" y="132.8" width="7.0" height="6.5" fill="#6f6f6f"/>
<rect x="568.2" y="126.6" width="7.0" height="6.5" fill="#707070"/>
<rect x="568.2" y="120.4" width="7.0" height="6.5" fill="#707070"/>
<rect x="568.2" y="114.2" width="7.0" height="6.5" fill="#717171"/>
<rect x="568.2" y="108.0" width="7.0" height="6.5" fill="#727272"/>
<rect x="568.2" y="101.8" width="7.0" height="6.5" fill="#747474"/>
<rect x="568.2" y="95.6" width="7.0" height="6.5" fill="#757575"/>
<rect x="568.2" y="89.4" width="7.0" height="6.5" fill="#767676"/>
<rect x="568.2" y="83.2" width="7.0" height="6.5" fill="#787878"/>
<rect x="574.9" y="139.0" width="7.0" height="6.5" fill="#6a6a6a"/>
<rect x="574.9" y="132.8" width="7.0" height="6.5" fill="#6a6a6a"/>
<rect x="574.9" y="126.6" width="7.0" height="6.5" fill="#6a6a6a"/>
<rect x="574.9" y="120.4" width="7.0" height="6.5" fill="#6a6a6a"/>
<rect x="574.9" y="114.2" width="7.0" height="6.5" fill="#6b6b6b"/>
<rect x="574.9" y="108.0" width="7.0" height="6.5" fill="#6d6d6d"/>
<rect x="574.9" y="101.8" width="7.0" height="6.5" fill="#6e6e6e"/>
<rect x="574.9" y="95.6" width="7.0" height="6.5" fill="#707070"/>
<rect x="574.9" y="89.4" width="7.0" height="6.5" fill="#717171"/>
<rect x="574.9" y="83.2" width="7.0" height="6.5" fill="#737373"/>
<rect x="581.7" y="139.0" width="7.0" height="6.5" fill="#646464"/>
<rect x="581.7" y="132.8" width="7.0" height="6.5" fill="#646464"/>
<rect x="581.7" y="126.6" width="7.0" height="6.5" fill="#646464"/>
<rect x="581.7" y="120.4" width="7.0" height="6.5" fill="#646464"/>
<rect x="581.7" y="114.2" width="7.0" height="6.5" fill="#666666"/>
<rect x="581.7" y="108.0" width="7.0" height="6.5" fill="#676767"/>
<rect x="581.7" y="101.8" width="7.0" height="6.5" fill="#686868"/>
<rect x="581.7" y="95.6" width="7.0" height="6.5" fill="#6a6a6a"/>
<rect x="581.7" y="89.4" width="7.0" height="6.5" fill="#6c6c6c"/>
<rect x="581.7" y="83.2" width="7.0" height="6.5" fill="#6d6d6d"/>
<rect x="588.5" y="139.0" width="7.0" height="6.5" fill="#5f5f5f"/>
<rect x="588.5" y="132.8" width="7.0" height="6.5" fill="#5f5f5f"/>
<rect x="588.5" y="126.6" width="7.0" height="6.5" fill="#5f5f5f"/>
<rect x="588.5" y="120.4" width="7.0" height="6.5" fill="#5f5f5f"/>
<rect x="588.5" y="114.2" width="7.0" height="6.5" fill="#606060"/>
<rect x="588.5" y="108.0" width="7.0" height="6.5" fill="#616161"/>
<rect x="588.5" y="101.8" width="7.0" height="6.5" fill="#626262"/>
<rect x="588.5" y="95.6" width="7.0" height="6.5" fill="#646464"/>
<rect x="588.5" y="89.4" width="7.0" height="6.5" fill="#666666"/>
<rect x="588.5" y="83.2" width="7.0" height="6.5" fill="#686868"/>
<rect x="595.2" y="139.0" width="7.0" height="6.5" fill="#595959"/>
<rect x="595.2" y="132.8" width="7.0" height="6.5" fill="#595959"/>
<rect x="595.2" y="126.6" width="7.0" height="6.5" fill="#595959"/>
<rect x="595.2" y="120.4" width="7.0" height="6.5" fill="#5a5a5a"/>
<rect x="595.2" y="114.2" width="7.0" height="6.5" fill="#5a5a5a"/>
<rect x="595.2" y="108.0" width="7.0" height="6.5" fill="#5b5b5b"/>
<rect x="595.2" y="101.8" width="7.0" height="6.5" fill="#5c5c5c"/>
<rect x="595.2" y="95.6" width="7.0" height="6.5" fill="#5e5e5e"/>
<rect x="595.2" y="89.4" width="7.0" height="6.5" fill="#606060"/>
<rect x="595.2" y="83.2" width="7.0" height="6.5" fill="#626262"/>
<rect x="602.0" y="139.0" width="7.0" height="6.5" fill="#595959"/>
<rect x="602.0" y="132.8" width="7.0" height="6.5" fill="#595959"/>
<rect x="602.0" y="126.6" width="7.0" height="6.5" fill="#595959"/>
<rect x="602.0" y="120.4" width="7.0" height="6.5" fill="#595959"/>
<rect x="602.0" y="114.2" width="7.0" height="6.5" fill="#595959"/>
<rect x="602.0" y="108.0" width="7.0" height="6.5" fill="#5a5a5a"/>
<rect x="602.0" y="101.8" width="7.0" height="6.5" fill="#5b5b5b"/>
<rect x="602.0" y="95.6" width="7.0" height="6.5" fill="#5d5d5d"/>
<rect x="602.0" y="89.4" width="7.0" height="6.5" fill="#5f5f5f"/>
<rect x="602.0" y="83.2" width="7.0" height="6.5" fill="#616161"/>
<rect x="608.7" y="139.0" width="7.0" height="6.5" fill="#5a5a5a"/>
<rect x="608.7" y="132.8" width="7.0" height="6.5" fill="#595959"/>
<rect x="608.7" y="126.6" width="7.0" height="6.5" fill="#595959"/>
<rect x="608.7" y="120.4" width="7.0" height="6.5" fill="#595959"/>
<rect x="608.7" y="114.2" width="7.0" height="6.5" fill="#595959"/>
<rect x="608.7" y="108.0" width="7.0" height="6.5" fill="#5a5a5a"/>
<rect x="608.7" y="101.8" width="7.0" height="6.5" fill="#5b5b5b"/>
<rect x="608.7" y="95.6" width="7.0" height="6.5" fill="#5c5c5c"/>
<rect x="608.7" y="89.4" width="7.0" height="6.5" fill="#5e5e5e"/>
<rect x="608.7" y="83.2" width="7.0" height="6.5" fill="#606060"/>
<rect x="615.5" y="139.0" width="7.0" height="6.5" fill="#5a5a5a"/>
<rect x="615.5" y="132.8" width="7.0" height="6.5" fill="#5a5a5a"/>
<rect x="615.5" y="126.6" width="7.0" height="6.5" fill="#595959"/>
<rect x="615.5" y="120.4" width="7.0" height="6.5" fill="#595959"/>
<rect x="615.5" y="114.2" width="7.0" height="6.5" fill="#595959"/>
<rect x="615.5" y="108.0" width="7.0" height="6.5" fill="#5a5a5a"/>
<rect x="615.5" y="101.8" width="7.0" height="6.5" fill="#5b5b5b"/>
<rect x="615.5" y="95.6" width="7.0" height="6.5" fill="#5c5c5c"/>
<rect x="615.5" y="89.4" width="7.0" height="6.5" fill="#5e5e5e"/>
<rect x="615.5" y="83.2" width="7.0" height="6.5" fill="#5f5f5f"/>
<rect x="534.4" y="139.0" width="1.9" height="6.5" fill="#a7a7a7"/>
<rect x="534.4" y="132.8" width="1.9" height="6.5" fill="#a7a7a7"/>
<rect x="534.4" y="126.6" width="1.9" height="6.5" fill="#a7a7a7"/>
<rect x="534.4" y="120.4" width="1.9" height="6.5" fill="#a7a7a7"/>
<rect x="534.4" y="114.2" width="1.9" height="6.5" fill="#a8a8a8"/>
<rect x="534.4" y="108.0" width="1.9" height="6.5" fill="#a9a9a9"/>
<rect x="534.4" y="101.8" width="1.9" height="6.5" fill="#a9a9a9"/>
<rect x="534.4" y="95.6" width="1.9" height="6.5" fill="#aaaaaa"/>
<rect x="534.4" y="89.4" width="1.9" height="6.5" fill="#ababab"/>
<rect x="534.4" y="83.2" width="1.9" height="6.5" fill="#acacac"/>
<rect x="534.4" y="83.2" width="7.0" height="1.8" fill="#929292"/>
<rect x="541.1" y="83.2" width="7.0" height="1.8" fill="#8f8f8f"/>
<rect x="547.9" y="83.2" width="7.0" height="1.8" fill="#8c8c8c"/>
<rect x="554.7" y="83.2" width="7.0" height="1.8" fill="#888888"/>
<rect x="561.4" y="83.2" width="7.0" height="1.8" fill="#838383"/>
<rect x="568.2" y="83.2" width="7.0" height="1.8" fill="#7e7e7e"/>
<rect x="574.9" y="83.2" width="7.0" height="1.8" fill="#797979"/>
<rect x="581.7" y="83.2" width="7.0" height="1.8" fill="#747474"/>
<rect x="588.5" y="83.2" width="7.0" height="1.8" fill="#6f6f6f"/>
<rect x="595.2" y="83.2" width="7.0" height="1.8" fill="#6a6a6a"/>
<rect x="602.0" y="83.2" width="7.0" height="1.8" fill="#6a6a6a"/>
<rect x="608.7" y="83.2" width="7.0" height="1.8" fill="#6a6a6a"/>
<rect x="615.5" y="83.2" width="7.0" height="1.8" fill="#6a6a6a"/>
<rect x="534.4" y="77.0" width="7.0" height="6.5" fill="#535353"/>
<rect x="534.4" y="70.8" width="7.0" height="6.5" fill="#4d4d4d"/>
<rect x="534.4" y="64.6" width="7.0" height="6.5" fill="#474747"/>
<rect x="534.4" y="58.4" width="7.0" height="6.5" fill="#424242"/>
<rect x="534.4" y="52.2" width="7.0" height="6.5" fill="#404040"/>
<rect x="534.4" y="46.0" width="7.0" height="6.5" fill="#3d3d3d"/>
<rect x="534.4" y="39.8" width="7.0" height="6.5" fill="#3b3b3b"/>
<rect x="534.4" y="33.6" width="7.0" height="6.5" fill="#3b3b3b"/>
<rect x="534.4" y="27.4" width="7.0" height="6.5" fill="#3b3b3b"/>
<rect x="534.4" y="21.2" width="7.0" height="6.5" fill="#3b3b3b"/>
<rect x="541.1" y="77.0" width="7.0" height="6.5" fill="#535353"/>
<rect x="541.1" y="70.8" width="7.0" height="6.5" fill="#4d4d4d"/>
<rect x="541.1" y="64.6" width="7.0" height="6.5" fill="#474747"/>
<rect x="541.1" y="58.4" width="7.0" height="6.5" fill="#424242"/>
<rect x="541.1" y="52.2" width="7.0" height="6.5" fill="#3f3f3f"/>
<rect x="541.1" y="46.0" width="7.0" height="6.5" fill="#3d3d3d"/>
<rect x="541.1" y="39.8" width="7.0" height="6.5" fill="#3a3a3a"/>
<rect x="541.1" y="33.6" width="7.0" height="6.5" fill="#3a3a3a"/>
<rect x="541.1" y="27.4" width="7.0" height="6.5" fill="#3a3a3a"/>
<rect x="541.1" y="21.2" width="7.0" height="6.5" fill="#3a3a3a"/>
<rect x="547.9" y="77.0" width="7.0" height="6.5" fill="#535353"/>
<rect x="547.9" y="70.8" width="7.0" height="6.5" fill="#4d4d4d"/>
<rect x="547.9" y="64.6" width="7.0" height="6.5" fill="#474747"/>
<rect x="547.9" y="58.4" width="7.0" height="6.5" fill="#424242"/>
<rect x="547.9" y="52.2" width="7.0" height="6.5" fill="#3f3f3f"/>
<rect x="547.9" y="46.0" width="7.0" height="6.5" fill="#3c3c3c"/>
<rect x="547.9" y="39.8" width="7.0" height="6.5" fill="#3a3a3a"/>
<rect x="547.9" y="33.6" width="7.0" height="6.5" fill="#393939"/>
<rect x="547.9" y="27.4" width="7.0" height="6.5" fill="#393939"/>
<rect x="547.9" y="21.2" width="7.0" height="6.5" fill="#393939"/>
<rect x="554.7" y="77.0" width="7.0" height="6.5" fill="#545454"/>
<rect x="554.7" y="70.8" width="7.0" height="6.5" fill="#4e4e4e"/>
<rect x="554.7" y="64.6" width="7.0" height="6.5" fill="#484848"/>
<rect x="554.7" y="58.4" width="7.0" height="6.5" fill="#424242"/>
<rect x="554.7" y="52.2" width="7.0" height="6.5" fill="#3f3f3f"/>
<rect x="554.7" y="46.0" width="7.0" height="6.5" fill="#3c3c3c"/>
<rect x="554.7" y="39.8" width="7.0" height="6.5" fill="#393939"/>
<rect x="554.7" y="33.6" width="7.0" height="6.5" fill="#393939"/>
<rect x="554.7" y="27.4" width="7.0" height="6.5" fill="#393939"/>
<rect x="554.7" y="21.2" width="7.0" height="6.5" fill="#393939"/>
<rect x="561.4" y="77.0" width="7.0" height="6.5" fill="#555555"/>
<rect x="561.4" y="70.8" width="7.0" height="6.5" fill="#505050"/>
<rect x="561.4" y="64.6" width="7.0" height="6.5" fill="#4a4a4a"/>
<rect x="561.4" y="58.4" width="7.0" height="6.5" fill="#454545"/>
<rect x="561.4" y="52.2" width="7.0" height="6.5" fill="#424242"/>
<rect x="561.4" y="46.0" width="7.0" height="6.5" fill="#3f3f3f"/>
<rect x="561.4" y="39.8" width="7.0" height="6.5" fill="#3c3c3c"/>
<rect x="561.4" y="33.6" width="7.0" height="6.5" fill="#3b3b3b"/>
<rect x="561.4" y="27.4" width="7.0" height="6.5" fill="#3b3b3b"/>
<rect x="561.4" y="21.2" width="7.0" height="6.5" fill="#3a3a3a"/>
<rect x="568.2" y="77.0" width="7.0" height="6.5" fill="#575757"/>
<rect x="568.2" y="70.8" width="7.0" height="6.5" fill="#525252"/>
<rect x="568.2" y="64.6" width="7.0" height="6.5" fill="#4d4d4d"/>
<rect x="568.2" y="58.4" width="7.0" height="6.5" fill="#484848"/>
<rect x="568.2" y="52.2" width="7.0" height="6.5" fill="#454545"/>
<rect x="568.2" y="46.0" width="7.0" height="6.5" fill="#424242"/>
<rect x="568.2" y="39.8" width="7.0" height="6.5" fill="#3e3e3e"/>
<rect x="568.2" y="33.6" width="7.0" height="6.5" fill="#3d3d3d"/>
<rect x="568.2" y="27.4" width="7.0" height="6.5" fill="#3d3d3d"/>
<rect x="568.2" y="21.2" width="7.0" height="6.5" fill="#3c3c3c"/>
<rect x="574.9" y="77.0" width="7.0" height="6.5" fill="#595959"/>
<rect x="574.9" y="70.8" width="7.0" height="6.5" fill="#545454"/>
<rect x="574.9" y="64.6" width="7.0" height="6.5" fill="#505050"/>
<rect x="574.9" y="58.4" width="7.0" height="6.5" fill="#4c4c4c"/>
<rect x="574.9" y="52.2" width="7.0" height="6.5" fill="#484848"/>
<rect x="574.9" y="46.0" width="7.0" height="6.5" fill="#444444"/>
<rect x="574.9" y="39.8" width="7.0" height="6.5" fill="#414141"/>
<rect x="574.9" y="33.6" width="7.0" height="6.5" fill="#3f3f3f"/>
<rect x="574.9" y="27.4" width="7.0" height="6.5" fill="#3e3e3e"/>
<rect x="574.9" y="21.2" width="7.0" height="6.5" fill="#3e3e3e"/>
<rect x="581.7" y="77.0" width="7.0" height="6.5" fill="#5b5b5b"/>
<rect x="581.7" y="70.8" width="7.0" height="6.5" fill="#575757"/>
<rect x="581.7" y="64.6" width="7.0" height="6.5" fill="#535353"/>
<rect x="581.7" y="58.4" width="7.0" height="6.5" fill="#4f4f4f"/>
<rect x="581.7" y="52.2" width="7.0" height="6.5" fill="#4c4c4c"/>
<rect x="581.7" y="46.0" width="7.0" height="6.5" fill="#494949"/>
<rect x="581.7" y="39.8" width="7.0" height="6.5" fill="#474747"/>
<rect x="581.7" y="33.6" width="7.0" height="6.5" fill="#454545"/>
<rect x="581.7" y="27.4" width="7.0" height="6.5" fill="#454545"/>
<rect x="581.7" y="21.2" width="7.0" height="6.5" fill="#444444"/>
<rect x="588.5" y="77.0" width="7.0" height="6.5" fill="#5e5e5e"/>
<rect x="588.5" y="70.8" width="7.0" height="6.5" fill="#5a5a5a"/>
<rect x="588.5" y="64.6" width="7.0" height="6.5" fill="#565656"/>
<rect x="588.5" y="58.4" width="7.0" height="6.5" fill="#525252"/>
<rect x="588.5" y="52.2" width="7.0" height="6.5" fill="#505050"/>
<rect x="588.5" y="46.0" width="7.0" height="6.5" fill="#4e4e4e"/>
<rect x="588.5" y="39.8" width="7.0" height="6.5" fill="#4d4d4d"/>
<rect x="588.5" y="33.6" width="7.0" height="6.5" fill="#4c4c4c"/>
<rect x="588.5" y="27.4" width="7.0" height="6.5" fill="#4b4b4b"/>
<rect x="588.5" y="21.2" width="7.0" height="6.5" fill="#4a4a4a"/>
<rect x="595.2" y="77.0" width="7.0" height="6.5" fill="#606060"/>
<rect x="595.2" y="70.8" width="7.0" height="6.5" fill="#5c5c5c"/>
<rect x="595.2" y="64.6" width="7.0" height="6.5" fill="#595959"/>
<rect x="595.2" y="58.4" width="7.0" height="6.5" fill="#555555"/>
<rect x="595.2" y="52.2" width="7.0" height="6.5" fill="#545454"/>
<rect x="595.2" y="46.0" width="7.0" height="6.5" fill="#535353"/>
<rect x="595.2" y="39.8" width="7.0" height="6.5" fill="#535353"/>
<rect x="595.2" y="33.6" width="7.0" height="6.5" fill="#525252"/>
<rect x="595.2" y="27.4" width="7.0" height="6.5" fill="#515151"/>
<rect x="595.2" y="21.2" width="7.0" height="6.5" fill="#505050"/>
<rect x="602.0" y="77.0" width="7.0" height="6.5" fill="#626262"/>
<rect x="602.0" y="70.8" width="7.0" height="6.5" fill="#5f5f5f"/>
<rect x="602.0" y="64.6" width="7.0" height="6.5" fill="#5b5b5b"/>
<rect x="602.0" y="58.4" width="7.0" height="6.5" fill="#585858"/>
<rect x="602.0" y="52.2" width="7.0" height="6.5" fill="#575757"/>
<rect x="602.0" y="46.0" width="7.0" height="6.5" fill="#565656"/>
<rect x="602.0" y="39.8" width="7.0" height="6.5" fill="#555555"/>
<rect x="602.0" y="33.6" width="7.0" height="6.5" fill="#545454"/>
<rect x="602.0" y="27.4" width="7.0" height="6.5" fill="#545454"/>
<rect x="602.0" y="21.2" width="7.0" height="6.5" fill="#535353"/>
<rect x="608.7" y="77.0" width="7.0" height="6.5" fill="#656565"/>
<rect x="608.7" y="70.8" width="7.0" height="6.5" fill="#616161"/>
<rect x="608.7" y="64.6" width="7.0" height="6.5" fill="#5d5d5d"/>
<rect x="608.7" y="58.4" width="7.0" height="6.5" fill="#5a5a5a"/>
<rect x="608.7" y="52.2" width="7.0" height="6.5" fill="#595959"/>
<rect x="608.7" y="46.0" width="7.0" height="6.5" fill="#585858"/>
<rect x="608.7" y="39.8" width="7.0" height="6.5" fill="#575757"/>
<rect x="608.7" y="33.6" width="7.0" height="6.5" fill="#565656"/>
<rect x="608.7" y="27.4" width="7.0" height="6.5" fill="#565656"/>
<rect x="608.7" y="21.2" width="7.0" height="6.5" fill="#555555"/>
<rect x="615.5" y="77.0" width="7.0" height="6.5" fill="#676767"/>
<rect x="615.5" y="70.8" width="7.0" height="6.5" fill="#636363"/>
<rect x="615.5" y="64.6" width="7.0" height="6.5" fill="#606060"/>
<rect x="615.5" y="58.4" width="7.0" height="6.5" fill="#5c5c5c"/>
<rect x="615.5" y="52.2" width="7.0" height="6.5" fill="#5b5b5b"/>
<rect x="615.5" y="46.0" width="7.0" height="6.5" fill="#595959"/>
<rect x="615.5" y="39.8" width="7.0" height="6.5" fill="#585858"/>
<rect x="615.5" y="33.6" width="7.0" height="6.5" fill="#585858"/>
<rect x="615.5" y="27.4" width="7.0" height="6.5" fill="#585858"/>
<rect x="615.5" y="21.2" width="7.0" height="6.5" fill="#585858"/>
<rect x="620.6" y="77.0" width="1.9" height="6.5" fill="#858585"/>
<rect x="620.6" y="70.8" width="1.9" height="6.5" fill="#818181"/>
<rect x="620.6" y="64.6" width="1.9" height="6.5" fill="#7e7e7e"/>
<rect x="620.6" y="58.4" width="1.9" height="6.5" fill="#7a7a7a"/>
<rect x="620.6" y="52.2" width="1.9" height="6.5" fill="#797979"/>
<rect x="620.6" y="46.0" width="1.9" height="6.5" fill="#787878"/>
<rect x="620.6" y="39.8" width="1.9" height="6.5" fill="#767676"/>
<rect x="620.6" y="33.6" width="1.9" height="6.5" fill="#767676"/>
<rect x="620.6" y="27.4" width="1.9" height="6.5" fill="#767676"/>
<rect x="620.6" y="21.2" width="1.9" height="6.5" fill="#767676"/>
<rect x="534.4" y="81.6" width="7.0" height="1.8" fill="#6e6e6e"/>
<rect x="541.1" y="81.6" width="7.0" height="1.8" fill="#6d6d6d"/>
<rect x="547.9" y="81.6" width="7.0" height="1.8" fill="#6b6b6b"/>
<rect x="554.7" y="81.6" width="7.0" height="1.8" fill="#6a6a6a"/>
<rect x="561.4" y="81.6" width="7.0" height="1.8" fill="#696969"/>
<rect x="568.2" y="81.6" width="7.0" height="1.8" fill="#696969"/>
<rect x="574.9" y="81.6" width="7.0" height="1.8" fill="#6a6a6a"/>
<rect x="581.7" y="81.6" width="7.0" height="1.8" fill="#6d6d6d"/>
<rect x="588.5" y="81.6" width="7.0" height="1.8" fill="#717171"/>
<rect x="595.2" y="81.6" width="7.0" height="1.8" fill="#757575"/>
<rect x="602.0" y="81.6" width="7.0" height="1.8" fill="#7a7a7a"/>
<rect x="608.7" y="81.6" width="7.0" height="1.8" fill="#7e7e7e"/>
<rect x="615.5" y="81.6" width="7.0" height="1.8" fill="#818181"/>
<rect x="622.2" y="139.0" width="7.0" height="6.5" fill="#aeaeae"/>
<rect x="622.2" y="132.8" width="7.0" height="6.5" fill="#aeaeae"/>
<rect x="622.2" y="126.6" width="7.0" height="6.5" fill="#aeaeae"/>
<rect x="622.2" y="120.4" width="7.0" height="6.5" fill="#aeaeae"/>
<rect x="622.2" y="114.2" width="7.0" height="6.5" fill="#aeaeae"/>
<rect x="622.2" y="108.0" width="7.0" height="6.5" fill="#aeaeae"/>
<rect x="622.2" y="101.8" width="7.0" height="6.5" fill="#aeaeae"/>
<rect x="622.2" y="95.6" width="7.0" height="6.5" fill="#aeaeae"/>
<rect x="622.2" y="89.4" width="7.0" height="6.5" fill="#aeaeae"/>
<rect x="622.2" y="83.2" width="7.0" height="6.5" fill="#aeaeae"/>
<rect x="629.0" y="139.0" width="7.0" height="6.5" fill="#a5a5a5"/>
<rect x="629.0" y="132.8" width="7.0" height="6.5" fill="#a5a5a5"/>
<rect x="629.0" y="126.6" width="7.0" height="6.5" fill="#a5a5a5"/>
<rect x="629.0" y="120.4" width="7.0" height="6.5" fill="#a5a5a5"/>
<rect x="629.0" y="114.2" width="7.0" height="6.5" fill="#a6a6a6"/>
<rect x="629.0" y="108.0" width="7.0" height="6.5" fill="#a6a6a6"/>
<rect x="629.0" y="101.8" width="7.0" height="6.5" fill="#a6a6a6"/>
<rect x="629.0" y="95.6" width="7.0" height="6.5" fill="#a7a7a7"/>
<rect x="629.0" y="89.4" width="7.0" height="6.5" fill="#a7a7a7"/>
<rect x="629.0" y="83.2" width="7.0" height="6.5" fill="#a8a8a8"/>
<rect x="635.8" y="139.0" width="7.0" height="6.5" fill="#9d9d9d"/>
<rect x="635.8" y="132.8" width="7.0" height="6.5" fill="#9d9d9d"/>
<rect x="635.8" y="126.6" width="7.0" height="6.5" fill="#9d9d9d"/>
<rect x="635.8" y="120.4" width="7.0" height="6.5" fill="#9d9d9d"/>
<rect x="635.8" y="114.2" width="7.0" height="6.5" fill="#9d9d9d"/>
<rect x="635.8" y="108.0" width="7.0" height="6.5" fill="#9e9e9e"/>
<rect x="635.8" y="101.8" width="7.0" height="6.5" fill="#9e9e9e"/>
<rect x="635.8" y="95.6" width="7.0" height="6.5" fill="#9f9f9f"/>
<rect x="635.8" y="89.4" width="7.0" height="6.5" fill="#a1a1a1"/>
<rect x="635.8" y="83.2" width="7.0" height="6.5" fill="#a2a2a2"/>
<rect x="642.5" y="139.0" width="7.0" height="6.5" fill="#959595"/>
<rect x="642.5" y="132.8" width="7.0" height="6.5" fill="#959595"/>
<rect x="642.5" y="126.6" width="7.0" height="6.5" fill="#959595"/>
<rect x="642.5" y="120.4" width="7.0" height="6.5" fill="#959595"/>
<rect x="642.5" y="114.2" width="7.0" height="6.5" fill="#969696"/>
<rect x="642.5" y="108.0" width="7.0" height="6.5" fill="#969696"/>
<rect x="642.5" y="101.8" width="7.0" height="6.5" fill="#979797"/>
<rect x="642.5" y="95.6" width="7.0" height="6.5" fill="#989898"/>
<rect x="642.5" y="89.4" width="7.0" height="6.5" fill="#9a9a9a"/>
<rect x="642.5" y="83.2" width="7.0" height="6.5" fill="#9b9b9b"/>
<rect x="649.3" y="139.0" width="7.0" height="6.5" fill="#8e8e8e"/>
<rect x="649.3" y="132.8" width="7.0" height="6.5" fill="#8e8e8e"/>
<rect x="649.3" y="126.6" width="7.0" height="6.5" fill="#8e8e8e"/>
<rect x="649.3" y="120.4" width="7.0" height="6.5" fill="#8f8f8f"/>
<rect x="649.3" y="114.2" width="7.0" height="6.5" fill="#8f8f8f"/>
<rect x="649.3" y="108.0" width="7.0" height="6.5" fill="#909090"/>
<rect x="649.3" y="101.8" width="7.0" height="6.5" fill="#919191"/>
<rect x="649.3" y="95.6" width="7.0" height="6.5" fill="#929292"/>
<rect x="649.3" y="89.4" width="7.0" height="6.5" fill="#949494"/>
<rect x="649.3" y="83.2" width="7.0" height="6.5" fill="#959595"/>
<rect x="656.0" y="139.0" width="7.0" height="6.5" fill="#878787"/>
<rect x="656.0" y="132.8" width="7.0" height="6.5" fill="#878787"/>
<rect x="656.0" y="126.6" width="7.0" height="6.5" fill="#888888"/>
<rect x="656.0" y="120.4" width="7.0" height="6.5" fill="#888888"/>
<rect x="656.0" y="114.2" width="7.0" height="6.5" fill="#898989"/>
<rect x="656.0" y="108.0" width="7.0" height="6.5" fill="#8a8a8a"/>
<rect x="656.0" y="101.8" width="7.0" height="6.5" fill="#8b8b8b"/>
<rect x="656.0" y="95.6" width="7.0" height="6.5" fill="#8c8c8c"/>
<rect x="656.0" y="89.4" width="7.0" height="6.5" fill="#8e8e8e"/>
<rect x="656.0" y="83.2" width="7.0" height="6.5" fill="#8f8f8f"/>
<rect x="662.8" y="139.0" width="7.0" height="6.5" fill="#808080"/>
<rect x="662.8" y="132.8" width="7.0" height="6.5" fill="#818181"/>
<rect x="662.8" y="126.6" width="7.0" height="6.5" fill="#828282"/>
<rect x="662.8" y="120.4" width="7.0" height="6.5" fill="#828282"/>
<rect x="662.8" y="114.2" width="7.0" height="6.5" fill="#838383"/>
<rect x="662.8" y="108.0" width="7.0" height="6.5" fill="#848484"/>
<rect x="662.8" y="101.8" width="7.0" height="6.5" fill="#858585"/>
<rect x="662.8" y="95.6" width="7.0" height="6.5" fill="#868686"/>
<rect x="662.8" y="89.4" width="7.0" height="6.5" fill="#878787"/>
<rect x="662.8" y="83.2" width="7.0" height="6.5" fill="#898989"/>
<rect x="669.6" y="139.0" width="7.0" height="6.5" fill="#7a7a7a"/>
<rect x="669.6" y="132.8" width="7.0" height="6.5" fill="#7b7b7b"/>
<rect x="669.6" y="126.6" width="7.0" height="6.5" fill="#7c7c7c"/>
<rect x="669.6" y="120.4" width="7.0" height="6.5" fill="#7d7d7d"/>
<rect x="669.6" y="114.2" width="7.0" height="6.5" fill="#7e7e7e"/>
<rect x="669.6" y="108.0" width="7.0" height="6.5" fill="#7f7f7f"/>
<rect x="669.6" y="101.8" width="7.0" height="6.5" fill="#808080"/>
<rect x="669.6" y="95.6" width="7.0" height="6.5" fill="#818181"/>
<rect x="669.6" y="89.4" width="7.0" height="6.5" fill="#838383"/>
<rect x="669.6" y="83.2" width="7.0" height="6.5" fill="#858585"/>
<rect x="676.3" y="139.0" width="7.0" height="6.5" fill="#747474"/>
<rect x="676.3" y="132.8" width="7.0" height="6.5" fill="#757575"/>
<rect x="676.3" y="126.6" width="7.0" height="6.5" fill="#767676"/>
<rect x="676.3" y="120.4" width="7.0" height="6.5" fill="#787878"/>
<rect x="676.3" y="114.2" width="7.0" height="6.5" fill="#797979"/>
<rect x="676.3" y="108.0" width="7.0" height="6.5" fill="#7a7a7a"/>
<rect x="676.3" y="101.8" width="7.0" height="6.5" fill="#7b7b7b"/>
<rect x="676.3" y="95.6" width="7.0" height="6.5" fill="#7d7d7d"/>
<rect x="676.3" y="89.4" width="7.0" height="6.5" fill="#7f7f7f"/>
<rect x="676.3" y="83.2" width="7.0" height="6.5" fill="#818181"/>
<rect x="683.1" y="139.0" width="7.0" height="6.5" fill="#6e6e6e"/>
<rect x="683.1" y="132.8" width="7.0" height="6.5" fill="#6f6f6f"/>
<rect x="683.1" y="126.6" width="7.0" height="6.5" fill="#717171"/>
<rect x="683.1" y="120.4" width="7.0" height="6.5" fill="#727272"/>
<rect x="683.1" y="114.2" width="7.0" height="6.5" fill="#747474"/>
<rect x="683.1" y="108.0" width="7.0" height="6.5" fill="#757575"/>
<rect x="683.1" y="101.8" width="7.0" height="6.5" fill="#777777"/>
<rect x="683.1" y="95.6" width="7.0" height="6.5" fill="#797979"/>
<rect x="683.1" y="89.4" width="7.0" height="6.5" fill="#7b7b7b"/>
<rect x="683.1" y="83.2" width="7.0" height="6.5" fill="#7d7d7d"/>
<rect x="689.8" y="139.0" width="7.0" height="6.5" fill="#6b6b6b"/>
<rect x="689.8" y="132.8" width="7.0" height="6.5" fill="#6c6c6c"/>
<rect x="689.8" y="126.6" width="7.0" height="6.5" fill="#6e6e6e"/>
<rect x="689.8" y="120.4" width="7.0" height="6.5" fill="#6f6f6f"/>
<rect x="689.8" y="114.2" width="7.0" height="6.5" fill="#717171"/>
<rect x="689.8" y="108.0" width="7.0" height="6.5" fill="#737373"/>
<rect x="689.8" y="101.8" width="7.0" height="6.5" fill="#747474"/>
<rect x="689.8" y="95.6" width="7.0" height="6.5" fill="#767676"/>
<rect x="689.8" y="89.4" width="7.0" height="6.5" fill="#787878"/>
<rect x="689.8" y="83.2" width="7.0" height="6.5" fill="#7b7b7b"/>
<rect x="696.6" y="139.0" width="7.0" height="6.5" fill="#696969"/>
<rect x="696.6" y="132.8" width="7.0" height="6.5" fill="#6a6a6a"/>
<rect x="696.6" y="126.6" width="7.0" height="6.5" fill="#6c6c6c"/>
<rect x="696.6" y="120.4" width="7.0" height="6.5" fill="#6d6d6d"/>
<rect x="696.6" y="114.2" width="7.0" height="6.5" fill="#6f6f6f"/>
<rect x="696.6" y="108.0" width="7.0" height="6.5" fill="#717171"/>
<rect x="696.6" y="101.8" width="7.0" height="6.5" fill="#737373"/>
<rect x="696.6" y="95.6" width="7.0" height="6.5" fill="#757575"/>
<rect x="696.6" y="89.4" width="7.0" height="6.5" fill="#767676"/>
<rect x="696.6" y="83.2" width="7.0" height="6.5" fill="#787878"/>
<rect x="703.4" y="139.0" width="7.0" height="6.5" fill="#666666"/>
<rect x="703.4" y="132.8" width="7.0" height="6.5" fill="#686868"/>
<rect x="703.4" y="126.6" width="7.0" height="6.5" fill="#696969"/>
<rect x="703.4" y="120.4" width="7.0" height="6.5" fill="#6b6b6b"/>
<rect x="703.4" y="114.2" width="7.0" height="6.5" fill="#6d6d6d"/>
<rect x="703.4" y="108.0" width="7.0" height="6.5" fill="#6f6f6f"/>
<rect x="703.4" y="101.8" width="7.0" height="6.5" fill="#717171"/>
<rect x="703.4" y="95.6" width="7.0" height="6.5" fill="#737373"/>
<rect x="703.4" y="89.4" width="7.0" height="6.5" fill="#747474"/>
<rect x="703.4" y="83.2" width="7.0" height="6.5" fill="#767676"/>
<rect x="622.2" y="139.0" width="1.9" height="6.5" fill="#d8d8d8"/>
<rect x="622.2" y="132.8" width="1.9" height="6.5" fill="#d8d8d8"/>
<rect x="622.2" y="126.6" width="1.9" height="6.5" fill="#d8d8d8"/>
<rect x="622.2" y="120.4" width="1.9" height="6.5" fill="#d8d8d8"/>
<rect x="622.2" y="114.2" width="1.9" height="6.5" fill="#d8d8d8"/>
<rect x="622.2" y="108.0" width="1.9" height="6.5" fill="#d8d8d8"/>
<rect x="622.2" y="101.8" width="1.9" height="6.5" fill="#d8d8d8"/>
<rect x="622.2" y="95.6" width="1.9" height="6.5" fill="#d8d8d8"/>
<rect x="622.2" y="89.4" width="1.9" height="6.5" fill="#d8d8d8"/>
<rect x="622.2" y="83.2" width="1.9" height="6.5" fill="#d8d8d8"/>
<rect x="622.2" y="83.2" width="7.0" height="1.8" fill="#b8b8b8"/>
<rect x="629.0" y="83.2" width="7.0" height="1.8" fill="#b1b1b1"/>
<rect x="635.8" y="83.2" width="7.0" height="1.8" fill="#aaaaaa"/>
<rect x="642.5" y="83.2" width="7.0" height="1.8" fill="#a3a3a3"/>
<rect x="649.3" y="83.2" width="7.0" height="1.8" fill="#9c9c9c"/>
<rect x="656.0" y="83.2" width="7.0" height="1.8" fill="#959595"/>
<rect x="662.8" y="83.2" width="7.0" height="1.8" fill="#8f8f8f"/>
<rect x="669.6" y="83.2" width="7.0" height="1.8" fill="#8b8b8b"/>
<rect x="676.3" y="83.2" width="7.0" height="1.8" fill="#888888"/>
<rect x="683.1" y="83.2" width="7.0" height="1.8" fill="#858585"/>
<rect x="689.8" y="83.2" width="7.0" height="1.8" fill="#848484"/>
<rect x="696.6" y="83.2" width="7.0" height="1.8" fill="#828282"/>
<rect x="703.4" y="83.2" width="7.0" height="1.8" fill="#808080"/>
<rect x="622.2" y="77.0" width="7.0" height="6.5" fill="#686868"/>
<rect x="622.2" y="70.8" width="7.0" height="6.5" fill="#626262"/>
<rect x="622.2" y="64.6" width="7.0" height="6.5" fill="#5e5e5e"/>
<rect x="622.2" y="58.4" width="7.0" height="6.5" fill="#5b5b5b"/>
<rect x="622.2" y="52.2" width="7.0" height="6.5" fill="#595959"/>
<rect x="622.2" y="46.0" width="7.0" height="6.5" fill="#585858"/>
<rect x="622.2" y="39.8" width="7.0" height="6.5" fill="#565656"/>
<rect x="622.2" y="33.6" width="7.0" height="6.5" fill="#555555"/>
<rect x="622.2" y="27.4" width="7.0" height="6.5" fill="#545454"/>
<rect x="622.2" y="21.2" width="7.0" height="6.5" fill="#545454"/>
<rect x="629.0" y="77.0" width="7.0" height="6.5" fill="#686868"/>
<rect x="629.0" y="70.8" width="7.0" height="6.5" fill="#636363"/>
<rect x="629.0" y="64.6" width="7.0" height="6.5" fill="#5e5e5e"/>
<rect x="629.0" y="58.4" width="7.0" height="6.5" fill="#5b5b5b"/>
<rect x="629.0" y="52.2" width="7.0" height="6.5" fill="#595959"/>
<rect x="629.0" y="46.0" width="7.0" height="6.5" fill="#585858"/>
<rect x="629.0" y="39.8" width="7.0" height="6.5" fill="#565656"/>
<rect x="629.0" y="33.6" width="7.0" height="6.5" fill="#555555"/>
<rect x="629.0" y="27.4" width="7.0" height="6.5" fill="#545454"/>
<rect x="629.0" y="21.2" width="7.0" height="6.5" fill="#535353"/>
<rect x="635.8" y="77.0" width="7.0" height="6.5" fill="#686868"/>
<rect x="635.8" y="70.8" width="7.0" height="6.5" fill="#636363"/>
<rect x="635.8" y="64.6" width="7.0" height="6.5" fill="#5e5e5e"/>
<rect x="635.8" y="58.4" width="7.0" height="6.5" fill="#5b5b5b"/>
<rect x="635.8" y="52.2" width="7.0" height="6.5" fill="#595959"/>
<rect x="635.8" y="46.0" width="7.0" height="6.5" fill="#585858"/>
<rect x="635.8" y="39.8" width="7.0" height="6.5" fill="#565656"/>
<rect x="635.8" y="33.6" width="7.0" height="6.5" fill="#555555"/>
<rect x="635.8" y="27.4" width="7.0" height="6.5" fill="#545454"/>
<rect x="635.8" y="21.2" width="7.0" height="6.5" fill="#525252"/>
<rect x="642.5" y="77.0" width="7.0" height="6.5" fill="#696969"/>
<rect x="642.5" y="70.8" width="7.0" height="6.5" fill="#636363"/>
<rect x="642.5" y="64.6" width="7.0" height="6.5" fill="#5e5e5e"/>
<rect x="642.5" y="58.4" width="7.0" height="6.5" fill="#5b5b5b"/>
<rect x="642.5" y="52.2" width="7.0" height="6.5" fill="#595959"/>
<rect x="642.5" y="46.0" width="7.0" height="6.5" fill="#585858"/>
<rect x="642.5" y="39.8" width="7.0" height="6.5" fill="#565656"/>
<rect x="642.5" y="33.6" width="7.0" height="6.5" fill="#555555"/>
<rect x="642.5" y="27.4" width="7.0" height="6.5" fill="#535353"/>
<rect x="642.5" y="21.2" width="7.0" height="6.5" fill="#525252"/>
<rect x="649.3" y="77.0" width="7.0" height="6.5" fill="#6a6a6a"/>
<rect x="649.3" y="70.8" width="7.0" height="6.5" fill="#646464"/>
<rect x="649.3" y="64.6" width="7.0" height="6.5" fill="#5f5f5f"/>
<rect x="649.3" y="58.4" width="7.0" height="6.5" fill="#5c5c5c"/>
<rect x="649.3" y="52.2" width="7.0" height="6.5" fill="#5a5a5a"/>
<rect x="649.3" y="46.0" width="7.0" height="6.5" fill="#595959"/>
<rect x="649.3" y="39.8" width="7.0" height="6.5" fill="#575757"/>
<rect x="649.3" y="33.6" width="7.0" height="6.5" fill="#565656"/>
<rect x="649.3" y="27.4" width="7.0" height="6.5" fill="#545454"/>
<rect x="649.3" y="21.2" width="7.0" height="6.5" fill="#535353"/>
<rect x="656.0" y="77.0" width="7.0" height="6.5" fill="#6a6a6a"/>
<rect x="656.0" y="70.8" width="7.0" height="6.5" fill="#646464"/>
<rect x="656.0" y="64.6" width="7.0" height="6.5" fill="#606060"/>
<rect x="656.0" y="58.4" width="7.0" height="6.5" fill="#5c5c5c"/>
<rect x="656.0" y="52.2" width="7.0" height="6.5" fill="#5b5b5b"/>
<rect x="656.0" y="46.0" width="7.0" height="6.5" fill="#595959"/>
<rect x="656.0" y="39.8" width="7.0" height="6.5" fill="#585858"/>
<rect x="656.0" y="33.6" width="7.0" height="6.5" fill="#565656"/>
<rect x="656.0" y="27.4" width="7.0" height="6.5" fill="#555555"/>
<rect x="656.0" y="21.2" width="7.0" height="6.5" fill="#535353"/>
<rect x="662.8" y="77.0" width="7.0" height="6.5" fill="#6b6b6b"/>
<rect x="662.8" y="70.8" width="7.0" height="6.5" fill="#656565"/>
<rect x="662.8" y="64.6" width="7.0" height="6.5" fill="#616161"/>
<rect x="662.8" y="58.4" width="7.0" height="6.5" fill="#5d5d5d"/>
<rect x="662.8" y="52.2" width="7.0" height="6.5" fill="#5c5c5c"/>
<rect x="662.8" y="46.0" width="7.0" height="6.5" fill="#5a5a5a"/>
<rect x="662.8" y="39.8" width="7.0" height="6.5" fill="#595959"/>
<rect x="662.8" y="33.6" width="7.0" height="6.5" fill="#575757"/>
<rect x="662.8" y="27.4" width="7.0" height="6.5" fill="#565656"/>
<rect x="662.8" y="21.2" width="7.0" height="6.5" fill="#545454"/>
<rect x="669.6" y="77.0" width="7.0" height="6.5" fill="#6d6d6d"/>
<rect x="669.6" y="70.8" width="7.0" height="6.5" fill="#676767"/>
<rect x="669.6" y="64.6" width="7.0" height="6.5" fill="#626262"/>
<rect x="669.6" y="58.4" width="7.0" height="6.5" fill="#5f5f5f"/>
<rect x="669.6" y="52.2" width="7.0" height="6.5" fill="#5d5d5d"/>
<rect x="669.6" y="46.0" width="7.0" height="6.5" fill="#5c5c5c"/>
<rect x="669.6" y="39.8" width="7.0" height="6.5" fill="#5a5a5a"/>
<rect x="669.6" y="33.6" width="7.0" height="6.5" fill="#595959"/>
<rect x="669.6" y="27.4" width="7.0" height="6.5" fill="#575757"/>
<rect x="669.6" y="21.2" width="7.0" height="6.5" fill="#565656"/>
<rect x="676.3" y="77.0" width="7.0" height="6.5" fill="#6f6f6f"/>
<rect x="676.3" y="70.8" width="7.0" height="6.5" fill="#686868"/>
<rect x="676.3" y="64.6" width="7.0" height="6.5" fill="#646464"/>
<rect x="676.3" y="58.4" width="7.0" height="6.5" fill="#606060"/>
<rect x="676.3" y="52.2" width="7.0" height="6.5" fill="#5f5f5f"/>
<rect x="676.3" y="46.0" width="7.0" height="6.5" fill="#5d5d5d"/>
<rect x="676.3" y="39.8" width="7.0" height="6.5" fill="#5c5c5c"/>
<rect x="676.3" y="33.6" width="7.0" height="6.5" fill="#5a5a5a"/>
<rect x="676.3" y="27.4" width="7.0" height="6.5" fill="#595959"/>
<rect x="676.3" y="21.2" width="7.0" height="6.5" fill="#575757"/>
<rect x="683.1" y="77.0" width="7.0" height="6.5" fill="#707070"/>
<rect x="683.1" y="70.8" width="7.0" height="6.5" fill="#6a6a6a"/>
<rect x="683.1" y="64.6" width="7.0" height="6.5" fill="#656565"/>
<rect x="683.1" y="58.4" width="7.0" height="6.5" fill="#626262"/>
<rect x="683.1" y="52.2" width="7.0" height="6.5" fill="#606060"/>
<rect x="683.1" y="46.0" width="7.0" height="6.5" fill="#5f5f5f"/>
<rect x="683.1" y="39.8" width="7.0" height="6.5" fill="#5d5d5d"/>
<rect x="683.1" y="33.6" width="7.0" height="6.5" fill="#5c5c5c"/>
<rect x="683.1" y="27.4" width="7.0" height="6.5" fill="#5a5a5a"/>
<rect x="683.1" y="21.2" width="7.0" height="6.5" fill="#595959"/>
<rect x="689.8" y="77.0" width="7.0" height="6.5" fill="#727272"/>
<rect x="689.8" y="70.8" width="7.0" height="6.5" fill="#6b6b6b"/>
<rect x="689.8" y="64.6" width="7.0" height="6.5" fill="#676767"/>
<rect x="689.8" y="58.4" width="7.0" height="6.5" fill="#636363"/>
<rect x="689.8" y="52.2" width="7.0" height="6.5" fill="#626262"/>
<rect x="689.8" y="46.0" width="7.0" height="6.5" fill="#606060"/>
<rect x="689.8" y="39.8" width="7.0" height="6.5" fill="#5f5f5f"/>
<rect x="689.8" y="33.6" width="7.0" height="6.5" fill="#5d5d5d"/>
<rect x="689.8" y="27.4" width="7.0" height="6.5" fill="#5c5c5c"/>
<rect x="689.8" y="21.2" width="7.0" height="6.5" fill="#5a5a5a"/>
<rect x="696.6" y="77.0" width="7.0" height="6.5" fill="#747474"/>
<rect x="696.6" y="70.8" width="7.0" height="6.5" fill="#6d6d6d"/>
<rect x="696.6" y="64.6" width="7.0" height="6.5" fill="#686868"/>
<rect x="696.6" y="58.4" width="7.0" height="6.5" fill="#656565"/>
<rect x="696.6" y="52.2" width="7.0" height="6.5" fill="#636363"/>
<rect x="696.6" y="46.0" width="7.0" height="6.5" fill="#626262"/>
<rect x="696.6" y="39.8" width="7.0" height="6.5" fill="#606060"/>
<rect x="696.6" y="33.6" width="7.0" height="6.5" fill="#5f5f5f"/>
<rect x="696.6" y="27.4" width="7.0" height="6.5" fill="#5d5d5d"/>
<rect x="696.6" y="21.2" width="7.0" height="6.5" fill="#5c5c5c"/>
<rect x="703.4" y="77.0" width="7.0" height="6.5" fill="#757575"/>
<rect x="703.4" y="70.8" width="7.0" height="6.5" fill="#6f6f6f"/>
<rect x="703.4" y="64.6" width="7.0" height="6.5" fill="#6a6a6a"/>
<rect x="703.4" y="58.4" width="7.0" height="6.5" fill="#666666"/>
<rect x="703.4" y="52.2" width="7.0" height="6.5" fill="#656565"/>
<rect x="703.4" y="46.0" width="7.0" height="6.5" fill="#636363"/>
<rect x="703.4" y="39.8" width="7.0" height="6.5" fill="#626262"/>
<rect x="703.4" y="33.6" width="7.0" height="6.5" fill="#606060"/>
<rect x="703.4" y="27.4" width="7.0" height="6.5" fill="#5f5f5f"/>
<rect x="703.4" y="21.2" width="7.0" height="6.5" fill="#5d5d5d"/>
<rect x="622.2" y="77.0" width="1.9" height="6.5" fill="#808080"/>
<rect x="622.2" y="70.8" width="1.9" height="6.5" fill="#7b7b7b"/>
<rect x="622.2" y="64.6" width="1.9" height="6.5" fill="#777777"/>
<rect x="622.2" y="58.4" width="1.9" height="6.5" fill="#737373"/>
<rect x="622.2" y="52.2" width="1.9" height="6.5" fill="#727272"/>
<rect x="622.2" y="46.0" width="1.9" height="6.5" fill="#707070"/>
<rect x="622.2" y="39.8" width="1.9" height="6.5" fill="#6f6f6f"/>
<rect x="622.2" y="33.6" width="1.9" height="6.5" fill="#6e6e6e"/>
<rect x="622.2" y="27.4" width="1.9" height="6.5" fill="#6d6d6d"/>
<rect x="622.2" y="21.2" width="1.9" height="6.5" fill="#6c6c6c"/>
<rect x="622.2" y="81.6" width="7.0" height="1.8" fill="#8e8e8e"/>
<rect x="629.0" y="81.6" width="7.0" height="1.8" fill="#8c8c8c"/>
<rect x="635.8" y="81.6" width="7.0" height="1.8" fill="#8a8a8a"/>
<rect x="642.5" y="81.6" width="7.0" height="1.8" fill="#878787"/>
<rect x="649.3" y="81.6" width="7.0" height="1.8" fill="#858585"/>
<rect x="656.0" y="81.6" width="7.0" height="1.8" fill="#848484"/>
<rect x="662.8" y="81.6" width="7.0" height="1.8" fill="#848484"/>
<rect x="669.6" y="81.6" width="7.0" height="1.8" fill="#878787"/>
<rect x="676.3" y="81.6" width="7.0" height="1.8" fill="#8b8b8b"/>
<rect x="683.1" y="81.6" width="7.0" height="1.8" fill="#909090"/>
<rect x="689.8" y="81.6" width="7.0" height="1.8" fill="#959595"/>
<rect x="696.6" y="81.6" width="7.0" height="1.8" fill="#999999"/>
<rect x="703.4" y="81.6" width="7.0" height="1.8" fill="#9d9d9d"/>
<rect x="710.1" y="139.0" width="7.0" height="6.5" fill="#6a6a6a"/>
<rect x="710.1" y="132.8" width="7.0" height="6.5" fill="#6c6c6c"/>
<rect x="710.1" y="126.6" width="7.0" height="6.5" fill="#6f6f6f"/>
<rect x="710.1" y="120.4" width="7.0" height="6.5" fill="#717171"/>
<rect x="710.1" y="114.2" width="7.0" height="6.5" fill="#737373"/>
<rect x="710.1" y="108.0" width="7.0" height="6.5" fill="#757575"/>
<rect x="710.1" y="101.8" width="7.0" height="6.5" fill="#777777"/>
<rect x="710.1" y="95.6" width="7.0" height="6.5" fill="#787878"/>
<rect x="710.1" y="89.4" width="7.0" height="6.5" fill="#797979"/>
<rect x="710.1" y="83.2" width="7.0" height="6.5" fill="#7a7a7a"/>
<rect x="716.9" y="139.0" width="7.0" height="6.5" fill="#696969"/>
<rect x="716.9" y="132.8" width="7.0" height="6.5" fill="#6b6b6b"/>
<rect x="716.9" y="126.6" width="7.0" height="6.5" fill="#6d6d6d"/>
<rect x="716.9" y="120.4" width="7.0" height="6.5" fill="#6f6f6f"/>
<rect x="716.9" y="114.2" width="7.0" height="6.5" fill="#717171"/>
<rect x="716.9" y="108.0" width="7.0" height="6.5" fill="#747474"/>
<rect x="716.9" y="101.8" width="7.0" height="6.5" fill="#767676"/>
<rect x="716.9" y="95.6" width="7.0" height="6.5" fill="#777777"/>
<rect x="716.9" y="89.4" width="7.0" height="6.5" fill="#787878"/>
<rect x="716.9" y="83.2" width="7.0" height="6.5" fill="#797979"/>
<rect x="723.6" y="139.0" width="7.0" height="6.5" fill="#696969"/>
<rect x="723.6" y="132.8" width="7.0" height="6.5" fill="#6a6a6a"/>
<rect x="723.6" y="126.6" width="7.0" height="6.5" fill="#6c6c6c"/>
<rect x="723.6" y="120.4" width="7.0" height="6.5" fill="#6e6e6e"/>
<rect x="723.6" y="114.2" width="7.0" height="6.5" fill="#707070"/>
<rect x="723.6" y="108.0" width="7.0" height="6.5" fill="#727272"/>
<rect x="723.6" y="101.8" width="7.0" height="6.5" fill="#747474"/>
<rect x="723.6" y="95.6" width="7.0" height="6.5" fill="#767676"/>
<rect x="723.6" y="89.4" width="7.0" height="6.5" fill="#777777"/>
<rect x="723.6" y="83.2" width="7.0" height="6.5" fill="#787878"/>
<rect x="730.4" y="139.0" width="7.0" height="6.5" fill="#676767"/>
<rect x="730.4" y="132.8" width="7.0" height="6.5" fill="#686868"/>
<rect x="730.4" y="126.6" width="7.0" height="6.5" fill="#6a6a6a"/>
<rect x="730.4" y="120.4" width="7.0" height="6.5" fill="#6b6b6b"/>
<rect x="730.4" y="114.2" width="7.0" height="6.5" fill="#6e6e6e"/>
<rect x="730.4" y="108.0" width="7.0" height="6.5" fill="#707070"/>
<rect x="730.4" y="101.8" width="7.0" height="6.5" fill="#727272"/>
<rect x="730.4" y="95.6" width="7.0" height="6.5" fill="#747474"/>
<rect x="730.4" y="89.4" width="7.0" height="6.5" fill="#767676"/>
<rect x="730.4" y="83.2" width="7.0" height="6.5" fill="#777777"/>
<rect x="737.2" y="139.0" width="7.0" height="6.5" fill="#616161"/>
<rect x="737.2" y="132.8" width="7.0" height="6.5" fill="#636363"/>
<rect x="737.2" y="126.6" width="7.0" height="6.5" fill="#646464"/>
<rect x="737.2" y="120.4" width="7.0" height="6.5" fill="#666666"/>
<rect x="737.2" y="114.2" width="7.0" height="6.5" fill="#696969"/>
<rect x="737.2" y="108.0" width="7.0" height="6.5" fill="#6b6b6b"/>
<rect x="737.2" y="101.8" width="7.0" height="6.5" fill="#6e6e6e"/>
<rect x="737.2" y="95.6" width="7.0" height="6.5" fill="#707070"/>
<rect x="737.2" y="89.4" width="7.0" height="6.5" fill="#727272"/>
<rect x="737.2" y="83.2" width="7.0" height="6.5" fill="#747474"/>
<rect x="743.9" y="139.0" width="7.0" height="6.5" fill="#5c5c5c"/>
<rect x="743.9" y="132.8" width="7.0" height="6.5" fill="#5e5e5e"/>
<rect x="743.9" y="126.6" width="7.0" height="6.5" fill="#5f5f5f"/>
<rect x="743.9" y="120.4" width="7.0" height="6.5" fill="#616161"/>
<rect x="743.9" y="114.2" width="7.0" height="6.5" fill="#636363"/>
<rect x="743.9" y="108.0" width="7.0" height="6.5" fill="#666666"/>
<rect x="743.9" y="101.8" width="7.0" height="6.5" fill="#696969"/>
<rect x="743.9" y="95.6" width="7.0" height="6.5" fill="#6b6b6b"/>
<rect x="743.9" y="89.4" width="7.0" height="6.5" fill="#6e6e6e"/>
<rect x="743.9" y="83.2" width="7.0" height="6.5" fill="#717171"/>
<rect x="750.7" y="139.0" width="7.0" height="6.5" fill="#575757"/>
<rect x="750.7" y="132.8" width="7.0" height="6.5" fill="#585858"/>
<rect x="750.7" y="126.6" width="7.0" height="6.5" fill="#5a5a5a"/>
<rect x="750.7" y="120.4" width="7.0" height="6.5" fill="#5b5b5b"/>
<rect x="750.7" y="114.2" width="7.0" height="6.5" fill="#5e5e5e"/>
<rect x="750.7" y="108.0" width="7.0" height="6.5" fill="#616161"/>
<rect x="750.7" y="101.8" width="7.0" height="6.5" fill="#646464"/>
<rect x="750.7" y="95.6" width="7.0" height="6.5" fill="#676767"/>
<rect x="750.7" y="89.4" width="7.0" height="6.5" fill="#6a6a6a"/>
<rect x="750.7" y="83.2" width="7.0" height="6.5" fill="#6d6d6d"/>
<rect x="757.4" y="139.0" width="7.0" height="6.5" fill="#535353"/>
<rect x="757.4" y="132.8" width="7.0" height="6.5" fill="#555555"/>
<rect x="757.4" y="126.6" width="7.0" height="6.5" fill="#565656"/>
<rect x="757.4" y="120.4" width="7.0" height="6.5" fill="#585858"/>
<rect x="757.4" y="114.2" width="7.0" height="6.5" fill="#5b5b5b"/>
<rect x="757.4" y="108.0" width="7.0" height="6.5" fill="#5e5e5e"/>
<rect x="757.4" y="101.8" width="7.0" height="6.5" fill="#616161"/>
<rect x="757.4" y="95.6" width="7.0" height="6.5" fill="#646464"/>
<rect x="757.4" y="89.4" width="7.0" height="6.5" fill="#686868"/>
<rect x="757.4" y="83.2" width="7.0" height="6.5" fill="#6b6b6b"/>
<rect x="764.2" y="139.0" width="7.0" height="6.5" fill="#505050"/>
<rect x="764.2" y="132.8" width="7.0" height="6.5" fill="#515151"/>
<rect x="764.2" y="126.6" width="7.0" height="6.5" fill="#525252"/>
<rect x="764.2" y="120.4" width="7.0" height="6.5" fill="#545454"/>
<rect x="764.2" y="114.2" width="7.0" height="6.5" fill="#575757"/>
<rect x="764.2" y="108.0" width="7.0" height="6.5" fill="#5b5b5b"/>
<rect x="764.2" y="101.8" width="7.0" height="6.5" fill="#5e5e5e"/>
<rect x="764.2" y="95.6" width="7.0" height="6.5" fill="#616161"/>
<rect x="764.2" y="89.4" width="7.0" height="6.5" fill="#656565"/>
<rect x="764.2" y="83.2" width="7.0" height="6.5" fill="#686868"/>
<rect x="771.0" y="139.0" width="7.0" height="6.5" fill="#4d4d4d"/>
<rect x="771.0" y="132.8" width="7.0" height="6.5" fill="#4e4e4e"/>
<rect x="771.0" y="126.6" width="7.0" height="6.5" fill="#4f4f4f"/>
<rect x="771.0" y="120.4" width="7.0" height="6.5" fill="#505050"/>
<rect x="771.0" y="114.2" width="7.0" height="6.5" fill="#545454"/>
<rect x="771.0" y="108.0" width="7.0" height="6.5" fill="#575757"/>
<rect x="771.0" y="101.8" width="7.0" height="6.5" fill="#5b5b5b"/>
<rect x="771.0" y="95.6" width="7.0" height="6.5" fill="#5f5f5f"/>
<rect x="771.0" y="89.4" width="7.0" height="6.5" fill="#626262"/>
<rect x="771.0" y="83.2" width="7.0" height="6.5" fill="#666666"/>
<rect x="777.7" y="139.0" width="7.0" height="6.5" fill="#535353"/>
<rect x="777.7" y="132.8" width="7.0" height="6.5" fill="#535353"/>
<rect x="777.7" y="126.6" width="7.0" height="6.5" fill="#545454"/>
<rect x="777.7" y="120.4" width="7.0" height="6.5" fill="#555555"/>
<rect x="777.7" y="114.2" width="7.0" height="6.5" fill="#585858"/>
<rect x="777.7" y="108.0" width="7.0" height="6.5" fill="#5b5b5b"/>
<rect x="777.7" y="101.8" width="7.0" height="6.5" fill="#5e5e5e"/>
<rect x="777.7" y="95.6" width="7.0" height="6.5" fill="#616161"/>
<rect x="777.7" y="89.4" width="7.0" height="6.5" fill="#646464"/>
<rect x="777.7" y="83.2" width="7.0" height="6.5" fill="#676767"/>
<rect x="784.5" y="139.0" width="7.0" height="6.5" fill="#5a5a5a"/>
<rect x="784.5" y="132.8" width="7.0" height="6.5" fill="#5b5b5b"/>
<rect x="784.5" y="126.6" width="7.0" height="6.5" fill="#5b5b5b"/>
<rect x="784.5" y="120.4" width="7.0" height="6.5" fill="#5c5c5c"/>
<rect x="784.5" y="114.2" width="7.0" height="6.5" fill="#5e5e5e"/>
<rect x="784.5" y="108.0" width="7.0" height="6.5" fill="#606060"/>
<rect x="784.5" y="101.8" width="7.0" height="6.5" fill="#626262"/>
<rect x="784.5" y="95.6" width="7.0" height="6.5" fill="#646464"/>
<rect x="784.5" y="89.4" width="7.0" height="6.5" fill="#666666"/>
<rect x="784.5" y="83.2" width="7.0" height="6.5" fill="#696969"/>
<rect x="791.2" y="139.0" width="7.0" height="6.5" fill="#626262"/>
<rect x="791.2" y="132.8" width="7.0" height="6.5" fill="#626262"/>
<rect x="791.2" y="126.6" width="7.0" height="6.5" fill="#626262"/>
<rect x="791.2" y="120.4" width="7.0" height="6.5" fill="#626262"/>
<rect x="791.2" y="114.2" width="7.0" height="6.5" fill="#636363"/>
<rect x="791.2" y="108.0" width="7.0" height="6.5" fill="#646464"/>
<rect x="791.2" y="101.8" width="7.0" height="6.5" fill="#666666"/>
<rect x="791.2" y="95.6" width="7.0" height="6.5" fill="#676767"/>
<rect x="791.2" y="89.4" width="7.0" height="6.5" fill="#696969"/>
<rect x="791.2" y="83.2" width="7.0" height="6.5" fill="#6b6b6b"/>
<rect x="710.1" y="139.0" width="1.9" height="6.5" fill="#757575"/>
<rect x="710.1" y="132.8" width="1.9" height="6.5" fill="#777777"/>
<rect x="710.1" y="126.6" width="1.9" height="6.5" fill="#797979"/>
<rect x="710.1" y="120.4" width="1.9" height="6.5" fill="#7b7b7b"/>
<rect x="710.1" y="114.2" width="1.9" height="6.5" fill="#7e7e7e"/>
<rect x="710.1" y="108.0" width="1.9" height="6.5" fill="#808080"/>
<rect x="710.1" y="101.8" width="1.9" height="6.5" fill="#828282"/>
<rect x="710.1" y="95.6" width="1.9" height="6.5" fill="#838383"/>
<rect x="710.1" y="89.4" width="1.9" height="6.5" fill="#848484"/>
<rect x="710.1" y="83.2" width="1.9" height="6.5" fill="#848484"/>
<rect x="710.1" y="77.0" width="7.0" height="6.5" fill="#626262"/>
<rect x="710.1" y="70.8" width="7.0" height="6.5" fill="#5a5a5a"/>
<rect x="710.1" y="64.6" width="7.0" height="6.5" fill="#545454"/>
<rect x="710.1" y="58.4" width="7.0" height="6.5" fill="#4e4e4e"/>
<rect x="710.1" y="52.2" width="7.0" height="6.5" fill="#4a4a4a"/>
<rect x="710.1" y="46.0" width="7.0" height="6.5" fill="#464646"/>
<rect x="710.1" y="39.8" width="7.0" height="6.5" fill="#434343"/>
<rect x="710.1" y="33.6" width="7.0" height="6.5" fill="#424242"/>
<rect x="710.1" y="27.4" width="7.0" height="6.5" fill="#424242"/>
<rect x="710.1" y="21.2" width="7.0" height="6.5" fill="#424242"/>
<rect x="716.9" y="77.0" width="7.0" height="6.5" fill="#636363"/>
<rect x="716.9" y="70.8" width="7.0" height="6.5" fill="#5b5b5b"/>
<rect x="716.9" y="64.6" width="7.0" height="6.5" fill="#545454"/>
<rect x="716.9" y="58.4" width="7.0" height="6.5" fill="#4e4e4e"/>
<rect x="716.9" y="52.2" width="7.0" height="6.5" fill="#4a4a4a"/>
<rect x="716.9" y="46.0" width="7.0" height="6.5" fill="#464646"/>
<rect x="716.9" y="39.8" width="7.0" height="6.5" fill="#424242"/>
<rect x="716.9" y="33.6" width="7.0" height="6.5" fill="#414141"/>
<rect x="716.9" y="27.4" width="7.0" height="6.5" fill="#414141"/>
<rect x="716.9" y="21.2" width="7.0" height="6.5" fill="#414141"/>
<rect x="723.6" y="77.0" width="7.0" height="6.5" fill="#646464"/>
<rect x="723.6" y="70.8" width="7.0" height="6.5" fill="#5b5b5b"/>
<rect x="723.6" y="64.6" width="7.0" height="6.5" fill="#545454"/>
<rect x="723.6" y="58.4" width="7.0" height="6.5" fill="#4e4e4e"/>
<rect x="723.6" y="52.2" width="7.0" height="6.5" fill="#4a4a4a"/>
<rect x="723.6" y="46.0" width="7.0" height="6.5" fill="#454545"/>
<rect x="723.6" y="39.8" width="7.0" height="6.5" fill="#414141"/>
<rect x="723.6" y="33.6" width="7.0" height="6.5" fill="#404040"/>
<rect x="723.6" y="27.4" width="7.0" height="6.5" fill="#404040"/>
<rect x="723.6" y="21.2" width="7.0" height="6.5" fill="#404040"/>
<rect x="730.4" y="77.0" width="7.0" height="6.5" fill="#656565"/>
<rect x="730.4" y="70.8" width="7.0" height="6.5" fill="#5c5c5c"/>
<rect x="730.4" y="64.6" width="7.0" height="6.5" fill="#555555"/>
<rect x="730.4" y="58.4" width="7.0" height="6.5" fill="#4e4e4e"/>
<rect x="730.4" y="52.2" width="7.0" height="6.5" fill="#4a4a4a"/>
<rect x="730.4" y="46.0" width="7.0" height="6.5" fill="#464646"/>
<rect x="730.4" y="39.8" width="7.0" height="6.5" fill="#414141"/>
<rect x="730.4" y="33.6" width="7.0" height="6.5" fill="#414141"/>
<rect x="730.4" y="27.4" width="7.0" height="6.5" fill="#414141"/>
<rect x="730.4" y="21.2" width="7.0" height="6.5" fill="#404040"/>
<rect x="737.2" y="77.0" width="7.0" height="6.5" fill="#676767"/>
<rect x="737.2" y="70.8" width="7.0" height="6.5" fill="#5e5e5e"/>
<rect x="737.2" y="64.6" width="7.0" height="6.5" fill="#585858"/>
<rect x="737.2" y="58.4" width="7.0" height="6.5" fill="#525252"/>
<rect x="737.2" y="52.2" width="7.0" height="6.5" fill="#4d4d4d"/>
<rect x="737.2" y="46.0" width="7.0" height="6.5" fill="#494949"/>
<rect x="737.2" y="39.8" width="7.0" height="6.5" fill="#454545"/>
<rect x="737.2" y="33.6" width="7.0" height="6.5" fill="#444444"/>
<rect x="737.2" y="27.4" width="7.0" height="6.5" fill="#444444"/>
<rect x="737.2" y="21.2" width="7.0" height="6.5" fill="#444444"/>
<rect x="743.9" y="77.0" width="7.0" height="6.5" fill="#696969"/>
<rect x="743.9" y="70.8" width="7.0" height="6.5" fill="#616161"/>
<rect x="743.9" y="64.6" width="7.0" height="6.5" fill="#5a5a5a"/>
<rect x="743.9" y="58.4" width="7.0" height="6.5" fill="#555555"/>
<rect x="743.9" y="52.2" width="7.0" height="6.5" fill="#515151"/>
<rect x="743.9" y="46.0" width="7.0" height="6.5" fill="#4d4d4d"/>
<rect x="743.9" y="39.8" width="7.0" height="6.5" fill="#494949"/>
<rect x="743.9" y="33.6" width="7.0" height="6.5" fill="#484848"/>
<rect x="743.9" y="27.4" width="7.0" height="6.5" fill="#474747"/>
<rect x="743.9" y="21.2" width="7.0" height="6.5" fill="#474747"/>
<rect x="750.7" y="77.0" width="7.0" height="6.5" fill="#6b6b6b"/>
<rect x="750.7" y="70.8" width="7.0" height="6.5" fill="#636363"/>
<rect x="750.7" y="64.6" width="7.0" height="6.5" fill="#5d5d5d"/>
<rect x="750.7" y="58.4" width="7.0" height="6.5" fill="#585858"/>
<rect x="750.7" y="52.2" width="7.0" height="6.5" fill="#545454"/>
<rect x="750.7" y="46.0" width="7.0" height="6.5" fill="#505050"/>
<rect x="750.7" y="39.8" width="7.0" height="6.5" fill="#4d4d4d"/>
<rect x="750.7" y="33.6" width="7.0" height="6.5" fill="#4c4c4c"/>
<rect x="750.7" y="27.4" width="7.0" height="6.5" fill="#4b4b4b"/>
<rect x="750.7" y="21.2" width="7.0" height="6.5" fill="#4a4a4a"/>
<rect x="757.4" y="77.0" width="7.0" height="6.5" fill="#6e6e6e"/>
<rect x="757.4" y="70.8" width="7.0" height="6.5" fill="#666666"/>
<rect x="757.4" y="64.6" width="7.0" height="6.5" fill="#616161"/>
<rect x="757.4" y="58.4" width="7.0" height="6.5" fill="#5c5c5c"/>
<rect x="757.4" y="52.2" width="7.0" height="6.5" fill="#585858"/>
<rect x="757.4" y="46.0" width="7.0" height="6.5" fill="#555555"/>
<rect x="757.4" y="39.8" width="7.0" height="6.5" fill="#515151"/>
<rect x="757.4" y="33.6" width="7.0" height="6.5" fill="#505050"/>
<rect x="757.4" y="27.4" width="7.0" height="6.5" fill="#4f4f4f"/>
<rect x="757.4" y="21.2" width="7.0" height="6.5" fill="#4f4f4f"/>
<rect x="764.2" y="77.0" width="7.0" height="6.5" fill="#717171"/>
<rect x="764.2" y="70.8" width="7.0" height="6.5" fill="#6a6a6a"/>
<rect x="764.2" y="64.6" width="7.0" height="6.5" fill="#646464"/>
<rect x="764.2" y="58.4" width="7.0" height="6.5" fill="#606060"/>
<rect x="764.2" y="52.2" width="7.0" height="6.5" fill="#5c5c5c"/>
<rect x="764.2" y="46.0" width="7.0" height="6.5" fill="#595959"/>
<rect x="764.2" y="39.8" width="7.0" height="6.5" fill="#565656"/>
<rect x="764.2" y="33.6" width="7.0" height="6.5" fill="#555555"/>
<rect x="764.2" y="27.4" width="7.0" height="6.5" fill="#545454"/>
<rect x="764.2" y="21.2" width="7.0" height="6.5" fill="#535353"/>
<rect x="771.0" y="77.0" width="7.0" height="6.5" fill="#757575"/>
<rect x="771.0" y="70.8" width="7.0" height="6.5" fill="#6d6d6d"/>
<rect x="771.0" y="64.6" width="7.0" height="6.5" fill="#686868"/>
<rect x="771.0" y="58.4" width="7.0" height="6.5" fill="#646464"/>
<rect x="771.0" y="52.2" width="7.0" height="6.5" fill="#616161"/>
<rect x="771.0" y="46.0" width="7.0" height="6.5" fill="#5e5e5e"/>
<rect x="771.0" y="39.8" width="7.0" height="6.5" fill="#5b5b5b"/>
<rect x="771.0" y="33.6" width="7.0" height="6.5" fill="#595959"/>
<rect x="771.0" y="27.4" width="7.0" height="6.5" fill="#595959"/>
<rect x="771.0" y="21.2" width="7.0" height="6.5" fill="#585858"/>
<rect x="777.7" y="77.0" width="7.0" height="6.5" fill="#777777"/>
<rect x="777.7" y="70.8" width="7.0" height="6.5" fill="#707070"/>
<rect x="777.7" y="64.6" width="7.0" height="6.5" fill="#6c6c6c"/>
<rect x="777.7" y="58.4" width="7.0" height="6.5" fill="#676767"/>
<rect x="777.7" y="52.2" width="7.0" height="6.5" fill="#656565"/>
<rect x="777.7" y="46.0" width="7.0" height="6.5" fill="#626262"/>
<rect x="777.7" y="39.8" width="7.0" height="6.5" fill="#606060"/>
<rect x="777.7" y="33.6" width="7.0" height="6.5" fill="#5f5f5f"/>
<rect x="777.7" y="27.4" width="7.0" height="6.5" fill="#5e5e5e"/>
<rect x="777.7" y="21.2" width="7.0" height="6.5" fill="#5d5d5d"/>
<rect x="784.5" y="77.0" width="7.0" height="6.5" fill="#7a7a7a"/>
<rect x="784.5" y="70.8" width="7.0" height="6.5" fill="#747474"/>
<rect x="784.5" y="64.6" width="7.0" height="6.5" fill="#6f6f6f"/>
<rect x="784.5" y="58.4" width="7.0" height="6.5" fill="#6b6b6b"/>
<rect x="784.5" y="52.2" width="7.0" height="6.5" fill="#696969"/>
<rect x="784.5" y="46.0" width="7.0" height="6.5" fill="#676767"/>
<rect x="784.5" y="39.8" width="7.0" height="6.5" fill="#656565"/>
<rect x="784.5" y="33.6" width="7.0" height="6.5" fill="#646464"/>
<rect x="784.5" y="27.4" width="7.0" height="6.5" fill="#636363"/>
<rect x="784.5" y="21.2" width="7.0" height="6.5" fill="#636363"/>
<rect x="791.2" y="77.0" width="7.0" height="6.5" fill="#7d7d7d"/>
<rect x="791.2" y="70.8" width="7.0" height="6.5" fill="#777777"/>
<rect x="791.2" y="64.6" width="7.0" height="6.5" fill="#737373"/>
<rect x="791.2" y="58.4" width="7.0" height="6.5" fill="#6f6f6f"/>
<rect x="791.2" y="52.2" width="7.0" height="6.5" fill="#6e6e6e"/>
<rect x="791.2" y="46.0" width="7.0" height="6.5" fill="#6c6c6c"/>
<rect x="791.2" y="39.8" width="7.0" height="6.5" fill="#6a6a6a"/>
<rect x="791.2" y="33.6" width="7.0" height="6.5" fill="#696969"/>
<rect x="791.2" y="27.4" width="7.0" height="6.5" fill="#696969"/>
<rect x="791.2" y="21.2" width="7.0" height="6.5" fill="#686868"/>
<rect x="710.1" y="81.6" width="7.0" height="1.8" fill="#8e8e8e"/>
<rect x="716.9" y="81.6" width="7.0" height="1.8" fill="#8d8d8d"/>
<rect x="723.6" y="81.6" width="7.0" height="1.8" fill="#8b8b8b"/>
<rect x="730.4" y="81.6" width="7.0" height="1.8" fill="#898989"/>
<rect x="737.2" y="81.6" width="7.0" height="1.8" fill="#878787"/>
<rect x="743.9" y="81.6" width="7.0" height="1.8" fill="#878787"/>
<rect x="750.7" y="81.6" width="7.0" height="1.8" fill="#888888"/>
<rect x="757.4" y="81.6" width="7.0" height="1.8" fill="#8c8c8c"/>
<rect x="764.2" y="81.6" width="7.0" height="1.8" fill="#929292"/>
<rect x="771.0" y="81.6" width="7.0" height="1.8" fill="#989898"/>
<rect x="777.7" y="81.6" width="7.0" height="1.8" fill="#9f9f9f"/>
<rect x="784.5" y="81.6" width="7.0" height="1.8" fill="#a4a4a4"/>
<rect x="791.2" y="81.6" width="7.0" height="1.8" fill="#a9a9a9"/>
</g>
<path d="M95.5 21.0 V145.5 H798.5 V21.0" fill="none" stroke="#000" stroke-width="1"/>
<line x1="95.50" y1="21.50" x2="117.00" y2="21.50" stroke="#000" stroke-width="1"/>
<line x1="95.50" y1="129.50" x2="117.00" y2="129.50" stroke="#000" stroke-width="1"/>
<line x1="95.50" y1="114.50" x2="117.00" y2="114.50" stroke="#000" stroke-width="1"/>
<line x1="95.50" y1="98.50" x2="117.00" y2="98.50" stroke="#000" stroke-width="1"/>
<line x1="95.50" y1="83.50" x2="117.00" y2="83.50" stroke="#000" stroke-width="1"/>
<line x1="95.50" y1="67.50" x2="117.00" y2="67.50" stroke="#000" stroke-width="1"/>
<line x1="95.50" y1="52.50" x2="117.00" y2="52.50" stroke="#000" stroke-width="1"/>
<line x1="95.50" y1="36.50" x2="117.00" y2="36.50" stroke="#000" stroke-width="1"/>
<text x="91.00" y="149.80" class="ax" text-anchor="end">0</text>
<text x="91.00" y="134.30" class="ax" text-anchor="end">20</text>
<text x="91.00" y="118.80" class="ax" text-anchor="end">40</text>
<text x="91.00" y="103.30" class="ax" text-anchor="end">60</text>
<text x="91.00" y="87.80" class="ax" text-anchor="end">80</text>
<text x="91.00" y="72.30" class="ax" text-anchor="end">100</text>
<text x="91.00" y="56.80" class="ax" text-anchor="end">120</text>
<text x="91.00" y="41.30" class="ax" text-anchor="end">140</text>
<text x="91.00" y="25.80" class="ax" text-anchor="end">160</text>
<text x="95.00" y="154.50" class="ax" text-anchor="middle">0</text>
<line x1="180.50" y1="145.50" x2="180.50" y2="141.00" stroke="#000" stroke-width="1"/>
<text x="180.70" y="154.50" class="ax" text-anchor="middle">50</text>
<line x1="264.50" y1="145.50" x2="264.50" y2="141.00" stroke="#000" stroke-width="1"/>
<text x="264.70" y="154.50" class="ax" text-anchor="middle">100</text>
<line x1="349.50" y1="145.50" x2="349.50" y2="141.00" stroke="#000" stroke-width="1"/>
<text x="349.70" y="154.50" class="ax" text-anchor="middle">150</text>
<line x1="433.50" y1="145.50" x2="433.50" y2="141.00" stroke="#000" stroke-width="1"/>
<text x="433.70" y="154.50" class="ax" text-anchor="middle">200</text>
<line x1="518.50" y1="145.50" x2="518.50" y2="141.00" stroke="#000" stroke-width="1"/>
<text x="518.70" y="154.50" class="ax" text-anchor="middle">250</text>
<line x1="602.50" y1="145.50" x2="602.50" y2="141.00" stroke="#000" stroke-width="1"/>
<text x="602.70" y="154.50" class="ax" text-anchor="middle">300</text>
<line x1="687.50" y1="145.50" x2="687.50" y2="141.00" stroke="#000" stroke-width="1"/>
<text x="687.70" y="154.50" class="ax" text-anchor="middle">350</text>
<line x1="771.50" y1="145.50" x2="771.50" y2="141.00" stroke="#000" stroke-width="1"/>
<text x="771.70" y="154.50" class="ax" text-anchor="middle">400</text>
<rect x="95.5" y="189.5" width="703.0" height="124.0" fill="none" stroke="#000" stroke-width="1"/>
<line x1="95.50" y1="297.50" x2="117.00" y2="297.50" stroke="#000" stroke-width="1"/>
<line x1="95.50" y1="282.50" x2="117.00" y2="282.50" stroke="#000" stroke-width="1"/>
<line x1="95.50" y1="266.50" x2="117.00" y2="266.50" stroke="#000" stroke-width="1"/>
<line x1="95.50" y1="251.50" x2="117.00" y2="251.50" stroke="#000" stroke-width="1"/>
<line x1="95.50" y1="235.50" x2="117.00" y2="235.50" stroke="#000" stroke-width="1"/>
<line x1="95.50" y1="220.50" x2="117.00" y2="220.50" stroke="#000" stroke-width="1"/>
<line x1="95.50" y1="204.50" x2="117.00" y2="204.50" stroke="#000" stroke-width="1"/>
<text x="91.00" y="317.80" class="ax" text-anchor="end">0</text>
<text x="91.00" y="302.30" class="ax" text-anchor="end">20</text>
<text x="91.00" y="286.80" class="ax" text-anchor="end">40</text>
<text x="91.00" y="271.30" class="ax" text-anchor="end">60</text>
<text x="91.00" y="255.80" class="ax" text-anchor="end">80</text>
<text x="91.00" y="240.30" class="ax" text-anchor="end">100</text>
<text x="91.00" y="224.80" class="ax" text-anchor="end">120</text>
<text x="91.00" y="209.30" class="ax" text-anchor="end">140</text>
<text x="91.00" y="193.80" class="ax" text-anchor="end">160</text>
<text x="95.00" y="322.50" class="ax" text-anchor="middle">0</text>
<line x1="180.50" y1="313.50" x2="180.50" y2="309.00" stroke="#000" stroke-width="1"/>
<text x="180.70" y="322.50" class="ax" text-anchor="middle">50</text>
<line x1="264.50" y1="313.50" x2="264.50" y2="309.00" stroke="#000" stroke-width="1"/>
<text x="264.70" y="322.50" class="ax" text-anchor="middle">100</text>
<line x1="349.50" y1="313.50" x2="349.50" y2="309.00" stroke="#000" stroke-width="1"/>
<text x="349.70" y="322.50" class="ax" text-anchor="middle">150</text>
<line x1="433.50" y1="313.50" x2="433.50" y2="309.00" stroke="#000" stroke-width="1"/>
<text x="433.70" y="322.50" class="ax" text-anchor="middle">200</text>
<line x1="518.50" y1="313.50" x2="518.50" y2="309.00" stroke="#000" stroke-width="1"/>
<text x="518.70" y="322.50" class="ax" text-anchor="middle">250</text>
<line x1="602.50" y1="313.50" x2="602.50" y2="309.00" stroke="#000" stroke-width="1"/>
<text x="602.70" y="322.50" class="ax" text-anchor="middle">300</text>
<line x1="687.50" y1="313.50" x2="687.50" y2="309.00" stroke="#000" stroke-width="1"/>
<text x="687.70" y="322.50" class="ax" text-anchor="middle">350</text>
<line x1="771.50" y1="313.50" x2="771.50" y2="309.00" stroke="#000" stroke-width="1"/>
<text x="771.70" y="322.50" class="ax" text-anchor="middle">400</text>
<rect x="293" y="221" width="2" height="1" fill="#00b4ff"/>
<rect x="337" y="232" width="3" height="1" fill="#00b4ff"/>
<rect x="802.0" y="139.28" width="40.5" height="6.52" fill="#6300ff"/>
<rect x="802.0" y="133.05" width="40.5" height="6.52" fill="#3300ff"/>
<rect x="802.0" y="126.83" width="40.5" height="6.52" fill="#0014ff"/>
<rect x="802.0" y="120.60" width="40.5" height="6.52" fill="#0044ff"/>
<rect x="802.0" y="114.38" width="40.5" height="6.52" fill="#008bff"/>
<rect x="802.0" y="108.15" width="40.5" height="6.52" fill="#00bbff"/>
<rect x="802.0" y="101.93" width="40.5" height="6.52" fill="#00fffc"/>
<rect x="802.0" y="95.70" width="40.5" height="6.52" fill="#00ffcc"/>
<rect x="802.0" y="89.47" width="40.5" height="6.52" fill="#00ff85"/>
<rect x="802.0" y="83.25" width="40.5" height="6.52" fill="#00ff55"/>
<rect x="802.0" y="77.03" width="40.5" height="6.52" fill="#00ff0e"/>
<rect x="802.0" y="70.80" width="40.5" height="6.52" fill="#22ff00"/>
<rect x="802.0" y="64.58" width="40.5" height="6.52" fill="#69ff00"/>
<rect x="802.0" y="58.35" width="40.5" height="6.52" fill="#99ff00"/>
<rect x="802.0" y="52.12" width="40.5" height="6.52" fill="#e0ff00"/>
<rect x="802.0" y="45.90" width="40.5" height="6.52" fill="#ffee00"/>
<rect x="802.0" y="39.68" width="40.5" height="6.52" fill="#ffa700"/>
<rect x="802.0" y="33.45" width="40.5" height="6.52" fill="#ff7700"/>
<rect x="802.0" y="27.23" width="40.5" height="6.52" fill="#ff3000"/>
<rect x="802.0" y="21.00" width="40.5" height="6.52" fill="#ff0000"/>
<line x1="842.50" y1="21.00" x2="842.50" y2="146.00" stroke="#000" stroke-width="1"/>
<line x1="821.00" y1="145.50" x2="843.00" y2="145.50" stroke="#000" stroke-width="1"/>
<text x="846.10" y="145.80" class="cb" text-anchor="start">80</text>
<line x1="821.00" y1="121.50" x2="843.00" y2="121.50" stroke="#000" stroke-width="1"/>
<text x="846.10" y="122.80" class="cb" text-anchor="start">90</text>
<line x1="821.00" y1="97.50" x2="843.00" y2="97.50" stroke="#000" stroke-width="1"/>
<text x="846.10" y="98.80" class="cb" text-anchor="start">100</text>
<line x1="821.00" y1="73.50" x2="843.00" y2="73.50" stroke="#000" stroke-width="1"/>
<text x="846.10" y="74.80" class="cb" text-anchor="start">110</text>
<line x1="821.00" y1="49.50" x2="843.00" y2="49.50" stroke="#000" stroke-width="1"/>
<text x="846.10" y="50.80" class="cb" text-anchor="start">120</text>
<line x1="821.00" y1="26.50" x2="843.00" y2="26.50" stroke="#000" stroke-width="1"/>
<text x="846.10" y="27.10" class="cb" text-anchor="start">130</text>
<rect x="802.0" y="307.27" width="40.5" height="6.52" fill="#6300ff"/>
<rect x="802.0" y="301.05" width="40.5" height="6.52" fill="#3300ff"/>
<rect x="802.0" y="294.82" width="40.5" height="6.52" fill="#0014ff"/>
<rect x="802.0" y="288.60" width="40.5" height="6.52" fill="#0044ff"/>
<rect x="802.0" y="282.38" width="40.5" height="6.52" fill="#008bff"/>
<rect x="802.0" y="276.15" width="40.5" height="6.52" fill="#00bbff"/>
<rect x="802.0" y="269.93" width="40.5" height="6.52" fill="#00fffc"/>
<rect x="802.0" y="263.70" width="40.5" height="6.52" fill="#00ffcc"/>
<rect x="802.0" y="257.48" width="40.5" height="6.52" fill="#00ff85"/>
<rect x="802.0" y="251.25" width="40.5" height="6.52" fill="#00ff55"/>
<rect x="802.0" y="245.03" width="40.5" height="6.52" fill="#00ff0e"/>
<rect x="802.0" y="238.80" width="40.5" height="6.52" fill="#22ff00"/>
<rect x="802.0" y="232.57" width="40.5" height="6.52" fill="#69ff00"/>
<rect x="802.0" y="226.35" width="40.5" height="6.52" fill="#99ff00"/>
<rect x="802.0" y="220.12" width="40.5" height="6.52" fill="#e0ff00"/>
<rect x="802.0" y="213.90" width="40.5" height="6.52" fill="#ffee00"/>
<rect x="802.0" y="207.68" width="40.5" height="6.52" fill="#ffa700"/>
<rect x="802.0" y="201.45" width="40.5" height="6.52" fill="#ff7700"/>
<rect x="802.0" y="195.23" width="40.5" height="6.52" fill="#ff3000"/>
<rect x="802.0" y="189.00" width="40.5" height="6.52" fill="#ff0000"/>
<line x1="842.50" y1="189.00" x2="842.50" y2="314.00" stroke="#000" stroke-width="1"/>
<line x1="821.00" y1="313.50" x2="843.00" y2="313.50" stroke="#000" stroke-width="1"/>
<text x="846.10" y="315.10" class="cb" text-anchor="start">-2</text>
<line x1="821.00" y1="297.50" x2="843.00" y2="297.50" stroke="#000" stroke-width="1"/>
<text x="846.10" y="299.60" class="cb" text-anchor="start">-1.5</text>
<line x1="821.00" y1="282.50" x2="843.00" y2="282.50" stroke="#000" stroke-width="1"/>
<text x="846.10" y="284.60" class="cb" text-anchor="start">-1</text>
<line x1="821.00" y1="266.50" x2="843.00" y2="266.50" stroke="#000" stroke-width="1"/>
<text x="846.10" y="268.60" class="cb" text-anchor="start">-0.5</text>
<line x1="821.00" y1="251.50" x2="843.00" y2="251.50" stroke="#000" stroke-width="1"/>
<text x="846.10" y="253.60" class="cb" text-anchor="start">0</text>
<line x1="821.00" y1="235.50" x2="843.00" y2="235.50" stroke="#000" stroke-width="1"/>
<text x="846.10" y="237.60" class="cb" text-anchor="start">0.5</text>
<line x1="821.00" y1="220.50" x2="843.00" y2="220.50" stroke="#000" stroke-width="1"/>
<text x="846.10" y="222.60" class="cb" text-anchor="start">1</text>
<line x1="821.00" y1="204.50" x2="843.00" y2="204.50" stroke="#000" stroke-width="1"/>
<text x="846.10" y="206.60" class="cb" text-anchor="start">1.5</text>
<line x1="821.00" y1="189.50" x2="843.00" y2="189.50" stroke="#000" stroke-width="1"/>
<text x="846.10" y="192.30" class="cb" text-anchor="start">2</text>
<text x="95.00" y="17.60" class="tt" text-anchor="start">Vcal threshold</text>
<text x="820.50" y="17.60" class="tt" text-anchor="end">M0076-060620.09:02T-10a</text>
<text x="95.00" y="185.60" class="tt" text-anchor="start">Bump bonding map</text>
<text x="312.30" y="354.50" class="st b" text-anchor="start">Test Summary of M0076</text>
<text x="466.30" y="354.50" class="st b" text-anchor="start">T-10a</text>
<text x="767.30" y="354.50" class="st b" text-anchor="start">GRADE:</text>
<text x="824.90" y="354.50" class="st b" text-anchor="start">A</text>
<text x="312.30" y="378.40" class="sm" text-anchor="start">ROCs &gt; 1% defects:</text>
<text x="447.00" y="378.40" class="sm" text-anchor="start">0</text>
<text x="312.30" y="396.00" class="sm" text-anchor="start">Dead Pixel:</text>
<text x="447.00" y="396.00" class="sm" text-anchor="start">0</text>
<text x="312.30" y="413.00" class="sm" text-anchor="start">Mask Defects:</text>
<text x="447.00" y="413.00" class="sm" text-anchor="start">0</text>
<text x="312.30" y="429.90" class="sm" text-anchor="start">Dead Bumps:</text>
<text x="447.00" y="429.90" class="sm" text-anchor="start">3</text>
<text x="312.30" y="446.50" class="sm" text-anchor="start">Dead Trimbits:</text>
<text x="447.00" y="446.50" class="sm" text-anchor="start">0</text>
<text x="312.30" y="463.30" class="sm" text-anchor="start">Address Probl:</text>
<text x="447.00" y="463.30" class="sm" text-anchor="start">0</text>
<text x="507.00" y="378.60" class="sm" text-anchor="start">Tested on:</text>
<text x="604.00" y="378.60" class="sm" text-anchor="start">Jun 20</text>
<text x="507.00" y="396.00" class="sm" text-anchor="start">Temp. [<tspan dy="-5.2" font-size="8">o</tspan><tspan dy="5.2">C]:</tspan></text>
<text x="604.00" y="396.00" class="sm" text-anchor="start">-10.0 +- 0.0</text>
<text x="507.00" y="411.80" class="sm" text-anchor="start">Trim / phCal:</text>
<text x="604.00" y="411.80" class="sm" text-anchor="start">yes / yes</text>
<text x="507.00" y="428.60" class="sm" text-anchor="start">Therm. cycl.:</text>
<text x="604.00" y="428.60" class="sm" text-anchor="start">yes</text>
<text x="507.00" y="445.50" class="sm" text-anchor="start">TBM1:</text>
<text x="604.00" y="445.50" class="sm" text-anchor="start">ok</text>
<text x="507.00" y="461.80" class="sm" text-anchor="start">TBM2:</text>
<text x="604.00" y="461.80" class="sm" text-anchor="start">ok</text>
<text x="669.70" y="378.60" class="sm" text-anchor="start">Noise [e]</text>
<text x="800.30" y="378.60" class="sm" text-anchor="start">158.9</text>
<text x="669.70" y="396.00" class="sm" text-anchor="start">Vcal Thr. Width [e]</text>
<text x="800.30" y="396.00" class="sm" text-anchor="start">81.1</text>
<text x="669.70" y="411.80" class="sm" text-anchor="start">Rel. Gain Width [%]</text>
<text x="800.30" y="411.80" class="sm" text-anchor="start">2.4</text>
<text x="669.70" y="428.60" class="sm" text-anchor="start">Pedestal Spread [e]</text>
<text x="800.30" y="428.60" class="sm" text-anchor="start">1189.9</text>
<rect x="47.5" y="527.5" width="151.0" height="121.0" fill="#fff" stroke="#000" stroke-width="1"/>
<text x="57.20" y="520.80" class="st" text-anchor="start">Noise</text>
<text x="45.60" y="651.00" class="ax" text-anchor="end">0</text>
<line x1="47.50" y1="628.50" x2="53.00" y2="628.50" stroke="#000" stroke-width="1"/>
<text x="45.60" y="631.00" class="ax" text-anchor="end">100</text>
<line x1="47.50" y1="607.50" x2="53.00" y2="607.50" stroke="#000" stroke-width="1"/>
<text x="45.60" y="610.00" class="ax" text-anchor="end">200</text>
<line x1="47.50" y1="587.50" x2="53.00" y2="587.50" stroke="#000" stroke-width="1"/>
<text x="45.60" y="590.00" class="ax" text-anchor="end">300</text>
<line x1="47.50" y1="567.50" x2="53.00" y2="567.50" stroke="#000" stroke-width="1"/>
<text x="45.60" y="570.00" class="ax" text-anchor="end">400</text>
<line x1="47.50" y1="547.50" x2="53.00" y2="547.50" stroke="#000" stroke-width="1"/>
<text x="45.60" y="550.00" class="ax" text-anchor="end">500</text>
<text x="45.60" y="530.00" class="ax" text-anchor="end">600</text>
<text x="45.80" y="657.50" class="ax" text-anchor="middle">0</text>
<line x1="66.50" y1="648.50" x2="66.50" y2="644.00" stroke="#000" stroke-width="1"/>
<text x="64.80" y="657.50" class="ax" text-anchor="middle">2</text>
<line x1="85.50" y1="648.50" x2="85.50" y2="644.00" stroke="#000" stroke-width="1"/>
<text x="83.80" y="657.50" class="ax" text-anchor="middle">4</text>
<line x1="104.50" y1="648.50" x2="104.50" y2="644.00" stroke="#000" stroke-width="1"/>
<text x="102.80" y="657.50" class="ax" text-anchor="middle">6</text>
<line x1="123.50" y1="648.50" x2="123.50" y2="644.00" stroke="#000" stroke-width="1"/>
<text x="121.80" y="657.50" class="ax" text-anchor="middle">8</text>
<line x1="141.50" y1="648.50" x2="141.50" y2="644.00" stroke="#000" stroke-width="1"/>
<text x="141.00" y="657.50" class="ax" text-anchor="middle">10</text>
<line x1="160.50" y1="648.50" x2="160.50" y2="644.00" stroke="#000" stroke-width="1"/>
<text x="160.00" y="657.50" class="ax" text-anchor="middle">12</text>
<line x1="179.50" y1="648.50" x2="179.50" y2="644.00" stroke="#000" stroke-width="1"/>
<text x="179.00" y="657.50" class="ax" text-anchor="middle">14</text>
<text x="198.00" y="657.50" class="ax" text-anchor="middle">16</text>
<line x1="47.00" y1="547.50" x2="199.00" y2="547.50" stroke="#ff0000" stroke-width="1" stroke-dasharray="3 3" shape-rendering="crispEdges"/>
<g shape-rendering="crispEdges">
<rect x="48" y="614" width="9" height="1" fill="#0000ff"/>
<rect x="52" y="610" width="1" height="9" fill="#0000ff"/>
<rect x="51" y="613" width="3" height="3" fill="#fff"/>
<rect x="51" y="612" width="3" height="1" fill="#0000ff"/>
<rect x="51" y="616" width="3" height="1" fill="#0000ff"/>
<rect x="50" y="613" width="1" height="3" fill="#0000ff"/>
<rect x="54" y="613" width="1" height="3" fill="#0000ff"/>
<rect x="56" y="614" width="11" height="1" fill="#0000ff"/>
<rect x="61" y="609" width="1" height="10" fill="#0000ff"/>
<rect x="60" y="613" width="3" height="3" fill="#fff"/>
<rect x="60" y="612" width="3" height="1" fill="#0000ff"/>
<rect x="60" y="616" width="3" height="1" fill="#0000ff"/>
<rect x="59" y="613" width="1" height="3" fill="#0000ff"/>
<rect x="63" y="613" width="1" height="3" fill="#0000ff"/>
<rect x="66" y="616" width="10" height="1" fill="#0000ff"/>
<rect x="70" y="612" width="1" height="9" fill="#0000ff"/>
<rect x="69" y="615" width="3" height="3" fill="#fff"/>
<rect x="69" y="614" width="3" height="1" fill="#0000ff"/>
<rect x="69" y="618" width="3" height="1" fill="#0000ff"/>
<rect x="68" y="615" width="1" height="3" fill="#0000ff"/>
<rect x="72" y="615" width="1" height="3" fill="#0000ff"/>
<rect x="75" y="618" width="11" height="1" fill="#0000ff"/>
<rect x="80" y="614" width="1" height="8" fill="#0000ff"/>
<rect x="79" y="617" width="3" height="3" fill="#fff"/>
<rect x="79" y="616" width="3" height="1" fill="#0000ff"/>
<rect x="79" y="620" width="3" height="1" fill="#0000ff"/>
<rect x="78" y="617" width="1" height="3" fill="#0000ff"/>
<rect x="82" y="617" width="1" height="3" fill="#0000ff"/>
<rect x="85" y="617" width="10" height="1" fill="#0000ff"/>
<rect x="89" y="613" width="1" height="8" fill="#0000ff"/>
<rect x="88" y="616" width="3" height="3" fill="#fff"/>
<rect x="88" y="615" width="3" height="1" fill="#0000ff"/>
<rect x="88" y="619" width="3" height="1" fill="#0000ff"/>
<rect x="87" y="616" width="1" height="3" fill="#0000ff"/>
<rect x="91" y="616" width="1" height="3" fill="#0000ff"/>
<rect x="94" y="618" width="11" height="1" fill="#0000ff"/>
<rect x="99" y="615" width="1" height="8" fill="#0000ff"/>
<rect x="98" y="617" width="3" height="3" fill="#fff"/>
<rect x="98" y="616" width="3" height="1" fill="#0000ff"/>
<rect x="98" y="620" width="3" height="1" fill="#0000ff"/>
<rect x="97" y="617" width="1" height="3" fill="#0000ff"/>
<rect x="101" y="617" width="1" height="3" fill="#0000ff"/>
<rect x="104" y="617" width="10" height="1" fill="#0000ff"/>
<rect x="108" y="613" width="1" height="8" fill="#0000ff"/>
<rect x="107" y="616" width="3" height="3" fill="#fff"/>
<rect x="107" y="615" width="3" height="1" fill="#0000ff"/>
<rect x="107" y="619" width="3" height="1" fill="#0000ff"/>
<rect x="106" y="616" width="1" height="3" fill="#0000ff"/>
<rect x="110" y="616" width="1" height="3" fill="#0000ff"/>
<rect x="113" y="614" width="11" height="1" fill="#0000ff"/>
<rect x="118" y="610" width="1" height="10" fill="#0000ff"/>
<rect x="117" y="613" width="3" height="3" fill="#fff"/>
<rect x="117" y="612" width="3" height="1" fill="#0000ff"/>
<rect x="117" y="616" width="3" height="1" fill="#0000ff"/>
<rect x="116" y="613" width="1" height="3" fill="#0000ff"/>
<rect x="120" y="613" width="1" height="3" fill="#0000ff"/>
<rect x="123" y="618" width="10" height="1" fill="#0000ff"/>
<rect x="127" y="614" width="1" height="8" fill="#0000ff"/>
<rect x="126" y="617" width="3" height="3" fill="#fff"/>
<rect x="126" y="616" width="3" height="1" fill="#0000ff"/>
<rect x="126" y="620" width="3" height="1" fill="#0000ff"/>
<rect x="125" y="617" width="1" height="3" fill="#0000ff"/>
<rect x="129" y="617" width="1" height="3" fill="#0000ff"/>
<rect x="132" y="616" width="10" height="1" fill="#0000ff"/>
<rect x="137" y="612" width="1" height="9" fill="#0000ff"/>
<rect x="136" y="615" width="3" height="3" fill="#fff"/>
<rect x="136" y="614" width="3" height="1" fill="#0000ff"/>
<rect x="136" y="618" width="3" height="1" fill="#0000ff"/>
<rect x="135" y="615" width="1" height="3" fill="#0000ff"/>
<rect x="139" y="615" width="1" height="3" fill="#0000ff"/>
<rect x="141" y="614" width="11" height="1" fill="#0000ff"/>
<rect x="146" y="610" width="1" height="10" fill="#0000ff"/>
<rect x="145" y="613" width="3" height="3" fill="#fff"/>
<rect x="145" y="612" width="3" height="1" fill="#0000ff"/>
<rect x="145" y="616" width="3" height="1" fill="#0000ff"/>
<rect x="144" y="613" width="1" height="3" fill="#0000ff"/>
<rect x="148" y="613" width="1" height="3" fill="#0000ff"/>
<rect x="151" y="616" width="10" height="1" fill="#0000ff"/>
<rect x="156" y="612" width="1" height="9" fill="#0000ff"/>
<rect x="155" y="615" width="3" height="3" fill="#fff"/>
<rect x="155" y="614" width="3" height="1" fill="#0000ff"/>
<rect x="155" y="618" width="3" height="1" fill="#0000ff"/>
<rect x="154" y="615" width="1" height="3" fill="#0000ff"/>
<rect x="158" y="615" width="1" height="3" fill="#0000ff"/>
<rect x="160" y="615" width="11" height="1" fill="#0000ff"/>
<rect x="165" y="611" width="1" height="9" fill="#0000ff"/>
<rect x="164" y="614" width="3" height="3" fill="#fff"/>
<rect x="164" y="613" width="3" height="1" fill="#0000ff"/>
<rect x="164" y="617" width="3" height="1" fill="#0000ff"/>
<rect x="163" y="614" width="1" height="3" fill="#0000ff"/>
<rect x="167" y="614" width="1" height="3" fill="#0000ff"/>
<rect x="170" y="616" width="10" height="1" fill="#0000ff"/>
<rect x="175" y="612" width="1" height="9" fill="#0000ff"/>
<rect x="174" y="615" width="3" height="3" fill="#fff"/>
<rect x="174" y="614" width="3" height="1" fill="#0000ff"/>
<rect x="174" y="618" width="3" height="1" fill="#0000ff"/>
<rect x="173" y="615" width="1" height="3" fill="#0000ff"/>
<rect x="177" y="615" width="1" height="3" fill="#0000ff"/>
<rect x="179" y="615" width="11" height="1" fill="#0000ff"/>
<rect x="184" y="611" width="1" height="9" fill="#0000ff"/>
<rect x="183" y="614" width="3" height="3" fill="#fff"/>
<rect x="183" y="613" width="3" height="1" fill="#0000ff"/>
<rect x="183" y="617" width="3" height="1" fill="#0000ff"/>
<rect x="182" y="614" width="1" height="3" fill="#0000ff"/>
<rect x="186" y="614" width="1" height="3" fill="#0000ff"/>
<rect x="189" y="614" width="9" height="1" fill="#0000ff"/>
<rect x="194" y="610" width="1" height="9" fill="#0000ff"/>
<rect x="193" y="613" width="3" height="3" fill="#fff"/>
<rect x="193" y="612" width="3" height="1" fill="#0000ff"/>
<rect x="193" y="616" width="3" height="1" fill="#0000ff"/>
<rect x="192" y="613" width="1" height="3" fill="#0000ff"/>
<rect x="196" y="613" width="1" height="3" fill="#0000ff"/>
</g>
<rect x="267.5" y="527.5" width="151.0" height="121.0" fill="#fff" stroke="#000" stroke-width="1"/>
<text x="276.00" y="520.80" class="st" text-anchor="start">Vcal Thr. Width</text>
<text x="264.60" y="651.00" class="ax" text-anchor="end">0</text>
<line x1="267.50" y1="628.50" x2="273.00" y2="628.50" stroke="#000" stroke-width="1"/>
<text x="264.60" y="631.00" class="ax" text-anchor="end">50</text>
<line x1="267.50" y1="607.50" x2="273.00" y2="607.50" stroke="#000" stroke-width="1"/>
<text x="264.60" y="610.00" class="ax" text-anchor="end">100</text>
<line x1="267.50" y1="587.50" x2="273.00" y2="587.50" stroke="#000" stroke-width="1"/>
<text x="264.60" y="590.00" class="ax" text-anchor="end">150</text>
<line x1="267.50" y1="567.50" x2="273.00" y2="567.50" stroke="#000" stroke-width="1"/>
<text x="264.60" y="570.00" class="ax" text-anchor="end">200</text>
<line x1="267.50" y1="547.50" x2="273.00" y2="547.50" stroke="#000" stroke-width="1"/>
<text x="264.60" y="550.00" class="ax" text-anchor="end">250</text>
<text x="264.60" y="530.00" class="ax" text-anchor="end">300</text>
<text x="265.80" y="657.50" class="ax" text-anchor="middle">0</text>
<line x1="286.50" y1="648.50" x2="286.50" y2="644.00" stroke="#000" stroke-width="1"/>
<text x="284.80" y="657.50" class="ax" text-anchor="middle">2</text>
<line x1="305.50" y1="648.50" x2="305.50" y2="644.00" stroke="#000" stroke-width="1"/>
<text x="303.80" y="657.50" class="ax" text-anchor="middle">4</text>
<line x1="324.50" y1="648.50" x2="324.50" y2="644.00" stroke="#000" stroke-width="1"/>
<text x="322.80" y="657.50" class="ax" text-anchor="middle">6</text>
<line x1="343.50" y1="648.50" x2="343.50" y2="644.00" stroke="#000" stroke-width="1"/>
<text x="341.80" y="657.50" class="ax" text-anchor="middle">8</text>
<line x1="361.50" y1="648.50" x2="361.50" y2="644.00" stroke="#000" stroke-width="1"/>
<text x="361.00" y="657.50" class="ax" text-anchor="middle">10</text>
<line x1="380.50" y1="648.50" x2="380.50" y2="644.00" stroke="#000" stroke-width="1"/>
<text x="380.00" y="657.50" class="ax" text-anchor="middle">12</text>
<line x1="399.50" y1="648.50" x2="399.50" y2="644.00" stroke="#000" stroke-width="1"/>
<text x="399.00" y="657.50" class="ax" text-anchor="middle">14</text>
<text x="418.00" y="657.50" class="ax" text-anchor="middle">16</text>
<line x1="267.00" y1="567.50" x2="419.00" y2="567.50" stroke="#ff0000" stroke-width="1" stroke-dasharray="3 3" shape-rendering="crispEdges"/>
<g shape-rendering="crispEdges">
<polyline fill="none" stroke="#50d24c" stroke-width="1" points="272.5,615.5 281.5,615.5 290.5,617.5 300.5,615.5 309.5,614.5 319.5,613.5 328.5,617.5 338.5,613.5 347.5,617.5 357.5,617.5 366.5,616.5 376.5,616.5 385.5,613.5 395.5,615.5 404.5,613.5 414.5,616.5"/>
<rect x="270.5" y="613.5" width="4" height="4" fill="none" stroke="#50d24c" stroke-width="1"/>
<rect x="279.5" y="613.5" width="4" height="4" fill="none" stroke="#50d24c" stroke-width="1"/>
<rect x="288.5" y="615.5" width="4" height="4" fill="none" stroke="#50d24c" stroke-width="1"/>
<rect x="298.5" y="613.5" width="4" height="4" fill="none" stroke="#50d24c" stroke-width="1"/>
<rect x="307.5" y="612.5" width="4" height="4" fill="none" stroke="#50d24c" stroke-width="1"/>
<rect x="317.5" y="611.5" width="4" height="4" fill="none" stroke="#50d24c" stroke-width="1"/>
<rect x="326.5" y="615.5" width="4" height="4" fill="none" stroke="#50d24c" stroke-width="1"/>
<rect x="336.5" y="611.5" width="4" height="4" fill="none" stroke="#50d24c" stroke-width="1"/>
<rect x="345.5" y="615.5" width="4" height="4" fill="none" stroke="#50d24c" stroke-width="1"/>
<rect x="355.5" y="615.5" width="4" height="4" fill="none" stroke="#50d24c" stroke-width="1"/>
<rect x="364.5" y="614.5" width="4" height="4" fill="none" stroke="#50d24c" stroke-width="1"/>
<rect x="374.5" y="614.5" width="4" height="4" fill="none" stroke="#50d24c" stroke-width="1"/>
<rect x="383.5" y="611.5" width="4" height="4" fill="none" stroke="#50d24c" stroke-width="1"/>
<rect x="393.5" y="613.5" width="4" height="4" fill="none" stroke="#50d24c" stroke-width="1"/>
<rect x="402.5" y="611.5" width="4" height="4" fill="none" stroke="#50d24c" stroke-width="1"/>
<rect x="412.5" y="614.5" width="4" height="4" fill="none" stroke="#50d24c" stroke-width="1"/>
</g>
<rect x="486.5" y="527.5" width="151.0" height="121.0" fill="#fff" stroke="#000" stroke-width="1"/>
<text x="496.10" y="520.80" class="st" text-anchor="start">Rel. Gain Width</text>
<text x="485.10" y="651.00" class="ax" text-anchor="end">0</text>
<line x1="486.50" y1="632.50" x2="492.00" y2="632.50" stroke="#000" stroke-width="1"/>
<text x="485.10" y="635.00" class="ax" text-anchor="end">0.02</text>
<line x1="486.50" y1="616.50" x2="492.00" y2="616.50" stroke="#000" stroke-width="1"/>
<text x="485.10" y="619.00" class="ax" text-anchor="end">0.04</text>
<line x1="486.50" y1="599.50" x2="492.00" y2="599.50" stroke="#000" stroke-width="1"/>
<text x="485.10" y="602.00" class="ax" text-anchor="end">0.06</text>
<line x1="486.50" y1="583.50" x2="492.00" y2="583.50" stroke="#000" stroke-width="1"/>
<text x="485.10" y="586.00" class="ax" text-anchor="end">0.08</text>
<line x1="486.50" y1="567.50" x2="492.00" y2="567.50" stroke="#000" stroke-width="1"/>
<text x="485.10" y="570.00" class="ax" text-anchor="end">0.1</text>
<line x1="486.50" y1="551.50" x2="492.00" y2="551.50" stroke="#000" stroke-width="1"/>
<text x="485.10" y="554.00" class="ax" text-anchor="end">0.12</text>
<line x1="486.50" y1="535.50" x2="492.00" y2="535.50" stroke="#000" stroke-width="1"/>
<text x="485.10" y="538.00" class="ax" text-anchor="end">0.14</text>
<text x="484.80" y="657.50" class="ax" text-anchor="middle">0</text>
<line x1="505.50" y1="648.50" x2="505.50" y2="644.00" stroke="#000" stroke-width="1"/>
<text x="503.80" y="657.50" class="ax" text-anchor="middle">2</text>
<line x1="524.50" y1="648.50" x2="524.50" y2="644.00" stroke="#000" stroke-width="1"/>
<text x="522.80" y="657.50" class="ax" text-anchor="middle">4</text>
<line x1="543.50" y1="648.50" x2="543.50" y2="644.00" stroke="#000" stroke-width="1"/>
<text x="541.80" y="657.50" class="ax" text-anchor="middle">6</text>
<line x1="562.50" y1="648.50" x2="562.50" y2="644.00" stroke="#000" stroke-width="1"/>
<text x="560.80" y="657.50" class="ax" text-anchor="middle">8</text>
<line x1="580.50" y1="648.50" x2="580.50" y2="644.00" stroke="#000" stroke-width="1"/>
<text x="580.00" y="657.50" class="ax" text-anchor="middle">10</text>
<line x1="599.50" y1="648.50" x2="599.50" y2="644.00" stroke="#000" stroke-width="1"/>
<text x="599.00" y="657.50" class="ax" text-anchor="middle">12</text>
<line x1="618.50" y1="648.50" x2="618.50" y2="644.00" stroke="#000" stroke-width="1"/>
<text x="618.00" y="657.50" class="ax" text-anchor="middle">14</text>
<text x="637.00" y="657.50" class="ax" text-anchor="middle">16</text>
<line x1="486.00" y1="567.50" x2="638.00" y2="567.50" stroke="#ff0000" stroke-width="1" stroke-dasharray="3 3" shape-rendering="crispEdges"/>
<g shape-rendering="crispEdges">
<polyline fill="none" stroke="#ff00ff" stroke-width="1" points="491.5,631.5 500.5,633.5 509.5,631.5 519.5,634.5 528.5,629.5 538.5,631.5 547.5,626.5 557.5,617.5 566.5,625.5 576.5,630.5 585.5,634.5 595.5,632.5 604.5,623.5 614.5,632.5 623.5,632.5 633.5,627.5"/>
<rect x="491" y="628" width="1" height="1" fill="#ff00ff"/>
<rect x="490" y="629" width="1" height="2" fill="#ff00ff"/>
<rect x="492" y="629" width="1" height="2" fill="#ff00ff"/>
<rect x="489" y="631" width="1" height="1" fill="#ff00ff"/>
<rect x="493" y="631" width="1" height="1" fill="#ff00ff"/>
<rect x="489" y="632" width="5" height="1" fill="#ff00ff"/>
<rect x="500" y="630" width="1" height="1" fill="#ff00ff"/>
<rect x="499" y="631" width="1" height="2" fill="#ff00ff"/>
<rect x="501" y="631" width="1" height="2" fill="#ff00ff"/>
<rect x="498" y="633" width="1" height="1" fill="#ff00ff"/>
<rect x="502" y="633" width="1" height="1" fill="#ff00ff"/>
<rect x="498" y="634" width="5" height="1" fill="#ff00ff"/>
<rect x="509" y="628" width="1" height="1" fill="#ff00ff"/>
<rect x="508" y="629" width="1" height="2" fill="#ff00ff"/>
<rect x="510" y="629" width="1" height="2" fill="#ff00ff"/>
<rect x="507" y="631" width="1" height="1" fill="#ff00ff"/>
<rect x="511" y="631" width="1" height="1" fill="#ff00ff"/>
<rect x="507" y="632" width="5" height="1" fill="#ff00ff"/>
<rect x="519" y="631" width="1" height="1" fill="#ff00ff"/>
<rect x="518" y="632" width="1" height="2" fill="#ff00ff"/>
<rect x="520" y="632" width="1" height="2" fill="#ff00ff"/>
<rect x="517" y="634" width="1" height="1" fill="#ff00ff"/>
<rect x="521" y="634" width="1" height="1" fill="#ff00ff"/>
<rect x="517" y="635" width="5" height="1" fill="#ff00ff"/>
<rect x="528" y="626" width="1" height="1" fill="#ff00ff"/>
<rect x="527" y="627" width="1" height="2" fill="#ff00ff"/>
<rect x="529" y="627" width="1" height="2" fill="#ff00ff"/>
<rect x="526" y="629" width="1" height="1" fill="#ff00ff"/>
<rect x="530" y="629" width="1" height="1" fill="#ff00ff"/>
<rect x="526" y="630" width="5" height="1" fill="#ff00ff"/>
<rect x="538" y="628" width="1" height="1" fill="#ff00ff"/>
<rect x="537" y="629" width="1" height="2" fill="#ff00ff"/>
<rect x="539" y="629" width="1" height="2" fill="#ff00ff"/>
<rect x="536" y="631" width="1" height="1" fill="#ff00ff"/>
<rect x="540" y="631" width="1" height="1" fill="#ff00ff"/>
<rect x="536" y="632" width="5" height="1" fill="#ff00ff"/>
<rect x="547" y="623" width="1" height="1" fill="#ff00ff"/>
<rect x="546" y="624" width="1" height="2" fill="#ff00ff"/>
<rect x="548" y="624" width="1" height="2" fill="#ff00ff"/>
<rect x="545" y="626" width="1" height="1" fill="#ff00ff"/>
<rect x="549" y="626" width="1" height="1" fill="#ff00ff"/>
<rect x="545" y="627" width="5" height="1" fill="#ff00ff"/>
<rect x="557" y="614" width="1" height="1" fill="#ff00ff"/>
<rect x="556" y="615" width="1" height="2" fill="#ff00ff"/>
<rect x="558" y="615" width="1" height="2" fill="#ff00ff"/>
<rect x="555" y="617" width="1" height="1" fill="#ff00ff"/>
<rect x="559" y="617" width="1" height="1" fill="#ff00ff"/>
<rect x="555" y="618" width="5" height="1" fill="#ff00ff"/>
<rect x="566" y="622" width="1" height="1" fill="#ff00ff"/>
<rect x="565" y="623" width="1" height="2" fill="#ff00ff"/>
<rect x="567" y="623" width="1" height="2" fill="#ff00ff"/>
<rect x="564" y="625" width="1" height="1" fill="#ff00ff"/>
<rect x="568" y="625" width="1" height="1" fill="#ff00ff"/>
<rect x="564" y="626" width="5" height="1" fill="#ff00ff"/>
<rect x="576" y="627" width="1" height="1" fill="#ff00ff"/>
<rect x="575" y="628" width="1" height="2" fill="#ff00ff"/>
<rect x="577" y="628" width="1" height="2" fill="#ff00ff"/>
<rect x="574" y="630" width="1" height="1" fill="#ff00ff"/>
<rect x="578" y="630" width="1" height="1" fill="#ff00ff"/>
<rect x="574" y="631" width="5" height="1" fill="#ff00ff"/>
<rect x="585" y="631" width="1" height="1" fill="#ff00ff"/>
<rect x="584" y="632" width="1" height="2" fill="#ff00ff"/>
<rect x="586" y="632" width="1" height="2" fill="#ff00ff"/>
<rect x="583" y="634" width="1" height="1" fill="#ff00ff"/>
<rect x="587" y="634" width="1" height="1" fill="#ff00ff"/>
<rect x="583" y="635" width="5" height="1" fill="#ff00ff"/>
<rect x="595" y="629" width="1" height="1" fill="#ff00ff"/>
<rect x="594" y="630" width="1" height="2" fill="#ff00ff"/>
<rect x="596" y="630" width="1" height="2" fill="#ff00ff"/>
<rect x="593" y="632" width="1" height="1" fill="#ff00ff"/>
<rect x="597" y="632" width="1" height="1" fill="#ff00ff"/>
<rect x="593" y="633" width="5" height="1" fill="#ff00ff"/>
<rect x="604" y="620" width="1" height="1" fill="#ff00ff"/>
<rect x="603" y="621" width="1" height="2" fill="#ff00ff"/>
<rect x="605" y="621" width="1" height="2" fill="#ff00ff"/>
<rect x="602" y="623" width="1" height="1" fill="#ff00ff"/>
<rect x="606" y="623" width="1" height="1" fill="#ff00ff"/>
<rect x="602" y="624" width="5" height="1" fill="#ff00ff"/>
<rect x="614" y="629" width="1" height="1" fill="#ff00ff"/>
<rect x="613" y="630" width="1" height="2" fill="#ff00ff"/>
<rect x="615" y="630" width="1" height="2" fill="#ff00ff"/>
<rect x="612" y="632" width="1" height="1" fill="#ff00ff"/>
<rect x="616" y="632" width="1" height="1" fill="#ff00ff"/>
<rect x="612" y="633" width="5" height="1" fill="#ff00ff"/>
<rect x="623" y="629" width="1" height="1" fill="#ff00ff"/>
<rect x="622" y="630" width="1" height="2" fill="#ff00ff"/>
<rect x="624" y="630" width="1" height="2" fill="#ff00ff"/>
<rect x="621" y="632" width="1" height="1" fill="#ff00ff"/>
<rect x="625" y="632" width="1" height="1" fill="#ff00ff"/>
<rect x="621" y="633" width="5" height="1" fill="#ff00ff"/>
<rect x="633" y="624" width="1" height="1" fill="#ff00ff"/>
<rect x="632" y="625" width="1" height="2" fill="#ff00ff"/>
<rect x="634" y="625" width="1" height="2" fill="#ff00ff"/>
<rect x="631" y="627" width="1" height="1" fill="#ff00ff"/>
<rect x="635" y="627" width="1" height="1" fill="#ff00ff"/>
<rect x="631" y="628" width="5" height="1" fill="#ff00ff"/>
</g>
<rect x="706.5" y="527.5" width="151.0" height="121.0" fill="#fff" stroke="#000" stroke-width="1"/>
<text x="714.90" y="520.80" class="st" text-anchor="start">Pedestal Spread</text>
<text x="704.00" y="651.00" class="ax" text-anchor="end">0</text>
<line x1="706.50" y1="630.50" x2="712.00" y2="630.50" stroke="#000" stroke-width="1"/>
<text x="704.00" y="633.00" class="ax" text-anchor="end">500</text>
<line x1="706.50" y1="613.50" x2="712.00" y2="613.50" stroke="#000" stroke-width="1"/>
<text x="704.00" y="616.00" class="ax" text-anchor="end">1000</text>
<line x1="706.50" y1="596.50" x2="712.00" y2="596.50" stroke="#000" stroke-width="1"/>
<text x="704.00" y="599.00" class="ax" text-anchor="end">1500</text>
<line x1="706.50" y1="579.50" x2="712.00" y2="579.50" stroke="#000" stroke-width="1"/>
<text x="704.00" y="582.00" class="ax" text-anchor="end">2000</text>
<line x1="706.50" y1="561.50" x2="712.00" y2="561.50" stroke="#000" stroke-width="1"/>
<text x="704.00" y="564.00" class="ax" text-anchor="end">2500</text>
<line x1="706.50" y1="544.50" x2="712.00" y2="544.50" stroke="#000" stroke-width="1"/>
<text x="704.00" y="547.00" class="ax" text-anchor="end">3000</text>
<text x="704.00" y="530.00" class="ax" text-anchor="end">3500</text>
<text x="704.80" y="657.50" class="ax" text-anchor="middle">0</text>
<line x1="725.50" y1="648.50" x2="725.50" y2="644.00" stroke="#000" stroke-width="1"/>
<text x="723.80" y="657.50" class="ax" text-anchor="middle">2</text>
<line x1="744.50" y1="648.50" x2="744.50" y2="644.00" stroke="#000" stroke-width="1"/>
<text x="742.80" y="657.50" class="ax" text-anchor="middle">4</text>
<line x1="763.50" y1="648.50" x2="763.50" y2="644.00" stroke="#000" stroke-width="1"/>
<text x="761.80" y="657.50" class="ax" text-anchor="middle">6</text>
<line x1="782.50" y1="648.50" x2="782.50" y2="644.00" stroke="#000" stroke-width="1"/>
<text x="780.80" y="657.50" class="ax" text-anchor="middle">8</text>
<line x1="800.50" y1="648.50" x2="800.50" y2="644.00" stroke="#000" stroke-width="1"/>
<text x="800.00" y="657.50" class="ax" text-anchor="middle">10</text>
<line x1="819.50" y1="648.50" x2="819.50" y2="644.00" stroke="#000" stroke-width="1"/>
<text x="819.00" y="657.50" class="ax" text-anchor="middle">12</text>
<line x1="838.50" y1="648.50" x2="838.50" y2="644.00" stroke="#000" stroke-width="1"/>
<text x="838.00" y="657.50" class="ax" text-anchor="middle">14</text>
<text x="857.00" y="657.50" class="ax" text-anchor="middle">16</text>
<line x1="706.00" y1="561.50" x2="858.00" y2="561.50" stroke="#ff0000" stroke-width="1" stroke-dasharray="3 3" shape-rendering="crispEdges"/>
<g shape-rendering="crispEdges">
<polyline fill="none" stroke="#000000" stroke-width="1" points="711.5,602.5 720.5,613.5 729.5,611.5 739.5,607.5 748.5,602.5 758.5,610.5 767.5,600.5 777.5,605.5 786.5,611.5 796.5,604.5 805.5,610.5 815.5,612.5 824.5,609.5 834.5,605.5 843.5,606.5 853.5,598.5"/>
<rect x="709" y="600" width="4" height="1" fill="#000000"/>
<rect x="710" y="601" width="3" height="1" fill="#000000"/>
<rect x="711" y="602" width="2" height="1" fill="#000000"/>
<rect x="711" y="603" width="1" height="1" fill="#000000"/>
<rect x="718" y="611" width="4" height="1" fill="#000000"/>
<rect x="719" y="612" width="3" height="1" fill="#000000"/>
<rect x="720" y="613" width="2" height="1" fill="#000000"/>
<rect x="720" y="614" width="1" height="1" fill="#000000"/>
<rect x="727" y="609" width="4" height="1" fill="#000000"/>
<rect x="728" y="610" width="3" height="1" fill="#000000"/>
<rect x="729" y="611" width="2" height="1" fill="#000000"/>
<rect x="729" y="612" width="1" height="1" fill="#000000"/>
<rect x="737" y="605" width="4" height="1" fill="#000000"/>
<rect x="738" y="606" width="3" height="1" fill="#000000"/>
<rect x="739" y="607" width="2" height="1" fill="#000000"/>
<rect x="739" y="608" width="1" height="1" fill="#000000"/>
<rect x="746" y="600" width="4" height="1" fill="#000000"/>
<rect x="747" y="601" width="3" height="1" fill="#000000"/>
<rect x="748" y="602" width="2" height="1" fill="#000000"/>
<rect x="748" y="603" width="1" height="1" fill="#000000"/>
<rect x="756" y="608" width="4" height="1" fill="#000000"/>
<rect x="757" y="609" width="3" height="1" fill="#000000"/>
<rect x="758" y="610" width="2" height="1" fill="#000000"/>
<rect x="758" y="611" width="1" height="1" fill="#000000"/>
<rect x="765" y="598" width="4" height="1" fill="#000000"/>
<rect x="766" y="599" width="3" height="1" fill="#000000"/>
<rect x="767" y="600" width="2" height="1" fill="#000000"/>
<rect x="767" y="601" width="1" height="1" fill="#000000"/>
<rect x="775" y="603" width="4" height="1" fill="#000000"/>
<rect x="776" y="604" width="3" height="1" fill="#000000"/>
<rect x="777" y="605" width="2" height="1" fill="#000000"/>
<rect x="777" y="606" width="1" height="1" fill="#000000"/>
<rect x="784" y="609" width="4" height="1" fill="#000000"/>
<rect x="785" y="610" width="3" height="1" fill="#000000"/>
<rect x="786" y="611" width="2" height="1" fill="#000000"/>
<rect x="786" y="612" width="1" height="1" fill="#000000"/>
<rect x="794" y="602" width="4" height="1" fill="#000000"/>
<rect x="795" y="603" width="3" height="1" fill="#000000"/>
<rect x="796" y="604" width="2" height="1" fill="#000000"/>
<rect x="796" y="605" width="1" height="1" fill="#000000"/>
<rect x="803" y="608" width="4" height="1" fill="#000000"/>
<rect x="804" y="609" width="3" height="1" fill="#000000"/>
<rect x="805" y="610" width="2" height="1" fill="#000000"/>
<rect x="805" y="611" width="1" height="1" fill="#000000"/>
<rect x="813" y="610" width="4" height="1" fill="#000000"/>
<rect x="814" y="611" width="3" height="1" fill="#000000"/>
<rect x="815" y="612" width="2" height="1" fill="#000000"/>
<rect x="815" y="613" width="1" height="1" fill="#000000"/>
<rect x="822" y="607" width="4" height="1" fill="#000000"/>
<rect x="823" y="608" width="3" height="1" fill="#000000"/>
<rect x="824" y="609" width="2" height="1" fill="#000000"/>
<rect x="824" y="610" width="1" height="1" fill="#000000"/>
<rect x="832" y="603" width="4" height="1" fill="#000000"/>
<rect x="833" y="604" width="3" height="1" fill="#000000"/>
<rect x="834" y="605" width="2" height="1" fill="#000000"/>
<rect x="834" y="606" width="1" height="1" fill="#000000"/>
<rect x="841" y="604" width="4" height="1" fill="#000000"/>
<rect x="842" y="605" width="3" height="1" fill="#000000"/>
<rect x="843" y="606" width="2" height="1" fill="#000000"/>
<rect x="843" y="607" width="1" height="1" fill="#000000"/>
<rect x="851" y="596" width="4" height="1" fill="#000000"/>
<rect x="852" y="597" width="3" height="1" fill="#000000"/>
<rect x="853" y="598" width="2" height="1" fill="#000000"/>
<rect x="853" y="599" width="1" height="1" fill="#000000"/>
</g>
</svg></body></html>
